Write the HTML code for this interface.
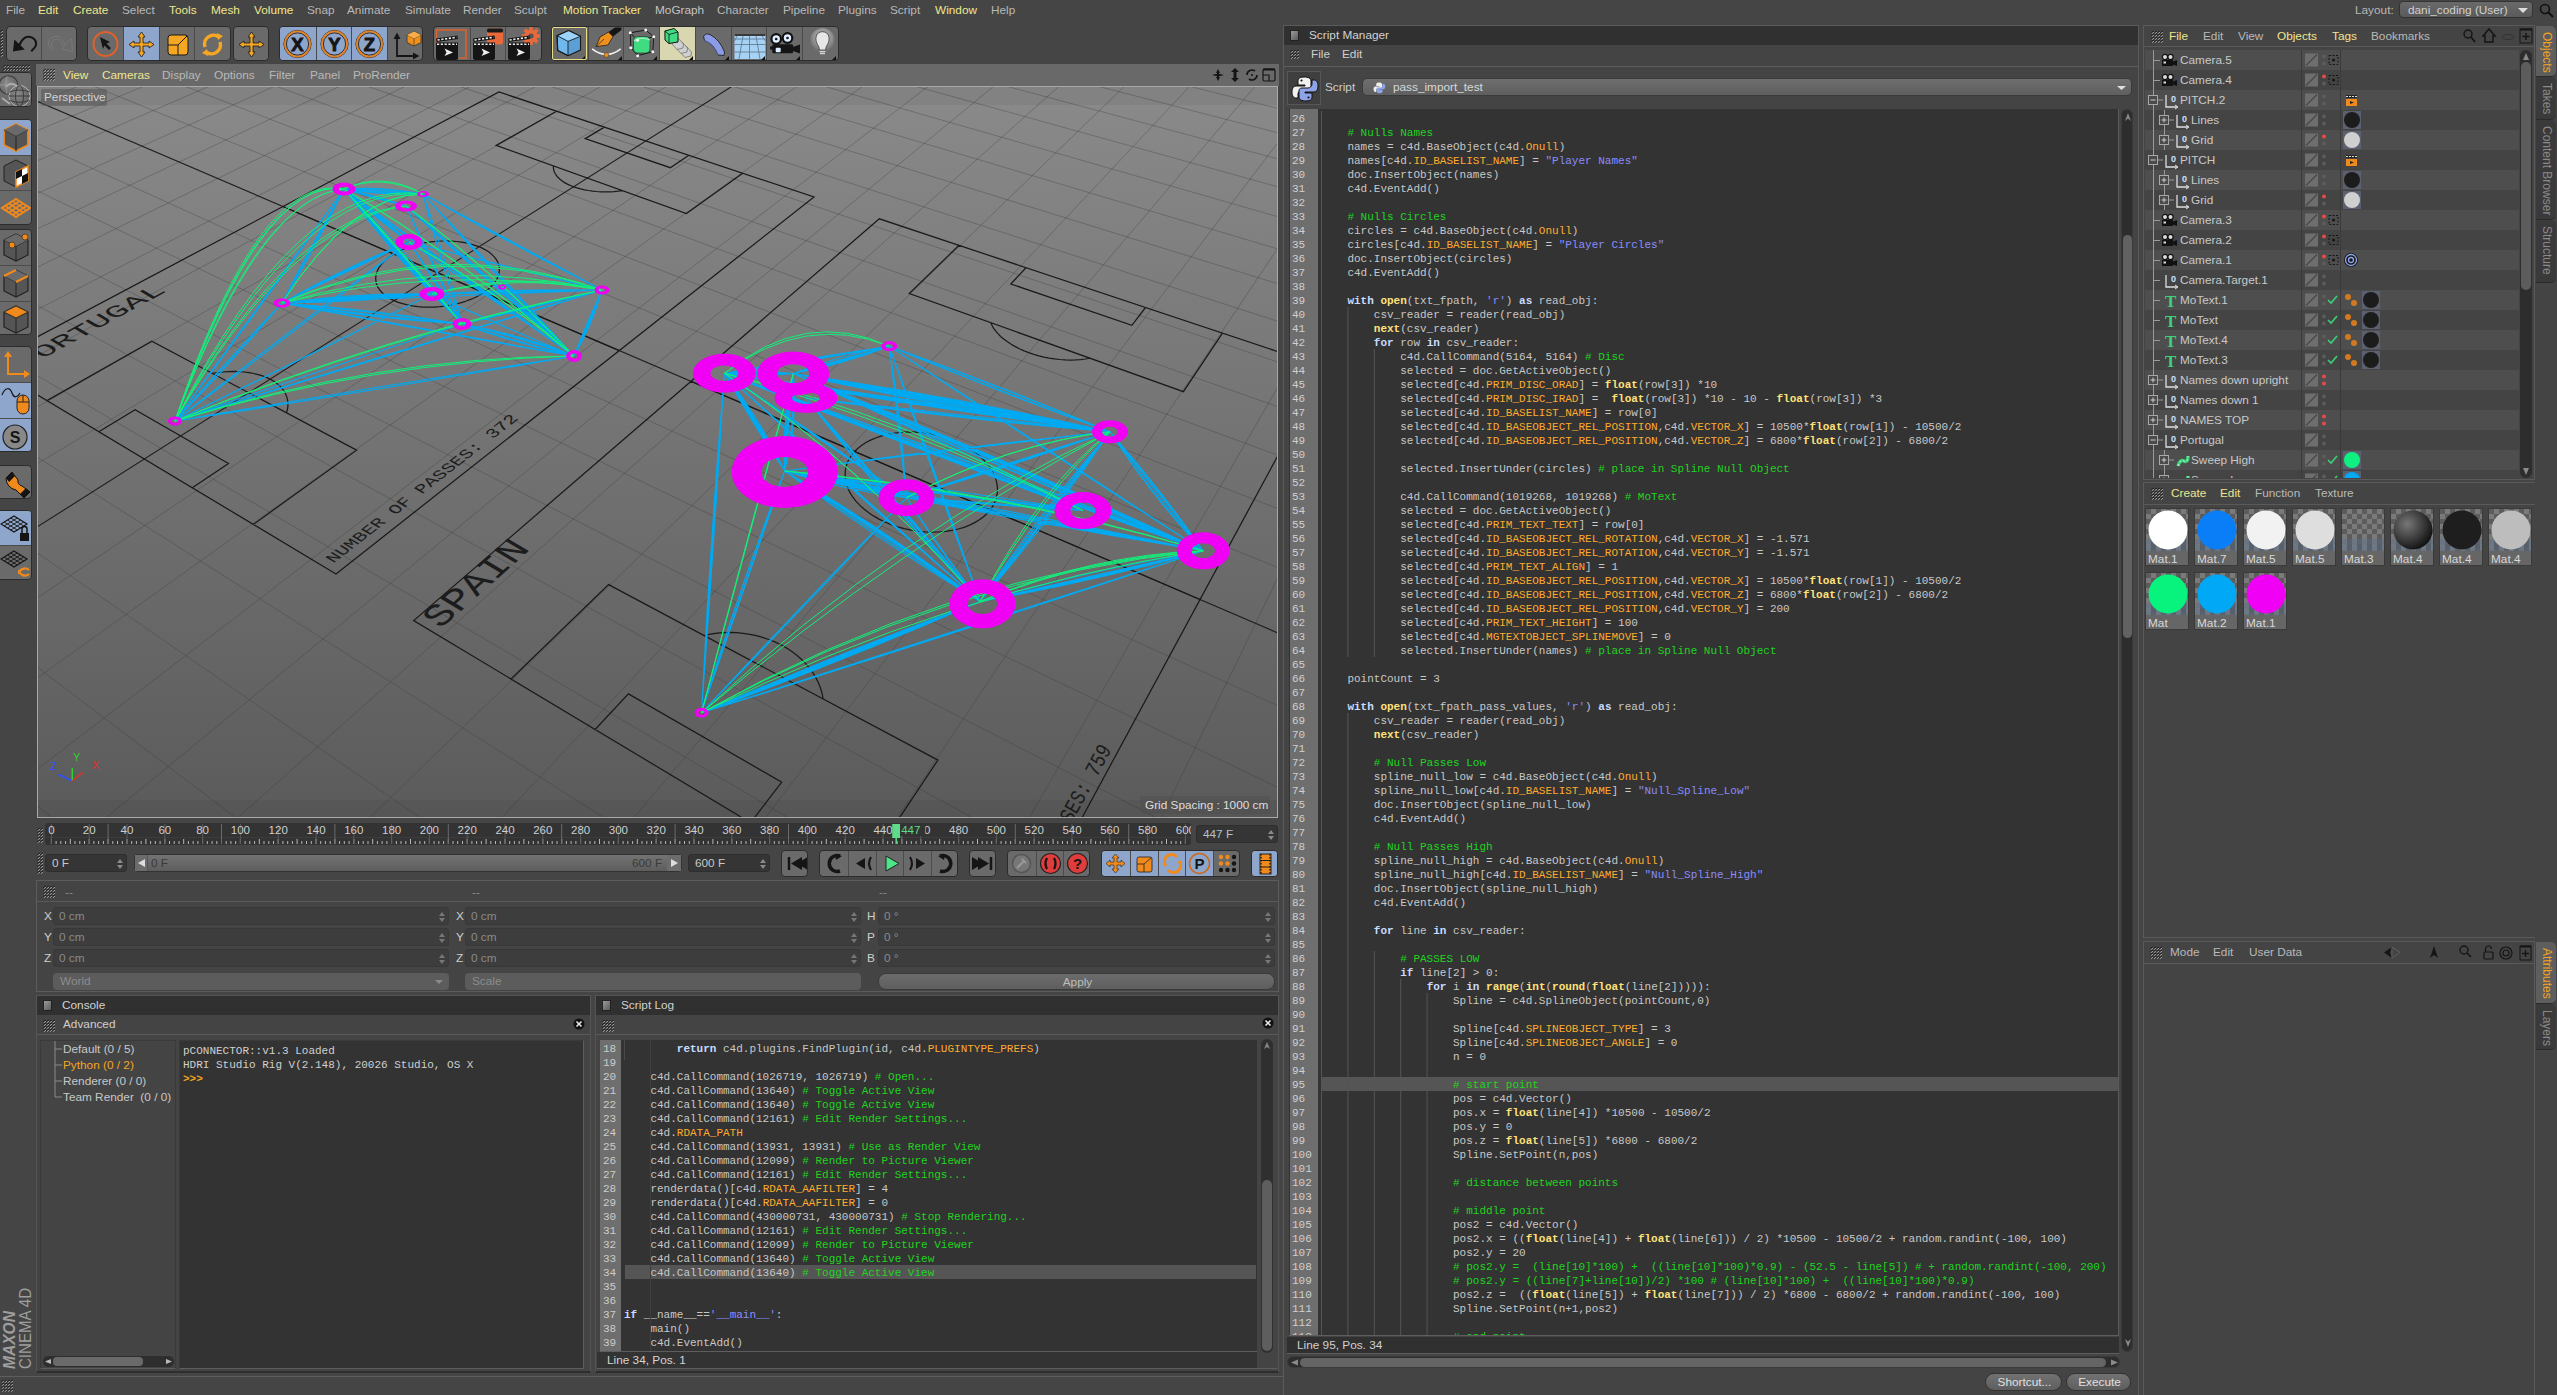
<!DOCTYPE html><html><head><meta charset="utf-8"><style>
*{margin:0;padding:0;box-sizing:border-box}
html,body{width:2557px;height:1395px;overflow:hidden;background:#454545}
body{position:relative;font-family:"Liberation Sans",sans-serif;font-size:12px;color:#bdbdbd}
div{position:absolute}
.t{white-space:pre;line-height:14px}
.m{font-family:"Liberation Mono",monospace;font-size:11px;white-space:pre;line-height:14px}
.grip{background:repeating-linear-gradient(45deg,rgba(28,28,28,0.85) 0 1.2px,transparent 1.2px 3.4px),repeating-linear-gradient(135deg,#d4d4d4 0 1.1px,#232323 1.1px 3.4px)}
.btn{background:#676767;border:1px solid #2e2e2e;border-radius:4px}
.bl{background:#8fa6cc}
.fld{background:#3c3c3c;border:1px solid #333;border-radius:3px}
svg{position:absolute;left:0;top:0;overflow:visible}
</style></head><body><div class="t" style="left:6px;top:3px;color:#b8b8b8;font-size:11.8px">File</div><div class="t" style="left:38px;top:3px;color:#efe68e;font-size:11.8px">Edit</div><div class="t" style="left:73px;top:3px;color:#efe68e;font-size:11.8px">Create</div><div class="t" style="left:122px;top:3px;color:#b8b8b8;font-size:11.8px">Select</div><div class="t" style="left:169px;top:3px;color:#efe68e;font-size:11.8px">Tools</div><div class="t" style="left:211px;top:3px;color:#efe68e;font-size:11.8px">Mesh</div><div class="t" style="left:254px;top:3px;color:#efe68e;font-size:11.8px">Volume</div><div class="t" style="left:307px;top:3px;color:#b8b8b8;font-size:11.8px">Snap</div><div class="t" style="left:347px;top:3px;color:#b8b8b8;font-size:11.8px">Animate</div><div class="t" style="left:405px;top:3px;color:#b8b8b8;font-size:11.8px">Simulate</div><div class="t" style="left:463px;top:3px;color:#b8b8b8;font-size:11.8px">Render</div><div class="t" style="left:514px;top:3px;color:#b8b8b8;font-size:11.8px">Sculpt</div><div class="t" style="left:563px;top:3px;color:#efe68e;font-size:11.8px">Motion Tracker</div><div class="t" style="left:655px;top:3px;color:#c4c4c4;font-size:11.8px">MoGraph</div><div class="t" style="left:717px;top:3px;color:#b8b8b8;font-size:11.8px">Character</div><div class="t" style="left:783px;top:3px;color:#b8b8b8;font-size:11.8px">Pipeline</div><div class="t" style="left:838px;top:3px;color:#b8b8b8;font-size:11.8px">Plugins</div><div class="t" style="left:890px;top:3px;color:#b8b8b8;font-size:11.8px">Script</div><div class="t" style="left:935px;top:3px;color:#efe68e;font-size:11.8px">Window</div><div class="t" style="left:991px;top:3px;color:#b8b8b8;font-size:11.8px">Help</div><div class="t" style="left:2355px;top:3px;color:#b8b8b8;font-size:11.8px">Layout:</div><div style="left:2399px;top:1px;width:134px;height:17px;background:linear-gradient(#6a6a6a,#5a5a5a);border:1px solid #333;border-radius:4px"><div class="t" style="left:8px;top:1px;color:#d0d0d0;font-size:11.8px">dani_coding (User)</div><svg width="134" height="17"><path d="M118 6 L128 6 L123 11 Z" fill="#ddd"/></svg></div><svg style="left:2538px;top:2px" width="18" height="18"><circle cx="7" cy="7" r="4.5" fill="none" stroke="#111" stroke-width="1.6"/><path d="M10 10 L15 15" stroke="#111" stroke-width="2"/></svg><svg style="left:0px;top:30px" width="3" height="27"><path d="M0.2 2.6 L2.6 0.2 M0.2 5.6 L2.6 3.2 M0.2 8.6 L2.6 6.2 M0.2 11.6 L2.6 9.2 M0.2 14.6 L2.6 12.2 M0.2 17.6 L2.6 15.2 M0.2 20.6 L2.6 18.2 M0.2 23.6 L2.6 21.2 M0.2 26.6 L2.6 24.2" stroke="#151515" stroke-width="1.3"/><path d="M0.9 2.8 L2.8 0.9 M0.9 5.8 L2.8 3.9 M0.9 8.8 L2.8 6.9 M0.9 11.8 L2.8 9.9 M0.9 14.8 L2.8 12.9 M0.9 17.8 L2.8 15.9 M0.9 20.8 L2.8 18.9 M0.9 23.8 L2.8 21.9 M0.9 26.8 L2.8 24.9" stroke="#e0e0e0" stroke-width="0.9"/></svg><div style="left:6px;top:26px;width:71px;height:35px;background:#6a6a6a;border:1px solid #2c2c2c;border-radius:4px;overflow:hidden"><div style="left:0px;top:0px;width:34px;height:33px;"><svg width="34" height="35"><path d="M5.9 24.4 L7.4 12.6 L17.8 22.6 Z" fill="#151515"/><path d="M12.5 18 C15 12 19 9.5 22 9.8 C27 10.2 30 14 28.8 18.5 C28 21 26 22.5 24.2 24.3" fill="none" stroke="#151515" stroke-width="2.1"/></svg></div><div style="left:34px;top:0px;width:35px;height:33px;border-left:1px solid #4a4a4a;"><svg width="35" height="35"><g fill="none" stroke="#7c7c7c" stroke-width="0.8"><path d="M30.5 24.5 L29.5 11.5 L19.5 22 Z"/><path d="M23 17.5 C20.5 11.5 16.5 9 13.5 9.5 C8.5 10 5.5 14 6.8 18.5 C7.5 21 9.5 22.5 11.3 24.3"/><path d="M21 18.5 C19 14 16 12 13.8 12.3 C10.5 12.8 9 15.5 9.5 18 C10 20 11 21 12.5 22.3"/></g></svg></div></div><div style="left:87px;top:26px;width:143.5px;height:35px;background:#6a6a6a;border:1px solid #2c2c2c;border-radius:4px;overflow:hidden"><div style="left:0px;top:0px;width:35px;height:33px;"><svg width="35" height="35"><circle cx="17.5" cy="17" r="12" fill="none" stroke="#e0612a" stroke-width="2"/><path d="M12 10 L22 15 L18.5 16.5 L23 21 L21 23 L16.5 18.5 L15 22 Z" fill="#151515"/></svg></div><div style="left:35px;top:0px;width:35.5px;height:33px;background:#8fa6cc;border-left:1px solid #4a4a4a;"><svg width="35.5" height="35"><g fill="#f5a623" stroke="#1a1a1a" stroke-width="0.8"><path d="M17.5 5 L21 10 L19 10 L19 16 L25 16 L25 14 L30 17.5 L25 21 L25 19 L19 19 L19 25 L21 25 L17.5 30 L14 25 L16 25 L16 19 L10 19 L10 21 L5 17.5 L10 14 L10 16 L16 16 L16 10 L14 10 Z"/></g></svg></div><div style="left:70.5px;top:0px;width:35.5px;height:33px;border-left:1px solid #4a4a4a;"><svg width="35.5" height="35"><rect x="8" y="8" width="20" height="20" rx="3" fill="#f5a623" stroke="#1a1a1a" stroke-width="1"/><path d="M8 18 L18 18 L18 28 M18 18 L27 9" fill="none" stroke="#1a1a1a" stroke-width="1"/></svg></div><div style="left:106.0px;top:0px;width:35.5px;height:33px;border-left:1px solid #4a4a4a;"><svg width="35.5" height="35"><path d="M10 20 A9 9 0 0 1 24 10" fill="none" stroke="#f5a623" stroke-width="3.5"/><path d="M25 15 A9 9 0 0 1 11 25" fill="none" stroke="#f5a623" stroke-width="3.5"/><path d="M22 6 L28 9 L23 13 Z M13 29 L7 26 L12 22 Z" fill="#f5a623"/></svg></div></div><div style="left:233px;top:26px;width:36px;height:35px;background:#6a6a6a;border:1px solid #2c2c2c;border-radius:4px;overflow:hidden"><div style="left:0px;top:0px;width:34px;height:33px;"><svg width="34" height="35"><g fill="#f5a623" stroke="#1a1a1a" stroke-width="0.8"><path d="M17.5 5 L21 10 L19 10 L19 16 L25 16 L25 14 L30 17.5 L25 21 L25 19 L19 19 L19 25 L21 25 L17.5 30 L14 25 L16 25 L16 19 L10 19 L10 21 L5 17.5 L10 14 L10 16 L16 16 L16 10 L14 10 Z"/></g></svg></div></div><div style="left:279px;top:26px;width:144.0px;height:35px;background:#6a6a6a;border:1px solid #2c2c2c;border-radius:4px;overflow:hidden"><div style="left:0px;top:0px;width:35.5px;height:33px;background:#8fa6cc;"><svg width="35.5" height="35"><circle cx="17.5" cy="17" r="13.6" fill="none" stroke="#222" stroke-width="0.9"/><circle cx="17.5" cy="17" r="12.4" fill="none" stroke="#e8821e" stroke-width="2"/><circle cx="17.5" cy="17" r="11.1" fill="none" stroke="#222" stroke-width="0.9"/><text x="17.5" y="23.5" font-family="Liberation Sans" font-weight="bold" font-size="18.5" text-anchor="middle" fill="#151515" stroke="#151515" stroke-width="0.9">X</text></svg></div><div style="left:35.5px;top:0px;width:35.5px;height:33px;background:#8fa6cc;border-left:1px solid #4a4a4a;"><svg width="35.5" height="35"><circle cx="17.5" cy="17" r="13.6" fill="none" stroke="#222" stroke-width="0.9"/><circle cx="17.5" cy="17" r="12.4" fill="none" stroke="#e8821e" stroke-width="2"/><circle cx="17.5" cy="17" r="11.1" fill="none" stroke="#222" stroke-width="0.9"/><text x="17.5" y="23.5" font-family="Liberation Sans" font-weight="bold" font-size="18.5" text-anchor="middle" fill="#151515" stroke="#151515" stroke-width="0.9">Y</text></svg></div><div style="left:71.0px;top:0px;width:35.5px;height:33px;background:#8fa6cc;border-left:1px solid #4a4a4a;"><svg width="35.5" height="35"><circle cx="17.5" cy="17" r="13.6" fill="none" stroke="#222" stroke-width="0.9"/><circle cx="17.5" cy="17" r="12.4" fill="none" stroke="#e8821e" stroke-width="2"/><circle cx="17.5" cy="17" r="11.1" fill="none" stroke="#222" stroke-width="0.9"/><text x="17.5" y="23.5" font-family="Liberation Sans" font-weight="bold" font-size="18.5" text-anchor="middle" fill="#151515" stroke="#151515" stroke-width="0.9">Z</text></svg></div><div style="left:106.5px;top:0px;width:35.5px;height:33px;border-left:1px solid #4a4a4a;"><svg width="35.5" height="35"><path d="M9 8 L9 29 L29 29" fill="none" stroke="#151515" stroke-width="1.8"/><path d="M5.5 12 L9 5.5 L12.5 12 Z M25 25.5 L31.5 29 L25 32.5 Z" fill="#151515"/><path d="M19 8 L26 4.5 L33 8 L33 15.5 L26 19 L19 15.5 Z" fill="#f0901c" stroke="#2a2a2a" stroke-width="0.7"/><path d="M19 8 L26 11.5 L33 8 M26 11.5 L26 19" fill="none" stroke="#2a2a2a" stroke-width="0.6"/><path d="M19 8 L26 4.5 L33 8 L26 11.5 Z" fill="#f7ad4a"/></svg></div></div><div style="left:433px;top:26px;width:108.5px;height:35px;background:#6a6a6a;border:1px solid #2c2c2c;border-radius:4px;overflow:hidden"><div style="left:0px;top:0px;width:35.5px;height:33px;"><svg width="35.5" height="35"><path d="M2.5 16 L2.5 3 L32 3 L32 31 L25 31" fill="none" stroke="#e0612a" stroke-width="1.6"/><path d="M2 19 L24 19 L24 31 Q24 33 22 33 L4 33 Q2 33 2 31 Z" fill="#151515"/><path d="M2 15.5 L24 15.5 L24 19 L2 19 Z" fill="#151515"/><path d="M3 17.3 L23 17.3" stroke="#eee" stroke-width="1.6" stroke-dasharray="2.2 1.6"/><path d="M2 11.5 L23.5 8.5 L24 12 L2.5 15 Z" fill="#151515"/><path d="M3.5 13 L22.5 10.3" stroke="#eee" stroke-width="1.6" stroke-dasharray="2.2 1.6"/><path d="M10.5 21.5 L19 25.5 L10.5 29 L12.5 25.5 Z" fill="#eee"/></svg></div><div style="left:35.5px;top:0px;width:35.5px;height:33px;border-left:1px solid #4a4a4a;"><svg width="35.5" height="35"><rect x="16" y="1.5" width="16" height="16" rx="2.5" fill="#e8693a"/><rect x="16" y="1.5" width="16" height="4" rx="1.5" fill="#1a1a1a"/><path d="M2 19 L24 19 L24 31 Q24 33 22 33 L4 33 Q2 33 2 31 Z" fill="#151515"/><path d="M2 15.5 L24 15.5 L24 19 L2 19 Z" fill="#151515"/><path d="M3 17.3 L23 17.3" stroke="#eee" stroke-width="1.6" stroke-dasharray="2.2 1.6"/><path d="M2 11.5 L23.5 8.5 L24 12 L2.5 15 Z" fill="#151515"/><path d="M3.5 13 L22.5 10.3" stroke="#eee" stroke-width="1.6" stroke-dasharray="2.2 1.6"/><path d="M10.5 21.5 L19 25.5 L10.5 29 L12.5 25.5 Z" fill="#eee"/></svg></div><div style="left:71.0px;top:0px;width:35.5px;height:33px;border-left:1px solid #4a4a4a;"><svg width="35.5" height="35"><g transform="translate(25,9)"><circle r="6.5" fill="#e8693a"/><g fill="#e8693a"><rect x="-1.8" y="-9" width="3.6" height="4"/><rect x="-1.8" y="5" width="3.6" height="4"/><rect x="-9" y="-1.8" width="4" height="3.6"/><rect x="5" y="-1.8" width="4" height="3.6"/><rect x="-1.8" y="-9" width="3.6" height="4" transform="rotate(45)"/><rect x="-1.8" y="5" width="3.6" height="4" transform="rotate(45)"/><rect x="-9" y="-1.8" width="4" height="3.6" transform="rotate(45)"/><rect x="5" y="-1.8" width="4" height="3.6" transform="rotate(45)"/></g><circle r="2.6" fill="#555"/></g><path d="M2 19 L24 19 L24 31 Q24 33 22 33 L4 33 Q2 33 2 31 Z" fill="#151515"/><path d="M2 15.5 L24 15.5 L24 19 L2 19 Z" fill="#151515"/><path d="M3 17.3 L23 17.3" stroke="#eee" stroke-width="1.6" stroke-dasharray="2.2 1.6"/><path d="M2 11.5 L23.5 8.5 L24 12 L2.5 15 Z" fill="#151515"/><path d="M3.5 13 L22.5 10.3" stroke="#eee" stroke-width="1.6" stroke-dasharray="2.2 1.6"/><path d="M10.5 21.5 L19 25.5 L10.5 29 L12.5 25.5 Z" fill="#eee"/></svg></div></div><div style="left:551px;top:26px;width:287.6px;height:35px;background:#6a6a6a;border:1px solid #2c2c2c;border-radius:4px;overflow:hidden"><div style="left:0px;top:0px;width:35.7px;height:33px;"><svg width="35.7" height="35"><path d="M16.6 3.6 L28.5 9.3 L28.5 23 L16 28.7 L5.7 23.5 L5.1 8.7 Z" fill="#6fb8ee" stroke="#1a1a1a" stroke-width="1.1"/><path d="M5.1 8.7 L16.6 3.6 L28.5 9.3 L16 14.4 Z" fill="#9ad3fb"/><path d="M16 14.4 L28.5 9.3 L28.5 23 L16 28.7 Z" fill="#5a9fd6"/><path d="M5.1 8.7 L16 14.4 L28.5 9.3 M16 14.4 L16 28.7" fill="none" stroke="#1a1a1a" stroke-width="0.9"/><path d="M16.6 3.6 L28.5 9.3 L28.5 23 L16 28.7 L5.7 23.5 L5.1 8.7 Z" fill="none" stroke="#1a1a1a" stroke-width="1.1"/><path d="M29 33 L33 29 L33 33 Z" fill="#111"/></svg></div><div style="left:35.7px;top:0px;width:35.7px;height:33px;border-left:1px solid #4a4a4a;"><svg width="35.7" height="35"><path d="M3.1 21.8 Q17.4 33 31.7 21.8" fill="none" stroke="#eeeeee" stroke-width="1.7"/><circle cx="17.4" cy="28" r="2.4" fill="#f0901c" stroke="#333" stroke-width="0.5"/><path d="M7.1 19.6 L11 10 L19.5 5 L24 9.5 L19 18 Z" fill="#f0901c" stroke="#222" stroke-width="0.8"/><path d="M7.1 19.6 L15 12" stroke="#222" stroke-width="0.7"/><path d="M19.5 5 L26 0.5 L32.5 0.5 L32.5 3 L24 9.5 Z" fill="#151515"/><path d="M29 33 L33 29 L33 33 Z" fill="#111"/></svg></div><div style="left:71.4px;top:0px;width:35.7px;height:33px;border-left:1px solid #4a4a4a;"><svg width="35.7" height="35"><g fill="none" stroke="#1a1a1a" stroke-width="1"><path d="M6.3 5.8 L21.7 3 L29.7 9.8 L28.8 24.7 L13.7 28.7 L6.8 20.7 Z"/><path d="M6.3 5.8 L13.5 13.3 L29.7 9.8 M13.5 13.3 L13.7 28.7"/></g><rect x="9.5" y="9.5" width="16.5" height="16.5" rx="4" fill="#3fdc82" stroke="#222" stroke-width="0.6"/><path d="M10 14 Q17 9 26 13" fill="none" stroke="#9ff0c0" stroke-width="1.2"/><g fill="#f4f4f4"><circle cx="6.3" cy="5.8" r="1.5"/><circle cx="21.7" cy="3" r="1.5"/><circle cx="29.7" cy="9.8" r="1.5"/><circle cx="28.8" cy="24.7" r="1.5"/><circle cx="13.7" cy="28.7" r="1.5"/><circle cx="6.8" cy="20.7" r="1.5"/><circle cx="13.5" cy="13.3" r="1.5"/></g><path d="M29 33 L33 29 L33 33 Z" fill="#111"/></svg></div><div style="left:107.10000000000001px;top:0px;width:35.7px;height:33px;background:#d9d7b0;border-left:1px solid #4a4a4a;"><svg width="35.7" height="35"><g fill="#d0d0d0" stroke="#555" stroke-width="0.6"><path d="M21 21 L26 19 L31.5 25 L31 29 L25 30.5 L20 25 Z"/><path d="M17 17 L22 15 L27.5 21 L27 25 L21 26.5 L16 21 Z"/><path d="M13 13 L18 11 L23.5 17 L23 21 L17 22.5 L12 17 Z"/></g><path d="M4.9 4 L14 1.5 L18 5 L18 15 L9 16.5 L5 13 Z" fill="#3fdc82" stroke="#111" stroke-width="1"/><path d="M4.9 4 L9 7.5 L18 5 M9 7.5 L9 16.5" fill="none" stroke="#111" stroke-width="0.8"/><path d="M29 33 L33 29 L33 33 Z" fill="#111"/></svg></div><div style="left:142.8px;top:0px;width:35.7px;height:33px;border-left:1px solid #4a4a4a;"><svg width="35.7" height="35"><path d="M7.5 9 Q10 5.5 14 7.5 Q24 13 28.5 25 L28 28.5 L22 28 Q18 17 8.5 13.5 Z" fill="#8c9be6" stroke="#222" stroke-width="0.9"/><path d="M8.5 13.5 Q18 17 22 28" fill="none" stroke="#5a66b0" stroke-width="0.9"/><path d="M29 33 L33 29 L33 33 Z" fill="#111"/></svg></div><div style="left:178.5px;top:0px;width:35.7px;height:33px;border-left:1px solid #4a4a4a;"><svg width="35.7" height="35"><rect x="2.5" y="7" width="31" height="25" fill="#a8d2f4"/><rect x="2.5" y="7" width="31" height="2" fill="#3a3a3a"/><path d="M2.5 12 L33.5 12 M2.5 17.5 L33.5 17.5 M2.5 25 L33.5 25 M17.5 9 L17.5 32 M11 9 L7 32 M24 9 L28 32 M5 9 L2.5 14 M30 9 L33.5 14" stroke="#5f7d96" stroke-width="0.9"/><path d="M29 33 L33 29 L33 33 Z" fill="#111"/></svg></div><div style="left:214.2px;top:0px;width:35.7px;height:33px;border-left:1px solid #4a4a4a;"><svg width="35.7" height="35"><circle cx="9.2" cy="12" r="4.8" fill="#dfefff" stroke="#111" stroke-width="2.2"/><circle cx="9.2" cy="12" r="1.3" fill="#111"/><circle cx="20.5" cy="11" r="4.8" fill="#dfefff" stroke="#111" stroke-width="2.2"/><circle cx="20.5" cy="11" r="1.3" fill="#111"/><rect x="5.2" y="17.3" width="21" height="9" rx="1.5" fill="#151515"/><path d="M26 20 L33 17.5 L33 26.5 L26 24 Z" fill="#151515"/><rect x="3" y="19.5" width="3" height="3" fill="#151515"/><rect x="8.7" y="20.7" width="5" height="4.5" rx="1" fill="#dfefff"/><path d="M29 33 L33 29 L33 33 Z" fill="#111"/></svg></div><div style="left:249.89999999999998px;top:0px;width:35.7px;height:33px;border-left:1px solid #4a4a4a;"><svg width="35.7" height="35"><defs><radialGradient id="lg" cx="0.5" cy="0.4" r="0.6"><stop offset="0" stop-color="#ffffff" stop-opacity="0.7"/><stop offset="1" stop-color="#ffffff" stop-opacity="0"/></radialGradient></defs><circle cx="19.5" cy="13" r="12" fill="url(#lg)"/><path d="M19.5 4.7 C12.5 4.7 11.5 12.5 14.5 17.5 C16 20 16.3 21 16.3 23 L22.7 23 C22.7 21 23 20 24.5 17.5 C27.5 12.5 26.5 4.7 19.5 4.7 Z" fill="#e6e6e6" stroke="#333" stroke-width="0.8"/><path d="M16.5 24.5 L22.5 24.5 M17 26.5 L22 26.5" stroke="#d0d0d0" stroke-width="1.4"/><path d="M29 33 L33 29 L33 33 Z" fill="#111"/></svg></div></div><div style="left:552px;top:27px;width:35px;height:33px;border:1px solid #e8de86;border-radius:2px"></div><svg style="left:3px;top:65px" width="26" height="5"><path d="M0.2 2.6 L2.6 0.2 M0.2 5.6 L2.6 3.2 M3.2 2.6 L5.6 0.2 M3.2 5.6 L5.6 3.2 M6.2 2.6 L8.6 0.2 M6.2 5.6 L8.6 3.2 M9.2 2.6 L11.6 0.2 M9.2 5.6 L11.6 3.2 M12.2 2.6 L14.6 0.2 M12.2 5.6 L14.6 3.2 M15.2 2.6 L17.6 0.2 M15.2 5.6 L17.6 3.2 M18.2 2.6 L20.6 0.2 M18.2 5.6 L20.6 3.2 M21.2 2.6 L23.6 0.2 M21.2 5.6 L23.6 3.2 M24.2 2.6 L26.6 0.2 M24.2 5.6 L26.6 3.2" stroke="#151515" stroke-width="1.3"/><path d="M0.9 2.8 L2.8 0.9 M0.9 5.8 L2.8 3.9 M3.9 2.8 L5.8 0.9 M3.9 5.8 L5.8 3.9 M6.9 2.8 L8.8 0.9 M6.9 5.8 L8.8 3.9 M9.9 2.8 L11.8 0.9 M9.9 5.8 L11.8 3.9 M12.9 2.8 L14.8 0.9 M12.9 5.8 L14.8 3.9 M15.9 2.8 L17.8 0.9 M15.9 5.8 L17.8 3.9 M18.9 2.8 L20.8 0.9 M18.9 5.8 L20.8 3.9 M21.9 2.8 L23.8 0.9 M21.9 5.8 L23.8 3.9 M24.9 2.8 L26.8 0.9 M24.9 5.8 L26.8 3.9" stroke="#e0e0e0" stroke-width="0.9"/></svg><div style="left:-1px;top:72px;width:33px;height:35px;background:#6a6a6a;border:1px solid #2c2c2c;border-radius:0 4px 4px 0;overflow:hidden"><div style="left:0px;top:0px;width:32px;height:35px;background:#6c6c6c;"><svg width="32" height="35"><defs><radialGradient id="gl" cx="0.4" cy="0.4" r="0.7"><stop offset="0" stop-color="#8a8a8a"/><stop offset="1" stop-color="#5e5e5e"/></radialGradient></defs><circle cx="8.5" cy="12" r="9.3" fill="url(#gl)" stroke="#3a3a3a" stroke-width="1.1"/><path d="M7 3 Q4 12 7 21 M-1 12 L17 12" stroke="#9a9a9a" stroke-width="0.8" fill="none"/><circle cx="19.5" cy="23" r="10.5" fill="url(#gl)" stroke="#b8b8b8" stroke-width="1"/><g stroke="#3c3c3c" stroke-width="1" fill="none"><ellipse cx="19.5" cy="23" rx="4" ry="10.5"/><path d="M9.5 19 Q19.5 15 29.5 19 M9 23 L30 23 M9.5 27.5 Q19.5 31 29.5 27.5"/></g><path d="M2 25 L10 31 M6 14 Q10 8 17 13" stroke="#aaa" stroke-width="1.8" fill="none"/></svg></div></div><div style="left:-1px;top:119px;width:33px;height:106px;background:#6a6a6a;border:1px solid #2c2c2c;border-radius:0 4px 4px 0;overflow:hidden"><div style="left:0px;top:0px;width:32px;height:35px;background:#8fa6cc;"><svg width="32" height="35"><path d="M16 4 L28 10 L28 25 L16 31 L4 25 L4 10 Z" fill="#555" stroke="#f08a1c" stroke-width="1.8"/><path d="M4 10 L16 16 L28 10 M16 16 L16 31" fill="none" stroke="#222" stroke-width="1"/><path d="M4 10 L16 4 L28 10 L16 16 Z" fill="#6a6a6a"/></svg></div><div style="left:0px;top:35px;width:32px;height:35px;border-top:1px solid #4c4c4c;"><svg width="32" height="35"><path d="M16 4 L28 10 L28 25 L16 31 L4 25 L4 10 Z" fill="#555" stroke="#222" stroke-width="1"/><path d="M16 16 L28 10 L28 25 L16 31 Z" fill="#fff" stroke="#f08a1c" stroke-width="1.5"/><g fill="#111"><path d="M16 16 L22 13 L22 20 L16 23 Z"/><path d="M22 20 L28 17 L28 25 L22 28 Z"/></g></svg></div><div style="left:0px;top:70px;width:32px;height:36px;border-top:1px solid #4c4c4c;"><svg width="32" height="36"><path d="M16 8 L30 17 L16 26 L2 17 Z" fill="none" stroke="#f08a1c" stroke-width="2"/><path d="M9 12.5 L23 21.5 M23 12.5 L9 21.5 M12.5 10 L26 19 M5.5 15 L19.5 24 M19.5 10 L5.5 19 M26.5 15 L12.5 24" stroke="#f08a1c" stroke-width="1.5"/></svg></div></div><div style="left:-1px;top:229px;width:33px;height:106px;background:#6a6a6a;border:1px solid #2c2c2c;border-radius:0 4px 4px 0;overflow:hidden"><div style="left:0px;top:0px;width:32px;height:35px;"><svg width="32" height="35"><path d="M16 4 L28 10 L28 25 L16 31 L4 25 L4 10 Z" fill="#555" stroke="#222" stroke-width="1.2"/><path d="M4 10 L16 16 L28 10 M16 16 L16 31" fill="none" stroke="#222" stroke-width="1"/><path d="M4 10 L16 4 L28 10 L16 16 Z" fill="#6a6a6a"/><circle cx="25" cy="7" r="3" fill="#f08a1c" stroke="#222" stroke-width="0.6"/><circle cx="12" cy="15" r="3" fill="#f08a1c" stroke="#222" stroke-width="0.6"/></svg></div><div style="left:0px;top:35px;width:32px;height:36px;border-top:1px solid #4c4c4c;"><svg width="32" height="36"><path d="M16 4 L28 10 L28 25 L16 31 L4 25 L4 10 Z" fill="#555" stroke="#222" stroke-width="1.2"/><path d="M4 10 L16 16 L28 10 M16 16 L16 31" fill="none" stroke="#222" stroke-width="1"/><path d="M4 10 L16 4 L28 10 L16 16 Z" fill="#6a6a6a"/><path d="M4 10 L16 4 M16 16 L28 10" stroke="#f08a1c" stroke-width="2"/></svg></div><div style="left:0px;top:71px;width:32px;height:35px;border-top:1px solid #4c4c4c;"><svg width="32" height="35"><path d="M16 4 L28 10 L28 25 L16 31 L4 25 L4 10 Z" fill="#555" stroke="#222" stroke-width="1.2"/><path d="M4 10 L16 16 L28 10 M16 16 L16 31" fill="none" stroke="#222" stroke-width="1"/><path d="M4 10 L16 4 L28 10 L16 16 Z" fill="#6a6a6a"/><path d="M4 10 L16 4 L28 10 L16 16 Z" fill="#f08a1c" stroke="#222" stroke-width="0.8"/></svg></div></div><div style="left:-1px;top:346px;width:33px;height:106px;background:#6a6a6a;border:1px solid #2c2c2c;border-radius:0 4px 4px 0;overflow:hidden"><div style="left:0px;top:0px;width:32px;height:35px;"><svg width="32" height="35"><path d="M8 6 L8 27 L27 27" fill="none" stroke="#f08a1c" stroke-width="2"/><path d="M4 10 L8 4 L12 10 Z M24 23 L30 27 L24 31 Z" fill="#f08a1c"/></svg></div><div style="left:0px;top:35px;width:32px;height:36px;background:#8fa6cc;border-top:1px solid #4c4c4c;"><svg width="32" height="36"><path d="M2 12 C5 4 10 4 12 10 C14 16 18 14 20 10" fill="none" stroke="#151515" stroke-width="1.2"/><rect x="17" y="12" width="12" height="19" rx="6" fill="#f08a1c" stroke="#222" stroke-width="1"/><path d="M17 19 L29 19 M23 12 L23 19" stroke="#222" stroke-width="1"/></svg></div><div style="left:0px;top:71px;width:32px;height:35px;background:#8fa6cc;border-top:1px solid #4c4c4c;"><svg width="32" height="35"><circle cx="15" cy="18" r="12" fill="#888" stroke="#222" stroke-width="1.2"/><text x="15" y="24" font-family="Liberation Sans" font-weight="bold" font-size="16" text-anchor="middle" fill="#151515">S</text></svg></div></div><div style="left:-1px;top:465px;width:33px;height:34px;background:#6a6a6a;border:1px solid #2c2c2c;border-radius:0 4px 4px 0;overflow:hidden"><div style="left:0px;top:0px;width:32px;height:34px;"><svg width="32" height="34"><path d="M6 12 L12 6 L18 14 A5 5 0 0 0 22 20 L30 26 L24 32 L16 24 A12 12 0 0 1 6 12 Z" fill="#f08a1c" stroke="#111" stroke-width="1"/><path d="M6 12 L12 6 L15 10 L9 16 Z M30 26 L24 32 L20 28 L26 22 Z" fill="#151515"/></svg></div></div><div style="left:-1px;top:510px;width:33px;height:70px;background:#6a6a6a;border:1px solid #2c2c2c;border-radius:0 4px 4px 0;overflow:hidden"><div style="left:0px;top:0px;width:32px;height:34px;background:#8fa6cc;"><svg width="32" height="34"><path d="M14 5 L27 13 L14 21 L1 13 Z" fill="none" stroke="#151515" stroke-width="1.2"/><path d="M7.5 9 L20.5 17 M20.5 9 L7.5 17 M10.7 7 L23.7 15 M4.2 11 L17.2 19 M17.2 7 L4.2 15 M23.7 11 L10.7 19" stroke="#151515" stroke-width="0.9"/><rect x="20" y="22" width="9" height="8" fill="#151515"/><path d="M22 22 L22 18 A2.5 2.5 0 0 1 27 18 L27 22" fill="none" stroke="#151515" stroke-width="1.5"/></svg></div><div style="left:0px;top:34px;width:32px;height:36px;border-top:1px solid #4c4c4c;"><svg width="32" height="36"><path d="M14 5 L27 13 L14 21 L1 13 Z" fill="none" stroke="#151515" stroke-width="1.2"/><path d="M7.5 9 L20.5 17 M20.5 9 L7.5 17 M10.7 7 L23.7 15 M4.2 11 L17.2 19 M17.2 7 L4.2 15 M23.7 11 L10.7 19" stroke="#151515" stroke-width="0.9"/><path d="M19 24 A6 6 0 0 0 29 28 M29 24 A6 6 0 0 0 19 28" fill="none" stroke="#f08a1c" stroke-width="2.2"/></svg></div></div><svg style="left:0px;top:1280px" width="36" height="92"><g transform="translate(15,89) rotate(-90)"><text x="0" y="0" font-family="Liberation Sans" font-weight="bold" font-style="italic" font-size="16" textLength="58" lengthAdjust="spacingAndGlyphs" fill="#9e9e9e">MAXON</text></g><g transform="translate(30.5,89) rotate(-90)"><text x="0" y="0" font-family="Liberation Sans" font-size="16.5" textLength="81" lengthAdjust="spacingAndGlyphs" fill="#9e9e9e">CINEMA 4D</text></g></svg><svg style="left:1px;top:1380px" width="12" height="12"><path d="M0.2 2.6 L2.6 0.2 M0.2 5.6 L2.6 3.2 M0.2 8.6 L2.6 6.2 M0.2 11.6 L2.6 9.2 M3.2 2.6 L5.6 0.2 M3.2 5.6 L5.6 3.2 M3.2 8.6 L5.6 6.2 M3.2 11.6 L5.6 9.2 M6.2 2.6 L8.6 0.2 M6.2 5.6 L8.6 3.2 M6.2 8.6 L8.6 6.2 M6.2 11.6 L8.6 9.2 M9.2 2.6 L11.6 0.2 M9.2 5.6 L11.6 3.2 M9.2 8.6 L11.6 6.2 M9.2 11.6 L11.6 9.2" stroke="#151515" stroke-width="1.3"/><path d="M0.9 2.8 L2.8 0.9 M0.9 5.8 L2.8 3.9 M0.9 8.8 L2.8 6.9 M0.9 11.8 L2.8 9.9 M3.9 2.8 L5.8 0.9 M3.9 5.8 L5.8 3.9 M3.9 8.8 L5.8 6.9 M3.9 11.8 L5.8 9.9 M6.9 2.8 L8.8 0.9 M6.9 5.8 L8.8 3.9 M6.9 8.8 L8.8 6.9 M6.9 11.8 L8.8 9.9 M9.9 2.8 L11.8 0.9 M9.9 5.8 L11.8 3.9 M9.9 8.8 L11.8 6.9 M9.9 11.8 L11.8 9.9" stroke="#e0e0e0" stroke-width="0.9"/></svg><div style="left:36px;top:64px;width:1243px;height:22px;background:#696969"></div><svg style="left:43px;top:69px" width="11" height="11"><path d="M0.2 2.6 L2.6 0.2 M0.2 5.6 L2.6 3.2 M0.2 8.6 L2.6 6.2 M0.2 11.6 L2.6 9.2 M3.2 2.6 L5.6 0.2 M3.2 5.6 L5.6 3.2 M3.2 8.6 L5.6 6.2 M3.2 11.6 L5.6 9.2 M6.2 2.6 L8.6 0.2 M6.2 5.6 L8.6 3.2 M6.2 8.6 L8.6 6.2 M6.2 11.6 L8.6 9.2 M9.2 2.6 L11.6 0.2 M9.2 5.6 L11.6 3.2 M9.2 8.6 L11.6 6.2 M9.2 11.6 L11.6 9.2" stroke="#151515" stroke-width="1.3"/><path d="M0.9 2.8 L2.8 0.9 M0.9 5.8 L2.8 3.9 M0.9 8.8 L2.8 6.9 M0.9 11.8 L2.8 9.9 M3.9 2.8 L5.8 0.9 M3.9 5.8 L5.8 3.9 M3.9 8.8 L5.8 6.9 M3.9 11.8 L5.8 9.9 M6.9 2.8 L8.8 0.9 M6.9 5.8 L8.8 3.9 M6.9 8.8 L8.8 6.9 M6.9 11.8 L8.8 9.9 M9.9 2.8 L11.8 0.9 M9.9 5.8 L11.8 3.9 M9.9 8.8 L11.8 6.9 M9.9 11.8 L11.8 9.9" stroke="#e0e0e0" stroke-width="0.9"/></svg><div class="t" style="left:63px;top:68px;color:#efe68e;font-size:11.8px">View</div><div class="t" style="left:102px;top:68px;color:#efe68e;font-size:11.8px">Cameras</div><div class="t" style="left:162px;top:68px;color:#b9b9b9;font-size:11.8px">Display</div><div class="t" style="left:214px;top:68px;color:#b9b9b9;font-size:11.8px">Options</div><div class="t" style="left:269px;top:68px;color:#b9b9b9;font-size:11.8px">Filter</div><div class="t" style="left:310px;top:68px;color:#b9b9b9;font-size:11.8px">Panel</div><div class="t" style="left:353px;top:68px;color:#b9b9b9;font-size:11.8px">ProRender</div><svg style="left:1210px;top:66px" width="68" height="18"><path d="M8 3 L10 7 L9 7 L9 8 L10 8 L14 9 L10 10 L9 10 L9 11 L10 11 L8 15 L6 11 L7 11 L7 10 L6 10 L2 9 L6 8 L7 8 L7 7 L6 7 Z" fill="#151515"/><path d="M25 2 L29 6 L26.5 6 L26.5 12 L29 12 L25 16 L21 12 L23.5 12 L23.5 6 L21 6 Z" fill="#151515"/><path d="M37 9 A5 5 0 0 1 45 5 M47 9 A5 5 0 0 1 39 13" fill="none" stroke="#151515" stroke-width="1.6"/><circle cx="42" cy="9" r="1" fill="#151515"/><rect x="53" y="3" width="12" height="12" rx="1.5" fill="none" stroke="#151515" stroke-width="1.2"/><path d="M53 9 L59 9 L59 15" fill="none" stroke="#151515" stroke-width="1.2"/><path d="M53 3.5 L65 3.5" stroke="#151515" stroke-width="2"/></svg><div style="left:37px;top:86px;width:1241px;height:732px;border:1px solid #a9a9a9;background:#777"></div><div style="left:38px;top:87px;width:1239px;height:730px;overflow:hidden"><svg width="1239" height="730" style="overflow:hidden"><defs><linearGradient id="vg" x1="0" y1="0" x2="0" y2="1"><stop offset="0" stop-color="#8a8a8a"/><stop offset="1" stop-color="#5b5b5b"/></linearGradient></defs><rect width="1239" height="730" fill="url(#vg)"/><path d="M-32790.5 10604.3 L-5650.4 714.9 M25147.6 10600.5 L3191.5 -58.2 M-31353.2 10604.2 L-5284.7 644.7 M24118.2 10600.5 L3109.6 -69.3 M-29916.0 10604.1 L-4953.1 581.1 M23088.8 10600.6 L3030.3 -80.0 M-28478.7 10604.0 L-4651.0 523.2 M22059.4 10600.7 L2953.6 -90.3 M-27041.4 10603.9 L-4374.7 470.1 M21030.0 10600.7 L2879.4 -100.3 M-25604.1 10603.8 L-4121.0 421.5 M20000.7 10600.8 L2807.4 -110.0 M-24166.9 10603.7 L-3887.3 376.6 M18971.3 10600.9 L2737.7 -119.4 M-22729.6 10603.6 L-3671.2 335.2 M17941.9 10600.9 L2670.2 -128.5 M-21292.3 10603.5 L-3470.8 296.7 M16912.5 10601.0 L2604.6 -137.4 M-19855.1 10603.4 L-3284.6 261.0 M15883.1 10601.1 L2541.0 -146.0 M-18417.8 10603.3 L-3110.9 227.7 M14853.7 10601.1 L2479.2 -154.3 M-16980.5 10603.2 L-2948.7 196.5 M13824.3 10601.2 L2419.2 -162.4 M-15543.3 10603.1 L-2796.8 167.4 M12794.9 10601.3 L2360.8 -170.3 M-14106.0 10603.0 L-2654.3 140.1 M11765.5 10601.3 L2304.1 -177.9 M-12668.7 10602.9 L-2520.3 114.3 M10736.2 10601.4 L2249.0 -185.3 M-11231.4 10602.9 L-2394.1 90.1 M9706.8 10601.5 L2195.3 -192.6 M-9794.2 10602.8 L-2275.0 67.3 M8677.4 10601.5 L2143.1 -199.6 M-8356.9 10602.7 L-2162.4 45.7 M7648.0 10601.6 L2092.3 -206.5 M-6919.6 10602.6 L-2055.8 25.2 M6618.6 10601.7 L2042.8 -213.2 M-5482.4 10602.5 L-1954.8 5.9 M5589.2 10601.7 L1994.5 -219.7 M-4045.1 10602.4 L-1858.9 -12.5 M4559.8 10601.8 L1947.5 -226.0 M-2607.8 10602.3 L-1767.7 -30.0 M3530.4 10601.9 L1901.7 -232.2 M-1170.6 10602.2 L-1681.0 -46.7 M2501.0 10601.9 L1857.0 -238.2 M266.7 10602.1 L-1598.3 -62.5 M1471.7 10602.0 L1813.3 -244.1 M1704.0 10602.0 L-1519.5 -77.7 M442.3 10602.1 L1770.8 -249.8 M3141.3 10601.9 L-1444.1 -92.1 M-587.1 10602.2 L1729.2 -255.5 M4578.5 10601.8 L-1372.1 -105.9 M-1616.5 10602.2 L1688.7 -260.9 M6015.8 10601.7 L-1303.2 -119.2 M-2645.9 10602.3 L1649.0 -266.3 M7453.1 10601.6 L-1237.2 -131.8 M-3675.3 10602.4 L1610.3 -271.5 M8890.3 10601.5 L-1174.0 -144.0 M-4704.7 10602.4 L1572.5 -276.6 M10327.6 10601.4 L-1113.2 -155.6 M-5734.1 10602.5 L1535.5 -281.6 M11764.9 10601.3 L-1054.9 -166.8 M-6763.5 10602.6 L1499.4 -286.5 M13202.1 10601.2 L-998.9 -177.5 M-7792.9 10602.6 L1464.0 -291.2 M14639.4 10601.2 L-945.0 -187.9 M-8822.2 10602.7 L1429.4 -295.9 M16076.7 10601.1 L-893.1 -197.8 M-9851.6 10602.8 L1395.6 -300.5 M17514.0 10601.0 L-843.1 -207.4 M-10881.0 10602.8 L1362.4 -304.9 M18951.2 10600.9 L-795.0 -216.7 M-11910.4 10602.9 L1330.0 -309.3 M20388.5 10600.8 L-748.5 -225.6 M-12939.8 10603.0 L1298.3 -313.6 M21825.8 10600.7 L-703.6 -234.2 M-13969.2 10603.0 L1267.2 -317.8 M23263.0 10600.6 L-660.3 -242.5 M-14998.6 10603.1 L1236.7 -321.9 M20053.2 8127.4 L-578.0 -258.3 M-17057.4 10603.2 L1177.6 -329.8 M15664.7 5997.0 L-538.8 -265.8 M-18086.7 10603.3 L1149.0 -333.7 M12979.6 4693.4 L-500.9 -273.1 M-19116.1 10603.4 L1120.9 -337.5 M11167.2 3813.6 L-464.2 -280.1 M-20145.5 10603.4 L1093.3 -341.2 M9861.6 3179.8 L-428.6 -287.0 M-21174.9 10603.5 L1066.3 -344.9 M8876.3 2701.5 L-394.1 -293.6 M-22204.3 10603.6 L1039.8 -348.4 M8106.3 2327.7 L-360.7 -300.0 M-23233.7 10603.6 L1013.8 -351.9 M7487.9 2027.5 L-328.2 -306.2 M-24263.1 10603.7 L988.3 -355.4 M6980.5 1781.1 L-296.7 -312.3 M-25292.5 10603.8 L963.2 -358.8 M6556.5 1575.3 L-266.1 -318.1 M-26321.9 10603.8 L938.6 -362.1 M6197.0 1400.8 L-236.4 -323.8 M-27351.2 10603.9 L914.5 -365.3 M5888.4 1251.0 L-207.5 -329.4 M-28380.6 10604.0 L890.8 -368.5 M5620.4 1120.9 L-179.4 -334.8 M-29410.0 10604.0 L867.5 -371.7 M5385.7 1006.9 L-152.1 -340.0 M-30439.4 10604.1 L844.6 -374.8 M5178.3 906.3 L-125.5 -345.1 M-31468.8 10604.2 L822.2 -377.8 M4993.7 816.7 L-99.6 -350.1 M-32498.2 10604.2 L800.1 -380.8 M4828.5 736.4 L-74.4 -354.9 M-27436.8 8653.5 L778.4 -383.7 M4679.6 664.2 L-49.8 -359.6 M-22448.3 6835.7 L757.1 -386.6 M4544.8 598.7 L-25.9 -364.2 M-19080.3 5608.5 L736.1 -389.4 M4422.2 539.2 L-2.5 -368.7 M-16653.5 4724.2 L715.5 -392.2 M4310.2 484.8 L20.2 -373.1 M-14821.8 4056.8 L695.2 -394.9 M4207.4 434.9 L42.4 -377.3 M-13390.2 3535.1 L675.3 -397.6 M4112.8 389.0 L64.1 -381.5 M-12240.5 3116.2 L655.7 -400.2 M4025.5 346.6 L85.2 -385.6 M-11296.9 2772.4 L636.4 -402.8 M3944.5 307.3 L105.9 -389.5 M-10508.6 2485.1 L617.5 -405.4 M3869.4 270.8 L126.0 -393.4 M-9840.1 2241.5 L598.8 -407.9 M3799.4 236.9 L145.7 -397.2 M-9266.0 2032.3 L580.4 -410.4 M3734.0 205.1 L165.0 -400.8 M-8767.7 1850.8 L562.3 -412.8 M3672.8 175.4 L183.8 -404.5 M-8331.0 1691.7 L544.5 -415.2 M3615.5 147.6 L202.2 -408.0 M-7945.3 1551.1 L527.0 -417.6 M3561.6 121.4 L220.1 -411.4 M-7602.1 1426.0 L509.8 -419.9 M3510.8 96.8 L237.7 -414.8 M-7294.7 1314.0 L492.8 -422.2 M3462.9 73.5 L254.9 -418.1 M-7017.8 1213.1 L476.0 -424.5 M3417.7 51.6 L271.8 -421.3 M-6767.0 1121.8 L459.6 -426.7 M3375.0 30.8 L288.3 -424.5 M-6538.9 1038.6 L443.3 -428.9 M3334.4 11.1 L304.4 -427.6 M-6330.5 962.7 L427.3 -431.0 M3295.9 -7.5 L320.2 -430.6 M-6139.4 893.1 L411.6 -433.2 M3259.4 -25.3 L335.7 -433.6 M-5963.5 829.0 L396.1 -435.3 M3224.6 -42.1 L350.8 -436.5 M-5801.0 769.7 L380.8 -437.3 M3191.5 -58.2 L365.7 -439.4 M-5650.4 714.9 L365.7 -439.4" stroke="#3c3c3c" stroke-opacity="0.38" stroke-width="0.9" fill="none"/><path d="M24700.3 10600.5 L-618.4 -250.5 M-16028.0 10603.2 L1206.9 -325.9" stroke="#1e1e1e" stroke-width="1.1" fill="none"/><path d="M298.0 487.0 L776.0 110.0 L461.0 5.0 L-52.0 277.0 L298.0 487.0 M581.2 263.6 L245.0 119.5 M441.0 159.7 L437.0 158.3 L432.7 157.0 L428.2 155.9 L423.5 155.1 L418.6 154.5 L413.6 154.1 L408.5 153.9 L403.3 154.0 L398.1 154.4 L392.9 154.9 L387.8 155.7 L382.7 156.7 L377.7 157.9 L372.9 159.4 L368.3 161.0 L363.9 162.8 L359.7 164.8 L355.8 167.0 L352.2 169.3 L349.0 171.8 L346.1 174.4 L343.6 177.1 L341.5 179.8 L339.9 182.6 L338.7 185.5 L337.9 188.4 L337.7 191.3 L337.9 194.2 L338.5 197.0 L339.7 199.7 L341.3 202.4 L343.4 205.0 L346.0 207.4 L348.9 209.6 L352.3 211.7 L356.1 213.6 L360.2 215.3 L364.7 216.7 L369.4 217.9 L374.4 218.9 L379.7 219.6 L385.0 220.1 L390.5 220.2 L396.1 220.1 L401.7 219.7 L407.3 219.1 L412.8 218.2 L418.2 217.0 L423.4 215.7 L428.4 214.0 L433.2 212.2 L437.7 210.2 L441.9 207.9 L445.8 205.6 L449.2 203.0 L452.3 200.4 L455.0 197.7 L457.2 194.9 L458.9 192.0 L460.2 189.1 L461.0 186.2 L461.4 183.3 L461.3 180.5 L460.7 177.7 L459.7 175.0 L458.2 172.4 L456.3 169.9 L454.0 167.6 L451.3 165.3 L448.2 163.3 L444.8 161.4 L441.0 159.7 M215.3 437.4 L318.6 363.2 L113.8 254.1 L9.0 313.6 M154.3 400.8 L190.5 376.5 L97.1 322.8 L60.8 344.7 M248.5 325.9 L249.4 322.5 L249.9 319.2 L249.9 315.9 L249.5 312.7 L248.7 309.6 L247.5 306.7 L245.9 303.8 L243.8 301.1 L241.5 298.6 L238.7 296.3 L235.6 294.1 L232.2 292.2 L228.5 290.4 L224.5 288.9 L220.2 287.6 L215.7 286.5 L211.0 285.6 L206.1 285.0 L201.1 284.6 L195.9 284.5 L190.6 284.6 L185.3 285.0 L179.9 285.6 L174.4 286.4 M704.7 86.2 L648.4 126.6 L458.2 58.4 L518.5 24.2 M650.9 68.3 L632.3 80.7 L547.2 51.7 L566.4 40.1 M515.4 78.9 L515.4 80.9 L515.7 82.9 L516.3 84.8 L517.3 86.8 L518.5 88.7 L520.1 90.5 L522.0 92.3 L524.2 94.0 L526.6 95.6 L529.4 97.1 L532.4 98.5 L535.6 99.8 L539.1 100.9 L542.7 101.9 L546.5 102.8 L550.5 103.5 L554.6 104.1 L558.7 104.5 L563.0 104.8 L567.3 104.9 L571.6 104.8 L575.9 104.6 L580.1 104.2 L584.3 103.6 M960.8 884.7 L1287.5 280.5 L841.3 131.8 L375.7 533.6 L960.8 884.7 M1162.0 512.5 L652.9 294.3 M916.0 353.6 L910.1 351.4 L904.1 349.5 L897.9 348.0 L891.6 346.7 L885.2 345.8 L878.9 345.2 L872.5 345.0 L866.3 345.2 L860.2 345.6 L854.2 346.5 L848.4 347.6 L842.9 349.1 L837.6 351.0 L832.6 353.1 L828.0 355.5 L823.8 358.3 L820.0 361.2 L816.6 364.5 L813.7 368.0 L811.3 371.7 L809.4 375.5 L808.1 379.6 L807.3 383.7 L807.1 388.0 L807.4 392.3 L808.3 396.7 L809.8 401.0 L811.9 405.4 L814.5 409.7 L817.7 413.9 L821.4 417.9 L825.7 421.8 L830.4 425.5 L835.5 428.9 L841.0 432.1 L846.9 435.0 L853.1 437.6 L859.6 439.8 L866.3 441.6 L873.1 443.1 L880.0 444.2 L887.0 444.9 L893.9 445.1 L900.7 445.0 L907.4 444.4 L913.9 443.4 L920.1 442.0 L926.0 440.3 L931.6 438.1 L936.7 435.6 L941.4 432.8 L945.6 429.7 L949.3 426.3 L952.4 422.7 L955.0 418.9 L957.0 414.8 L958.4 410.7 L959.2 406.4 L959.5 402.1 L959.1 397.7 L958.2 393.4 L956.7 389.0 L954.6 384.7 L952.0 380.6 L948.9 376.5 L945.4 372.6 L941.4 368.8 L937.0 365.3 L932.2 362.0 L927.1 359.0 L921.7 356.2 L916.0 353.6 M816.6 798.1 L899.9 673.1 L570.6 497.6 L473.0 592.0 M712.6 735.7 L743.7 695.1 L590.4 606.9 L557.1 642.5 M785.1 611.9 L784.1 606.4 L782.5 601.0 L780.4 595.7 L777.8 590.6 L774.8 585.6 L771.3 580.9 L767.4 576.3 L763.1 572.0 L758.5 568.0 L753.5 564.3 L748.2 560.8 L742.7 557.7 L736.9 554.9 L730.8 552.5 L724.6 550.4 L718.3 548.6 L711.8 547.3 L705.3 546.3 L698.7 545.7 L692.1 545.5 L685.5 545.7 L679.0 546.2 L672.5 547.2 L666.2 548.5 M1184.5 246.2 L1145.4 304.7 L871.3 206.5 L921.0 158.3 M1107.5 220.5 L1093.9 238.3 L972.8 197.0 L988.0 180.7 M952.8 235.7 L954.1 238.5 L955.7 241.3 L957.8 244.2 L960.2 246.9 L962.9 249.7 L966.0 252.3 L969.5 254.8 L973.2 257.3 L977.3 259.6 L981.5 261.8 L986.1 263.8 L990.8 265.7 L995.7 267.3 L1000.8 268.8 L1006.0 270.1 L1011.2 271.1 L1016.5 271.9 L1021.8 272.5 L1027.1 272.9 L1032.4 273.0 L1037.5 272.9 L1042.5 272.6 L1047.3 272.0 L1052.0 271.2" stroke="#1a1a1a" stroke-width="1.25" fill="none"/><g transform="matrix(0.06584,-0.03581,0.04359,0.02567,-12.93,281.38)"><text x="0" y="0" font-family="Liberation Mono" font-size="450" font-weight="normal" fill="#1c1c1c" text-anchor="start">PORTUGAL</text></g><g transform="matrix(0.06545,-0.05109,0.06151,0.03663,295.61,476.45)"><text x="0" y="0" font-family="Liberation Mono" font-size="225" font-weight="normal" fill="#1c1c1c" text-anchor="start">NUMBER OF PASSES: 372</text></g><g transform="matrix(0.06420,-0.05683,0.06832,0.04075,402.58,542.06)"><text x="0" y="0" font-family="Liberation Mono" font-size="470" font-weight="normal" fill="#1c1c1c" text-anchor="start">SPAIN</text></g><g transform="matrix(0.04845,-0.08879,0.10817,0.06369,967.11,858.41)"><text x="0" y="0" font-family="Liberation Mono" font-size="175" font-weight="normal" fill="#1c1c1c" text-anchor="start">NUMBER OF PASSES: 759</text></g><path d="M137.0 334.0 Q188.5 273.2 244.0 216.0 M137.0 334.0 Q192.4 276.7 244.0 216.0 M137.0 334.0 Q191.9 276.3 244.0 216.0 M137.0 334.0 Q189.2 273.8 244.0 216.0 M137.0 334.0 Q221.5 218.0 306.0 102.0 M137.0 334.0 Q221.2 217.8 306.0 102.0 M137.0 334.0 Q222.4 218.6 306.0 102.0 M137.0 334.0 Q223.2 219.2 306.0 102.0 M137.0 334.0 Q252.7 242.8 371.0 155.0 M137.0 334.0 Q252.5 242.5 371.0 155.0 M137.0 334.0 Q255.1 245.9 371.0 155.0 M137.0 334.0 Q265.4 270.3 394.0 207.0 M137.0 334.0 Q265.9 271.3 394.0 207.0 M137.0 334.0 Q349.9 266.4 564.0 203.0 M137.0 334.0 Q350.4 268.3 564.0 203.0 M137.0 334.0 Q350.8 269.4 564.0 203.0 M137.0 334.0 Q336.3 300.1 536.0 269.0 M137.0 334.0 Q336.9 303.9 536.0 269.0 M137.0 334.0 Q336.8 303.6 536.0 269.0 M137.0 334.0 Q280.0 283.9 424.0 237.0 M137.0 334.0 Q280.0 283.9 424.0 237.0 M244.0 216.0 Q275.3 159.1 306.0 102.0 M244.0 216.0 Q277.8 160.5 306.0 102.0 M244.0 216.0 Q274.2 158.6 306.0 102.0 M244.0 216.0 Q273.2 158.0 306.0 102.0 M244.0 216.0 Q307.1 184.7 371.0 155.0 M244.0 216.0 Q305.3 180.9 371.0 155.0 M244.0 216.0 Q306.2 182.8 371.0 155.0 M244.0 216.0 Q307.2 184.9 371.0 155.0 M244.0 216.0 Q307.5 185.5 371.0 155.0 M244.0 216.0 Q306.3 182.9 371.0 155.0 M244.0 216.0 Q306.2 182.9 371.0 155.0 M244.0 216.0 Q318.8 208.0 394.0 207.0 M244.0 216.0 Q319.0 211.0 394.0 207.0 M244.0 216.0 Q318.8 208.9 394.0 207.0 M244.0 216.0 Q318.6 205.5 394.0 207.0 M244.0 216.0 Q319.3 215.7 394.0 207.0 M244.0 216.0 Q319.0 212.2 394.0 207.0 M244.0 216.0 Q319.1 213.3 394.0 207.0 M244.0 216.0 Q318.8 207.5 394.0 207.0 M244.0 216.0 Q333.4 231.8 424.0 237.0 M244.0 216.0 Q333.5 230.4 424.0 237.0 M244.0 216.0 Q334.5 222.4 424.0 237.0 M244.0 216.0 Q334.2 224.7 424.0 237.0 M244.0 216.0 Q333.7 228.9 424.0 237.0 M244.0 216.0 Q333.7 228.8 424.0 237.0 M244.0 216.0 Q333.5 231.2 424.0 237.0 M244.0 216.0 Q390.1 242.1 536.0 269.0 M244.0 216.0 Q389.7 244.3 536.0 269.0 M244.0 216.0 Q389.8 243.4 536.0 269.0 M244.0 216.0 Q404.0 208.8 564.0 203.0 M244.0 216.0 Q404.0 209.8 564.0 203.0 M306.0 102.0 Q345.2 108.6 385.0 107.0 M306.0 102.0 Q345.3 108.2 385.0 107.0 M306.0 102.0 Q345.5 104.6 385.0 107.0 M306.0 102.0 Q345.4 105.5 385.0 107.0 M306.0 102.0 Q345.8 99.5 385.0 107.0 M306.0 102.0 Q345.7 101.7 385.0 107.0 M306.0 102.0 Q345.3 107.7 385.0 107.0 M306.0 102.0 Q337.2 109.9 368.0 119.0 M306.0 102.0 Q337.6 108.2 368.0 119.0 M306.0 102.0 Q336.9 110.8 368.0 119.0 M306.0 102.0 Q336.6 111.9 368.0 119.0 M306.0 102.0 Q363.1 171.2 424.0 237.0 M306.0 102.0 Q366.4 168.3 424.0 237.0 M306.0 102.0 Q365.7 168.9 424.0 237.0 M306.0 102.0 Q364.9 169.6 424.0 237.0 M306.0 102.0 Q362.0 172.1 424.0 237.0 M306.0 102.0 Q364.8 169.7 424.0 237.0 M306.0 102.0 Q366.2 168.5 424.0 237.0 M306.0 102.0 Q365.1 169.4 424.0 237.0 M306.0 102.0 Q370.1 165.0 424.0 237.0 M306.0 102.0 Q353.1 151.9 394.0 207.0 M306.0 102.0 Q348.6 155.7 394.0 207.0 M306.0 102.0 Q346.7 157.3 394.0 207.0 M306.0 102.0 Q349.4 155.0 394.0 207.0 M306.0 102.0 Q350.7 153.9 394.0 207.0 M306.0 102.0 Q352.3 152.6 394.0 207.0 M306.0 102.0 Q421.0 185.5 536.0 269.0 M306.0 102.0 Q419.5 187.6 536.0 269.0 M306.0 102.0 Q420.1 186.7 536.0 269.0 M306.0 102.0 Q338.3 128.7 371.0 155.0 M306.0 102.0 Q336.9 130.5 371.0 155.0 M306.0 102.0 Q339.7 127.0 371.0 155.0 M306.0 102.0 Q338.4 128.6 371.0 155.0 M385.0 107.0 Q473.3 157.2 564.0 203.0 M385.0 107.0 Q474.3 155.4 564.0 203.0 M385.0 107.0 Q474.6 154.8 564.0 203.0 M385.0 107.0 Q461.4 187.2 536.0 269.0 M385.0 107.0 Q460.3 188.2 536.0 269.0 M385.0 107.0 Q458.7 189.7 536.0 269.0 M385.0 107.0 Q407.9 171.0 424.0 237.0 M385.0 107.0 Q402.5 172.6 424.0 237.0 M385.0 107.0 Q402.3 172.7 424.0 237.0 M385.0 107.0 Q401.8 172.8 424.0 237.0 M368.0 119.0 Q394.4 178.7 424.0 237.0 M368.0 119.0 Q394.0 179.0 424.0 237.0 M368.0 119.0 Q395.9 178.1 424.0 237.0 M368.0 119.0 Q395.6 178.2 424.0 237.0 M368.0 119.0 Q452.3 193.7 536.0 269.0 M368.0 119.0 Q453.6 192.2 536.0 269.0 M368.0 119.0 Q450.7 195.5 536.0 269.0 M371.0 155.0 Q397.1 196.3 424.0 237.0 M371.0 155.0 Q399.3 194.8 424.0 237.0 M371.0 155.0 Q397.5 196.0 424.0 237.0 M371.0 155.0 Q397.6 195.9 424.0 237.0 M371.0 155.0 Q453.9 211.4 536.0 269.0 M371.0 155.0 Q454.0 211.3 536.0 269.0 M371.0 155.0 Q453.4 212.2 536.0 269.0 M371.0 155.0 Q467.3 179.6 564.0 203.0 M371.0 155.0 Q467.4 179.6 564.0 203.0 M371.0 155.0 Q467.6 178.8 564.0 203.0 M394.0 207.0 Q478.9 201.6 564.0 203.0 M394.0 207.0 Q479.0 203.1 564.0 203.0 M394.0 207.0 Q478.9 202.7 564.0 203.0 M394.0 207.0 Q479.0 205.6 564.0 203.0 M394.0 207.0 Q464.2 239.8 536.0 269.0 M394.0 207.0 Q464.4 239.5 536.0 269.0 M394.0 207.0 Q464.4 239.5 536.0 269.0 M424.0 237.0 Q478.9 256.8 536.0 269.0 M424.0 237.0 Q480.8 250.0 536.0 269.0 M424.0 237.0 Q478.8 257.1 536.0 269.0 M424.0 237.0 Q479.4 255.1 536.0 269.0 M424.0 237.0 Q481.4 248.0 536.0 269.0 M424.0 237.0 Q481.7 247.1 536.0 269.0 M424.0 237.0 Q481.7 247.1 536.0 269.0 M424.0 237.0 Q479.1 256.1 536.0 269.0 M564.0 203.0 Q552.5 237.1 536.0 269.0 M564.0 203.0 Q553.9 237.6 536.0 269.0 M564.0 203.0 Q548.8 235.5 536.0 269.0 M564.0 203.0 Q551.5 236.7 536.0 269.0 M564.0 203.0 Q554.3 237.8 536.0 269.0 M564.0 203.0 Q553.4 237.4 536.0 269.0 M564.0 203.0 Q549.7 235.9 536.0 269.0 M424.0 237.0 Q493.6 218.3 564.0 203.0 M424.0 237.0 Q493.7 218.8 564.0 203.0 M424.0 237.0 Q494.3 221.1 564.0 203.0 M464.0 200.0 Q500.1 234.4 536.0 269.0 M464.0 200.0 Q500.4 234.0 536.0 269.0 M394.0 207.0 Q409.1 221.9 424.0 237.0 M394.0 207.0 Q411.4 219.6 424.0 237.0 M394.0 207.0 Q409.6 221.4 424.0 237.0 M394.0 207.0 Q409.4 221.6 424.0 237.0" stroke="#00aaf2" stroke-width="1.05" fill="none"/><path d="M137.0 334.0 Q220.3 84.3 306.0 102.0 M137.0 334.0 Q223.1 89.0 306.0 102.0 M137.0 334.0 Q220.3 90.1 306.0 102.0 M137.0 334.0 Q222.8 109.2 306.0 102.0 M137.0 334.0 Q219.6 110.6 306.0 102.0 M137.0 334.0 Q253.4 127.5 368.0 119.0 M137.0 334.0 Q253.3 134.1 368.0 119.0 M137.0 334.0 Q261.2 89.0 385.0 107.0 M137.0 334.0 Q262.9 96.7 385.0 107.0 M244.0 216.0 Q314.6 106.1 385.0 107.0 M244.0 216.0 Q315.1 107.3 385.0 107.0 M244.0 216.0 Q404.3 149.6 564.0 203.0 M244.0 216.0 Q404.5 146.2 564.0 203.0 M244.0 216.0 Q403.2 177.1 564.0 203.0 M244.0 216.0 Q405.5 168.6 564.0 203.0 M394.0 207.0 Q480.4 183.3 564.0 203.0 M394.0 207.0 Q480.8 186.3 564.0 203.0 M306.0 102.0 Q345.2 83.9 385.0 107.0 M306.0 102.0 Q343.5 85.9 385.0 107.0 M137.0 334.0 Q334.7 274.3 536.0 269.0 M137.0 334.0 Q338.3 270.3 536.0 269.0 M137.0 334.0 Q349.2 248.3 564.0 203.0 M137.0 334.0 Q352.4 245.3 564.0 203.0 M306.0 102.0 Q421.0 169.9 536.0 269.0 M306.0 102.0 Q420.4 167.9 536.0 269.0 M368.0 119.0 Q452.7 182.1 536.0 269.0 M368.0 119.0 Q450.8 179.2 536.0 269.0 M371.0 155.0 Q454.2 200.3 536.0 269.0 M371.0 155.0 Q453.5 200.6 536.0 269.0 M306.0 102.0 Q366.5 167.0 424.0 237.0 M306.0 102.0 Q363.1 162.0 424.0 237.0 M306.0 102.0 Q364.3 167.6 424.0 237.0" stroke="#12f07a" stroke-width="1" fill="none"/><path d="M663.5 625.8 Q673.7 456.0 686.4 286.3 M663.5 625.8 Q672.4 455.9 686.4 286.3 M663.5 625.8 Q676.0 456.1 686.4 286.3 M663.5 625.8 Q671.9 455.8 686.4 286.3 M663.5 625.8 Q705.5 505.0 746.7 384.0 M663.5 625.8 Q703.7 504.4 746.7 384.0 M663.5 625.8 Q700.6 503.3 746.7 384.0 M663.5 625.8 Q705.2 504.9 746.7 384.0 M663.5 625.8 Q700.4 503.3 746.7 384.0 M663.5 625.8 Q704.4 504.7 746.7 384.0 M663.5 625.8 Q700.7 503.4 746.7 384.0 M663.5 625.8 Q801.1 566.0 942.0 514.5 M663.5 625.8 Q802.4 569.4 942.0 514.5 M663.5 625.8 Q804.1 573.4 942.0 514.5 M663.5 625.8 Q801.2 566.4 942.0 514.5 M663.5 625.8 Q801.6 567.4 942.0 514.5 M663.5 625.8 Q803.3 571.4 942.0 514.5 M663.5 625.8 Q804.5 574.6 942.0 514.5 M663.5 625.8 Q914.5 545.2 1165.3 463.8 M663.5 625.8 Q914.2 544.3 1165.3 463.8 M663.5 625.8 Q915.2 547.2 1165.3 463.8 M663.5 625.8 Q764.8 517.1 868.5 410.7 M663.5 625.8 Q766.9 519.1 868.5 410.7 M686.4 286.3 Q720.9 284.2 755.3 286.6 M686.4 286.3 Q720.9 282.6 755.3 286.6 M686.4 286.3 Q720.9 282.3 755.3 286.6 M686.4 286.3 Q720.9 284.4 755.3 286.6 M686.4 286.3 Q720.8 289.9 755.3 286.6 M686.4 286.3 Q720.9 283.0 755.3 286.6 M686.4 286.3 Q720.8 287.3 755.3 286.6 M686.4 286.3 Q714.8 336.2 746.7 384.0 M686.4 286.3 Q718.1 334.2 746.7 384.0 M686.4 286.3 Q716.0 335.5 746.7 384.0 M686.4 286.3 Q721.9 331.8 746.7 384.0 M686.4 286.3 Q721.9 331.8 746.7 384.0 M686.4 286.3 Q720.2 332.9 746.7 384.0 M686.4 286.3 Q714.3 336.5 746.7 384.0 M686.4 286.3 Q717.4 334.6 746.7 384.0 M686.4 286.3 Q718.8 333.7 746.7 384.0 M686.4 286.3 Q768.9 273.4 851.3 259.3 M686.4 286.3 Q768.8 272.5 851.3 259.3 M686.4 286.3 Q768.6 271.4 851.3 259.3 M686.4 286.3 Q769.2 274.9 851.3 259.3 M686.4 286.3 Q878.9 317.7 1072.0 344.8 M686.4 286.3 Q879.6 312.8 1072.0 344.8 M686.4 286.3 Q879.1 316.3 1072.0 344.8 M686.4 286.3 Q879.2 315.8 1072.0 344.8 M686.4 286.3 Q878.6 319.6 1072.0 344.8 M686.4 286.3 Q878.8 318.0 1072.0 344.8 M686.4 286.3 Q879.5 313.3 1072.0 344.8 M686.4 286.3 Q924.0 379.9 1165.3 463.8 M686.4 286.3 Q927.3 371.2 1165.3 463.8 M686.4 286.3 Q926.2 374.2 1165.3 463.8 M686.4 286.3 Q924.9 377.7 1165.3 463.8 M686.4 286.3 Q927.2 371.5 1165.3 463.8 M686.4 286.3 Q925.9 374.9 1165.3 463.8 M686.4 286.3 Q927.6 370.4 1165.3 463.8 M686.4 286.3 Q813.4 401.3 942.0 514.5 M686.4 286.3 Q812.9 401.8 942.0 514.5 M686.4 286.3 Q813.8 400.8 942.0 514.5 M686.4 286.3 Q812.4 402.4 942.0 514.5 M686.4 286.3 Q778.2 347.4 868.5 410.7 M686.4 286.3 Q776.7 349.7 868.5 410.7 M686.4 286.3 Q777.1 349.1 868.5 410.7 M686.4 286.3 Q777.1 349.0 868.5 410.7 M755.3 286.6 Q803.2 272.5 851.3 259.3 M755.3 286.6 Q804.3 276.5 851.3 259.3 M755.3 286.6 Q804.6 277.6 851.3 259.3 M755.3 286.6 Q803.2 272.7 851.3 259.3 M755.3 286.6 Q803.8 274.7 851.3 259.3 M755.3 286.6 Q802.0 268.4 851.3 259.3 M755.3 286.6 Q803.9 275.0 851.3 259.3 M755.3 286.6 Q913.3 317.8 1072.0 344.8 M755.3 286.6 Q912.4 322.7 1072.0 344.8 M755.3 286.6 Q912.8 320.3 1072.0 344.8 M755.3 286.6 Q914.2 312.6 1072.0 344.8 M755.3 286.6 Q913.9 314.1 1072.0 344.8 M755.3 286.6 Q913.2 318.1 1072.0 344.8 M755.3 286.6 Q914.9 308.9 1072.0 344.8 M755.3 286.6 Q913.7 315.2 1072.0 344.8 M755.3 286.6 Q914.5 311.0 1072.0 344.8 M755.3 286.6 Q962.5 370.1 1165.3 463.8 M755.3 286.6 Q962.8 369.4 1165.3 463.8 M755.3 286.6 Q958.8 378.7 1165.3 463.8 M755.3 286.6 Q962.4 370.3 1165.3 463.8 M755.3 286.6 Q961.7 371.9 1165.3 463.8 M755.3 286.6 Q960.9 373.8 1165.3 463.8 M755.3 286.6 Q958.2 380.1 1165.3 463.8 M755.3 286.6 Q962.7 369.7 1165.3 463.8 M755.3 286.6 Q960.6 374.5 1165.3 463.8 M768.0 311.0 Q854.5 413.2 942.0 514.5 M768.0 311.0 Q850.8 416.3 942.0 514.5 M768.0 311.0 Q851.5 415.7 942.0 514.5 M768.0 311.0 Q851.0 416.2 942.0 514.5 M768.0 311.0 Q857.4 410.7 942.0 514.5 M768.0 311.0 Q855.9 412.0 942.0 514.5 M768.0 311.0 Q856.5 411.4 942.0 514.5 M768.0 311.0 Q850.8 416.3 942.0 514.5 M768.0 311.0 Q850.0 417.0 942.0 514.5 M755.3 286.6 Q901.2 352.8 1045.0 423.6 M755.3 286.6 Q901.1 353.0 1045.0 423.6 M755.3 286.6 Q901.0 353.4 1045.0 423.6 M755.3 286.6 Q901.0 353.4 1045.0 423.6 M746.7 384.0 Q807.6 397.1 868.5 410.7 M746.7 384.0 Q807.3 398.6 868.5 410.7 M746.7 384.0 Q808.3 394.0 868.5 410.7 M746.7 384.0 Q809.1 390.4 868.5 410.7 M746.7 384.0 Q807.8 396.2 868.5 410.7 M746.7 384.0 Q808.0 395.5 868.5 410.7 M746.7 384.0 Q807.4 398.3 868.5 410.7 M746.7 384.0 Q806.2 403.7 868.5 410.7 M746.7 384.0 Q807.0 400.0 868.5 410.7 M746.7 384.0 Q895.8 404.0 1045.0 423.6 M746.7 384.0 Q895.7 405.1 1045.0 423.6 M746.7 384.0 Q895.6 405.7 1045.0 423.6 M746.7 384.0 Q896.5 399.0 1045.0 423.6 M746.7 384.0 Q895.3 408.1 1045.0 423.6 M746.7 384.0 Q895.5 406.8 1045.0 423.6 M746.7 384.0 Q895.3 407.8 1045.0 423.6 M746.7 384.0 Q955.4 427.1 1165.3 463.8 M746.7 384.0 Q956.2 422.8 1165.3 463.8 M746.7 384.0 Q956.2 422.8 1165.3 463.8 M746.7 384.0 Q956.8 419.7 1165.3 463.8 M746.7 384.0 Q955.7 425.3 1165.3 463.8 M746.7 384.0 Q956.9 419.3 1165.3 463.8 M746.7 384.0 Q956.9 419.3 1165.3 463.8 M746.7 384.0 Q909.1 362.3 1072.0 344.8 M746.7 384.0 Q909.1 362.0 1072.0 344.8 M746.7 384.0 Q909.2 363.3 1072.0 344.8 M746.7 384.0 Q909.0 361.2 1072.0 344.8 M746.7 384.0 Q848.3 443.3 942.0 514.5 M746.7 384.0 Q847.1 445.1 942.0 514.5 M746.7 384.0 Q847.5 444.5 942.0 514.5 M746.7 384.0 Q845.4 447.6 942.0 514.5 M746.7 384.0 Q848.1 443.6 942.0 514.5 M746.7 384.0 Q841.4 453.7 942.0 514.5 M746.7 384.0 Q843.4 450.6 942.0 514.5 M746.7 384.0 Q847.2 445.0 942.0 514.5 M746.7 384.0 Q846.3 446.3 942.0 514.5 M746.7 384.0 Q748.3 335.1 755.3 286.6 M746.7 384.0 Q748.6 335.1 755.3 286.6 M746.7 384.0 Q744.2 334.7 755.3 286.6 M746.7 384.0 Q757.3 335.9 755.3 286.6 M746.7 384.0 Q759.8 336.1 755.3 286.6 M746.7 384.0 Q750.4 335.2 755.3 286.6 M746.7 384.0 Q750.7 335.3 755.3 286.6 M746.7 384.0 Q743.6 334.6 755.3 286.6 M746.7 384.0 Q743.9 334.7 755.3 286.6 M746.7 384.0 Q748.2 335.1 755.3 286.6 M746.7 384.0 Q746.8 334.9 755.3 286.6 M851.3 259.3 Q960.8 304.3 1072.0 344.8 M851.3 259.3 Q962.5 299.8 1072.0 344.8 M851.3 259.3 Q962.9 298.8 1072.0 344.8 M851.3 259.3 Q960.5 305.1 1072.0 344.8 M851.3 259.3 Q859.7 335.0 868.5 410.7 M851.3 259.3 Q862.4 334.7 868.5 410.7 M851.3 259.3 Q859.6 335.0 868.5 410.7 M851.3 259.3 Q863.3 334.6 868.5 410.7 M851.3 259.3 Q1008.2 361.6 1165.3 463.8 M851.3 259.3 Q1007.4 363.0 1165.3 463.8 M851.3 259.3 Q894.8 387.6 942.0 514.5 M851.3 259.3 Q895.7 387.3 942.0 514.5 M851.3 259.3 Q897.9 386.5 942.0 514.5 M868.5 410.7 Q970.0 376.8 1072.0 344.8 M868.5 410.7 Q969.5 375.5 1072.0 344.8 M868.5 410.7 Q970.9 379.6 1072.0 344.8 M868.5 410.7 Q970.3 378.0 1072.0 344.8 M868.5 410.7 Q1016.5 439.2 1165.3 463.8 M868.5 410.7 Q1017.1 436.0 1165.3 463.8 M868.5 410.7 Q1017.3 435.3 1165.3 463.8 M868.5 410.7 Q1016.5 439.5 1165.3 463.8 M868.5 410.7 Q902.4 464.6 942.0 514.5 M868.5 410.7 Q903.2 464.1 942.0 514.5 M868.5 410.7 Q903.5 463.9 942.0 514.5 M868.5 410.7 Q903.4 463.9 942.0 514.5 M868.5 410.7 Q956.7 418.4 1045.0 423.6 M868.5 410.7 Q956.9 415.7 1045.0 423.6 M868.5 410.7 Q956.7 417.2 1045.0 423.6 M1072.0 344.8 Q1008.7 430.9 942.0 514.5 M1072.0 344.8 Q1012.4 433.8 942.0 514.5 M1072.0 344.8 Q1012.4 433.8 942.0 514.5 M1072.0 344.8 Q1009.5 431.6 942.0 514.5 M1072.0 344.8 Q1009.8 431.8 942.0 514.5 M1072.0 344.8 Q1004.8 428.0 942.0 514.5 M1072.0 344.8 Q1001.8 425.7 942.0 514.5 M1072.0 344.8 Q1007.6 430.1 942.0 514.5 M1072.0 344.8 Q1002.0 425.8 942.0 514.5 M1072.0 344.8 Q1113.1 408.6 1165.3 463.8 M1072.0 344.8 Q1113.5 408.3 1165.3 463.8 M1072.0 344.8 Q1120.2 403.1 1165.3 463.8 M1072.0 344.8 Q1121.8 401.8 1165.3 463.8 M1072.0 344.8 Q1121.7 401.9 1165.3 463.8 M1072.0 344.8 Q1122.1 401.6 1165.3 463.8 M1072.0 344.8 Q1122.0 401.7 1165.3 463.8 M1072.0 344.8 Q1117.2 405.4 1165.3 463.8 M1072.0 344.8 Q1114.1 407.9 1165.3 463.8 M942.0 514.5 Q1054.7 493.9 1165.3 463.8 M942.0 514.5 Q1053.6 488.9 1165.3 463.8 M942.0 514.5 Q1054.1 491.3 1165.3 463.8 M942.0 514.5 Q1054.6 493.4 1165.3 463.8 M942.0 514.5 Q1052.3 483.3 1165.3 463.8 M942.0 514.5 Q1054.2 491.4 1165.3 463.8 M942.0 514.5 Q1055.0 494.9 1165.3 463.8 M942.0 514.5 Q1054.6 493.1 1165.3 463.8 M942.0 514.5 Q1054.4 492.7 1165.3 463.8 M686.4 286.3 Q865.8 354.8 1045.0 423.6 M686.4 286.3 Q866.5 352.8 1045.0 423.6 M686.4 286.3 Q865.0 356.9 1045.0 423.6 M686.4 286.3 Q866.1 353.8 1045.0 423.6 M768.0 311.0 Q919.7 330.6 1072.0 344.8 M768.0 311.0 Q919.5 332.1 1072.0 344.8 M768.0 311.0 Q920.1 327.0 1072.0 344.8 M768.0 311.0 Q920.1 327.0 1072.0 344.8 M768.0 311.0 Q919.6 331.9 1072.0 344.8 M768.0 311.0 Q919.8 329.9 1072.0 344.8" stroke="#00aaf2" stroke-width="1.05" fill="none"/><path d="M686.4 286.3 Q767.5 220.2 851.3 259.3 M686.4 286.3 Q767.5 225.4 851.3 259.3 M663.5 625.8 Q915.6 484.6 1165.3 463.8 M663.5 625.8 Q915.7 502.2 1165.3 463.8 M663.5 625.8 Q915.0 488.9 1165.3 463.8 M663.5 625.8 Q867.9 438.3 1072.0 344.8 M663.5 625.8 Q865.8 455.0 1072.0 344.8 M746.7 384.0 Q956.6 403.0 1165.3 463.8 M746.7 384.0 Q957.7 401.5 1165.3 463.8 M942.0 514.5 Q1008.5 400.4 1072.0 344.8 M942.0 514.5 Q1005.8 395.5 1072.0 344.8 M686.4 286.3 Q813.4 369.4 942.0 514.5 M686.4 286.3 Q814.5 369.7 942.0 514.5 M942.0 514.5 Q1053.3 467.5 1165.3 463.8 M942.0 514.5 Q1055.3 469.5 1165.3 463.8 M663.5 625.8 Q709.2 450.3 755.3 286.6 M663.5 625.8 Q711.0 448.1 755.3 286.6 M868.5 410.7 Q971.9 356.4 1072.0 344.8 M868.5 410.7 Q970.4 356.6 1072.0 344.8 M686.4 286.3 Q863.8 334.8 1045.0 423.6 M686.4 286.3 Q864.4 328.1 1045.0 423.6" stroke="#12f07a" stroke-width="1" fill="none"/><path d="M654.9 286.3 A31.5 19.5 0 1 0 717.9 286.3 A31.5 19.5 0 1 0 654.9 286.3 Z M672.5 286.3 A13.86 7.800000000000001 0 1 1 700.3 286.3 A13.86 7.800000000000001 0 1 1 672.5 286.3 Z" fill="#f000f5" fill-rule="evenodd"/><path d="M719.3 286.6 A36 22 0 1 0 791.3 286.6 A36 22 0 1 0 719.3 286.6 Z M739.5 286.6 A15.84 8.8 0 1 1 771.1 286.6 A15.84 8.8 0 1 1 739.5 286.6 Z" fill="#f000f5" fill-rule="evenodd"/><path d="M736.5 311.0 A31.5 15 0 1 0 799.5 311.0 A31.5 15 0 1 0 736.5 311.0 Z M754.1 311.0 A13.86 6.0 0 1 1 781.9 311.0 A13.86 6.0 0 1 1 754.1 311.0 Z" fill="#f000f5" fill-rule="evenodd"/><path d="M693.7 385.0 A53 36 0 1 0 799.7 385.0 A53 36 0 1 0 693.7 385.0 Z M723.4 385.0 A23.32 14.4 0 1 1 770.0 385.0 A23.32 14.4 0 1 1 723.4 385.0 Z" fill="#f000f5" fill-rule="evenodd"/><path d="M843.3 259.3 A8 5 0 1 0 859.3 259.3 A8 5 0 1 0 843.3 259.3 Z M847.8 259.3 A3.52 2.0 0 1 1 854.8 259.3 A3.52 2.0 0 1 1 847.8 259.3 Z" fill="#f000f5" fill-rule="evenodd"/><path d="M840.5 410.7 A28 18.5 0 1 0 896.5 410.7 A28 18.5 0 1 0 840.5 410.7 Z M856.2 410.7 A12.32 7.4 0 1 1 880.8 410.7 A12.32 7.4 0 1 1 856.2 410.7 Z" fill="#f000f5" fill-rule="evenodd"/><path d="M1016.5 423.6 A28.5 18.5 0 1 0 1073.5 423.6 A28.5 18.5 0 1 0 1016.5 423.6 Z M1032.5 423.6 A12.540000000000001 7.4 0 1 1 1057.5 423.6 A12.540000000000001 7.4 0 1 1 1032.5 423.6 Z" fill="#f000f5" fill-rule="evenodd"/><path d="M1054.0 344.8 A18 11.5 0 1 0 1090.0 344.8 A18 11.5 0 1 0 1054.0 344.8 Z M1064.1 344.8 A7.92 4.6000000000000005 0 1 1 1079.9 344.8 A7.92 4.6000000000000005 0 1 1 1064.1 344.8 Z" fill="#f000f5" fill-rule="evenodd"/><path d="M1138.8 463.8 A26.5 18.5 0 1 0 1191.8 463.8 A26.5 18.5 0 1 0 1138.8 463.8 Z M1153.6 463.8 A11.66 7.4 0 1 1 1177.0 463.8 A11.66 7.4 0 1 1 1153.6 463.8 Z" fill="#f000f5" fill-rule="evenodd"/><path d="M911.5 516.8 A33 24.5 0 1 0 977.5 516.8 A33 24.5 0 1 0 911.5 516.8 Z M930.0 516.8 A14.52 9.8 0 1 1 959.0 516.8 A14.52 9.8 0 1 1 930.0 516.8 Z" fill="#f000f5" fill-rule="evenodd"/><path d="M656.5 625.8 A7 5 0 1 0 670.5 625.8 A7 5 0 1 0 656.5 625.8 Z M660.4 625.8 A3.08 2.0 0 1 1 666.6 625.8 A3.08 2.0 0 1 1 660.4 625.8 Z" fill="#f000f5" fill-rule="evenodd"/><path d="M130.0 334.0 A7 4.6 0 1 0 144.0 334.0 A7 4.6 0 1 0 130.0 334.0 Z M133.9 334.0 A3.08 1.8399999999999999 0 1 1 140.1 334.0 A3.08 1.8399999999999999 0 1 1 133.9 334.0 Z" fill="#f000f5" fill-rule="evenodd"/><path d="M235.5 216.0 A8.5 4.5 0 1 0 252.5 216.0 A8.5 4.5 0 1 0 235.5 216.0 Z M240.3 216.0 A3.74 1.8 0 1 1 247.7 216.0 A3.74 1.8 0 1 1 240.3 216.0 Z" fill="#f000f5" fill-rule="evenodd"/><path d="M294.5 102.0 A11.5 6.5 0 1 0 317.5 102.0 A11.5 6.5 0 1 0 294.5 102.0 Z M300.9 102.0 A5.06 2.6 0 1 1 311.1 102.0 A5.06 2.6 0 1 1 300.9 102.0 Z" fill="#f000f5" fill-rule="evenodd"/><path d="M379.0 107.0 A6 3 0 1 0 391.0 107.0 A6 3 0 1 0 379.0 107.0 Z M382.4 107.0 A2.64 1.2000000000000002 0 1 1 387.6 107.0 A2.64 1.2000000000000002 0 1 1 382.4 107.0 Z" fill="#f000f5" fill-rule="evenodd"/><path d="M357.0 119.0 A11 5.5 0 1 0 379.0 119.0 A11 5.5 0 1 0 357.0 119.0 Z M363.2 119.0 A4.84 2.2 0 1 1 372.8 119.0 A4.84 2.2 0 1 1 363.2 119.0 Z" fill="#f000f5" fill-rule="evenodd"/><path d="M357.5 155.0 A13.5 8 0 1 0 384.5 155.0 A13.5 8 0 1 0 357.5 155.0 Z M365.1 155.0 A5.94 3.2 0 1 1 376.9 155.0 A5.94 3.2 0 1 1 365.1 155.0 Z" fill="#f000f5" fill-rule="evenodd"/><path d="M381.5 207.0 A12.5 7 0 1 0 406.5 207.0 A12.5 7 0 1 0 381.5 207.0 Z M388.5 207.0 A5.5 2.8000000000000003 0 1 1 399.5 207.0 A5.5 2.8000000000000003 0 1 1 388.5 207.0 Z" fill="#f000f5" fill-rule="evenodd"/><path d="M414.5 237.0 A9.5 6 0 1 0 433.5 237.0 A9.5 6 0 1 0 414.5 237.0 Z M419.8 237.0 A4.18 2.4000000000000004 0 1 1 428.2 237.0 A4.18 2.4000000000000004 0 1 1 419.8 237.0 Z" fill="#f000f5" fill-rule="evenodd"/><path d="M556.5 203.0 A7.5 4.5 0 1 0 571.5 203.0 A7.5 4.5 0 1 0 556.5 203.0 Z M560.7 203.0 A3.3 1.8 0 1 1 567.3 203.0 A3.3 1.8 0 1 1 560.7 203.0 Z" fill="#f000f5" fill-rule="evenodd"/><path d="M528.0 269.0 A8 6 0 1 0 544.0 269.0 A8 6 0 1 0 528.0 269.0 Z M532.5 269.0 A3.52 2.4000000000000004 0 1 1 539.5 269.0 A3.52 2.4000000000000004 0 1 1 532.5 269.0 Z" fill="#f000f5" fill-rule="evenodd"/><path d="M460.0 200.0 A4 2.5 0 1 0 468.0 200.0 A4 2.5 0 1 0 460.0 200.0 Z M462.2 200.0 A1.76 1.0 0 1 1 465.8 200.0 A1.76 1.0 0 1 1 462.2 200.0 Z" fill="#f000f5" fill-rule="evenodd"/></svg><div style="left:3px;top:2px;width:66px;height:17px;background:rgba(90,90,90,0.55);border-radius:2px"><div class="t" style="left:3px;top:1px;color:#dedede;font-size:11.8px">Perspective</div></div><div style="left:0px;top:0px;width:1239px;height:18px;background:rgba(0,0,0,0.05)"></div><div style="left:0px;top:713px;width:1239px;height:17px;background:rgba(0,0,0,0.05)"></div><div style="left:1102px;top:709px;width:130px;height:18px;background:rgba(80,80,80,0.55);border-radius:2px"><div class="t" style="left:5px;top:2px;color:#dedede;font-size:11.8px">Grid Spacing : 1000 cm</div></div><svg width="60" height="40" style="left:7px;top:663px"><text x="5" y="20" font-family="Liberation Sans" font-size="11" fill="#3050ff">Z</text><text x="28" y="11" font-family="Liberation Sans" font-size="11" fill="#30d030">Y</text><text x="47" y="19" font-family="Liberation Sans" font-size="11" fill="#e03030">X</text><path d="M27.3 31 L13.4 24.3" stroke="#3050ff" stroke-width="1.5"/><path d="M27.3 31 L27.3 18" stroke="#30d030" stroke-width="1.5"/><path d="M27.3 31 L37.7 22.4" stroke="#e03030" stroke-width="1.5"/></svg></div><svg style="left:37px;top:828px" width="5" height="14"><path d="M0.2 2.6 L2.6 0.2 M0.2 5.6 L2.6 3.2 M0.2 8.6 L2.6 6.2 M0.2 11.6 L2.6 9.2 M0.2 14.6 L2.6 12.2 M3.2 2.6 L5.6 0.2 M3.2 5.6 L5.6 3.2 M3.2 8.6 L5.6 6.2 M3.2 11.6 L5.6 9.2 M3.2 14.6 L5.6 12.2" stroke="#151515" stroke-width="1.3"/><path d="M0.9 2.8 L2.8 0.9 M0.9 5.8 L2.8 3.9 M0.9 8.8 L2.8 6.9 M0.9 11.8 L2.8 9.9 M0.9 14.8 L2.8 12.9 M3.9 2.8 L5.8 0.9 M3.9 5.8 L5.8 3.9 M3.9 8.8 L5.8 6.9 M3.9 11.8 L5.8 9.9 M3.9 14.8 L5.8 12.9" stroke="#e0e0e0" stroke-width="0.9"/></svg><div style="left:45px;top:823px;width:1146px;height:22px;background:#333333;border-radius:3px;overflow:hidden"><svg width="1146" height="22"><path d="M0 14.5 L1146 14.5" stroke="#3c3c3c" stroke-width="1"/><path d="M6.4 16 L6.4 21 M11.1 18 L11.1 21 M15.8 18 L15.8 21 M20.6 18 L20.6 21 M25.3 16 L25.3 21 M30.0 18 L30.0 21 M34.8 18 L34.8 21 M39.5 18 L39.5 21 M44.2 16 L44.2 21 M48.9 18 L48.9 21 M53.6 18 L53.6 21 M58.4 18 L58.4 21 M63.1 16 L63.1 21 M67.8 18 L67.8 21 M72.5 18 L72.5 21 M77.3 18 L77.3 21 M82.0 16 L82.0 21 M86.7 18 L86.7 21 M91.4 18 L91.4 21 M96.2 18 L96.2 21 M100.9 16 L100.9 21 M105.6 18 L105.6 21 M110.3 18 L110.3 21 M115.1 18 L115.1 21 M119.8 16 L119.8 21 M124.5 18 L124.5 21 M129.2 18 L129.2 21 M134.0 18 L134.0 21 M138.7 16 L138.7 21 M143.4 18 L143.4 21 M148.2 18 L148.2 21 M152.9 18 L152.9 21 M157.6 16 L157.6 21 M162.3 18 L162.3 21 M167.1 18 L167.1 21 M171.8 18 L171.8 21 M176.5 16 L176.5 21 M181.2 18 L181.2 21 M185.9 18 L185.9 21 M190.7 18 L190.7 21 M195.4 16 L195.4 21 M200.1 18 L200.1 21 M204.8 18 L204.8 21 M209.6 18 L209.6 21 M214.3 16 L214.3 21 M219.0 18 L219.0 21 M223.8 18 L223.8 21 M228.5 18 L228.5 21 M233.2 16 L233.2 21 M237.9 18 L237.9 21 M242.7 18 L242.7 21 M247.4 18 L247.4 21 M252.1 16 L252.1 21 M256.8 18 L256.8 21 M261.5 18 L261.5 21 M266.3 18 L266.3 21 M271.0 16 L271.0 21 M275.7 18 L275.7 21 M280.4 18 L280.4 21 M285.2 18 L285.2 21 M289.9 16 L289.9 21 M294.6 18 L294.6 21 M299.3 18 L299.3 21 M304.1 18 L304.1 21 M308.8 16 L308.8 21 M313.5 18 L313.5 21 M318.2 18 L318.2 21 M323.0 18 L323.0 21 M327.7 16 L327.7 21 M332.4 18 L332.4 21 M337.1 18 L337.1 21 M341.9 18 L341.9 21 M346.6 16 L346.6 21 M351.3 18 L351.3 21 M356.0 18 L356.0 21 M360.8 18 L360.8 21 M365.5 16 L365.5 21 M370.2 18 L370.2 21 M374.9 18 L374.9 21 M379.7 18 L379.7 21 M384.4 16 L384.4 21 M389.1 18 L389.1 21 M393.8 18 L393.8 21 M398.6 18 L398.6 21 M403.3 16 L403.3 21 M408.0 18 L408.0 21 M412.7 18 L412.7 21 M417.5 18 L417.5 21 M422.2 16 L422.2 21 M426.9 18 L426.9 21 M431.6 18 L431.6 21 M436.4 18 L436.4 21 M441.1 16 L441.1 21 M445.8 18 L445.8 21 M450.5 18 L450.5 21 M455.3 18 L455.3 21 M460.0 16 L460.0 21 M464.7 18 L464.7 21 M469.4 18 L469.4 21 M474.2 18 L474.2 21 M478.9 16 L478.9 21 M483.6 18 L483.6 21 M488.3 18 L488.3 21 M493.1 18 L493.1 21 M497.8 16 L497.8 21 M502.5 18 L502.5 21 M507.2 18 L507.2 21 M512.0 18 L512.0 21 M516.7 16 L516.7 21 M521.4 18 L521.4 21 M526.1 18 L526.1 21 M530.9 18 L530.9 21 M535.6 16 L535.6 21 M540.3 18 L540.3 21 M545.0 18 L545.0 21 M549.8 18 L549.8 21 M554.5 16 L554.5 21 M559.2 18 L559.2 21 M563.9 18 L563.9 21 M568.7 18 L568.7 21 M573.4 16 L573.4 21 M578.1 18 L578.1 21 M582.8 18 L582.8 21 M587.6 18 L587.6 21 M592.3 16 L592.3 21 M597.0 18 L597.0 21 M601.8 18 L601.8 21 M606.5 18 L606.5 21 M611.2 16 L611.2 21 M615.9 18 L615.9 21 M620.6 18 L620.6 21 M625.4 18 L625.4 21 M630.1 16 L630.1 21 M634.8 18 L634.8 21 M639.5 18 L639.5 21 M644.3 18 L644.3 21 M649.0 16 L649.0 21 M653.7 18 L653.7 21 M658.4 18 L658.4 21 M663.2 18 L663.2 21 M667.9 16 L667.9 21 M672.6 18 L672.6 21 M677.3 18 L677.3 21 M682.1 18 L682.1 21 M686.8 16 L686.8 21 M691.5 18 L691.5 21 M696.2 18 L696.2 21 M701.0 18 L701.0 21 M705.7 16 L705.7 21 M710.4 18 L710.4 21 M715.1 18 L715.1 21 M719.9 18 L719.9 21 M724.6 16 L724.6 21 M729.3 18 L729.3 21 M734.0 18 L734.0 21 M738.8 18 L738.8 21 M743.5 16 L743.5 21 M748.2 18 L748.2 21 M752.9 18 L752.9 21 M757.7 18 L757.7 21 M762.4 16 L762.4 21 M767.1 18 L767.1 21 M771.8 18 L771.8 21 M776.6 18 L776.6 21 M781.3 16 L781.3 21 M786.0 18 L786.0 21 M790.7 18 L790.7 21 M795.5 18 L795.5 21 M800.2 16 L800.2 21 M804.9 18 L804.9 21 M809.6 18 L809.6 21 M814.4 18 L814.4 21 M819.1 16 L819.1 21 M823.8 18 L823.8 21 M828.5 18 L828.5 21 M833.3 18 L833.3 21 M838.0 16 L838.0 21 M842.7 18 L842.7 21 M847.4 18 L847.4 21 M852.2 18 L852.2 21 M856.9 16 L856.9 21 M861.6 18 L861.6 21 M866.3 18 L866.3 21 M871.1 18 L871.1 21 M875.8 16 L875.8 21 M880.5 18 L880.5 21 M885.2 18 L885.2 21 M890.0 18 L890.0 21 M894.7 16 L894.7 21 M899.4 18 L899.4 21 M904.1 18 L904.1 21 M908.9 18 L908.9 21 M913.6 16 L913.6 21 M918.3 18 L918.3 21 M923.0 18 L923.0 21 M927.8 18 L927.8 21 M932.5 16 L932.5 21 M937.2 18 L937.2 21 M941.9 18 L941.9 21 M946.7 18 L946.7 21 M951.4 16 L951.4 21 M956.1 18 L956.1 21 M960.8 18 L960.8 21 M965.6 18 L965.6 21 M970.3 16 L970.3 21 M975.0 18 L975.0 21 M979.7 18 L979.7 21 M984.5 18 L984.5 21 M989.2 16 L989.2 21 M993.9 18 L993.9 21 M998.6 18 L998.6 21 M1003.4 18 L1003.4 21 M1008.1 16 L1008.1 21 M1012.8 18 L1012.8 21 M1017.5 18 L1017.5 21 M1022.3 18 L1022.3 21 M1027.0 16 L1027.0 21 M1031.7 18 L1031.7 21 M1036.5 18 L1036.5 21 M1041.2 18 L1041.2 21 M1045.9 16 L1045.9 21 M1050.6 18 L1050.6 21 M1055.4 18 L1055.4 21 M1060.1 18 L1060.1 21 M1064.8 16 L1064.8 21 M1069.5 18 L1069.5 21 M1074.2 18 L1074.2 21 M1079.0 18 L1079.0 21 M1083.7 16 L1083.7 21 M1088.4 18 L1088.4 21 M1093.2 18 L1093.2 21 M1097.9 18 L1097.9 21 M1102.6 16 L1102.6 21 M1107.3 18 L1107.3 21 M1112.0 18 L1112.0 21 M1116.8 18 L1116.8 21 M1121.5 16 L1121.5 21 M1126.2 18 L1126.2 21 M1131.0 18 L1131.0 21 M1135.7 18 L1135.7 21 M1140.4 16 L1140.4 21" stroke="#b8b8b8" stroke-width="1"/><path d="M63.1 1 L63.1 21 M176.5 1 L176.5 21 M289.9 1 L289.9 21 M403.3 1 L403.3 21 M516.7 1 L516.7 21 M630.1 1 L630.1 21 M743.5 1 L743.5 21 M856.9 1 L856.9 21 M970.3 1 L970.3 21 M1083.7 1 L1083.7 21" stroke="#6a6a6a" stroke-width="1"/><path d="M6.4 1 L6.4 21" stroke="#5a5a5a" stroke-width="1"/><path d="M44.2 1 L44.2 21" stroke="#5a5a5a" stroke-width="1"/><path d="M82.0 1 L82.0 21" stroke="#5a5a5a" stroke-width="1"/><path d="M119.8 1 L119.8 21" stroke="#5a5a5a" stroke-width="1"/><path d="M157.6 1 L157.6 21" stroke="#5a5a5a" stroke-width="1"/><path d="M195.4 1 L195.4 21" stroke="#5a5a5a" stroke-width="1"/><path d="M233.2 1 L233.2 21" stroke="#5a5a5a" stroke-width="1"/><path d="M271.0 1 L271.0 21" stroke="#5a5a5a" stroke-width="1"/><path d="M308.8 1 L308.8 21" stroke="#5a5a5a" stroke-width="1"/><path d="M346.6 1 L346.6 21" stroke="#5a5a5a" stroke-width="1"/><path d="M384.4 1 L384.4 21" stroke="#5a5a5a" stroke-width="1"/><path d="M422.2 1 L422.2 21" stroke="#5a5a5a" stroke-width="1"/><path d="M460.0 1 L460.0 21" stroke="#5a5a5a" stroke-width="1"/><path d="M497.8 1 L497.8 21" stroke="#5a5a5a" stroke-width="1"/><path d="M535.6 1 L535.6 21" stroke="#5a5a5a" stroke-width="1"/><path d="M573.4 1 L573.4 21" stroke="#5a5a5a" stroke-width="1"/><path d="M611.2 1 L611.2 21" stroke="#5a5a5a" stroke-width="1"/><path d="M649.0 1 L649.0 21" stroke="#5a5a5a" stroke-width="1"/><path d="M686.8 1 L686.8 21" stroke="#5a5a5a" stroke-width="1"/><path d="M724.6 1 L724.6 21" stroke="#5a5a5a" stroke-width="1"/><path d="M762.4 1 L762.4 21" stroke="#5a5a5a" stroke-width="1"/><path d="M800.2 1 L800.2 21" stroke="#5a5a5a" stroke-width="1"/><path d="M838.0 1 L838.0 21" stroke="#5a5a5a" stroke-width="1"/><path d="M875.8 1 L875.8 21" stroke="#5a5a5a" stroke-width="1"/><path d="M913.6 1 L913.6 21" stroke="#5a5a5a" stroke-width="1"/><path d="M951.4 1 L951.4 21" stroke="#5a5a5a" stroke-width="1"/><path d="M989.2 1 L989.2 21" stroke="#5a5a5a" stroke-width="1"/><path d="M1027.0 1 L1027.0 21" stroke="#5a5a5a" stroke-width="1"/><path d="M1064.8 1 L1064.8 21" stroke="#5a5a5a" stroke-width="1"/><path d="M1102.6 1 L1102.6 21" stroke="#5a5a5a" stroke-width="1"/><path d="M1140.4 1 L1140.4 21" stroke="#5a5a5a" stroke-width="1"/><text x="6.4" y="11" font-family="Liberation Sans" font-size="11.5" text-anchor="middle" fill="#cfcfcf">0</text><text x="44.2" y="11" font-family="Liberation Sans" font-size="11.5" text-anchor="middle" fill="#cfcfcf">20</text><text x="82.0" y="11" font-family="Liberation Sans" font-size="11.5" text-anchor="middle" fill="#cfcfcf">40</text><text x="119.8" y="11" font-family="Liberation Sans" font-size="11.5" text-anchor="middle" fill="#cfcfcf">60</text><text x="157.6" y="11" font-family="Liberation Sans" font-size="11.5" text-anchor="middle" fill="#cfcfcf">80</text><text x="195.4" y="11" font-family="Liberation Sans" font-size="11.5" text-anchor="middle" fill="#cfcfcf">100</text><text x="233.2" y="11" font-family="Liberation Sans" font-size="11.5" text-anchor="middle" fill="#cfcfcf">120</text><text x="271.0" y="11" font-family="Liberation Sans" font-size="11.5" text-anchor="middle" fill="#cfcfcf">140</text><text x="308.8" y="11" font-family="Liberation Sans" font-size="11.5" text-anchor="middle" fill="#cfcfcf">160</text><text x="346.6" y="11" font-family="Liberation Sans" font-size="11.5" text-anchor="middle" fill="#cfcfcf">180</text><text x="384.4" y="11" font-family="Liberation Sans" font-size="11.5" text-anchor="middle" fill="#cfcfcf">200</text><text x="422.2" y="11" font-family="Liberation Sans" font-size="11.5" text-anchor="middle" fill="#cfcfcf">220</text><text x="460.0" y="11" font-family="Liberation Sans" font-size="11.5" text-anchor="middle" fill="#cfcfcf">240</text><text x="497.8" y="11" font-family="Liberation Sans" font-size="11.5" text-anchor="middle" fill="#cfcfcf">260</text><text x="535.6" y="11" font-family="Liberation Sans" font-size="11.5" text-anchor="middle" fill="#cfcfcf">280</text><text x="573.4" y="11" font-family="Liberation Sans" font-size="11.5" text-anchor="middle" fill="#cfcfcf">300</text><text x="611.2" y="11" font-family="Liberation Sans" font-size="11.5" text-anchor="middle" fill="#cfcfcf">320</text><text x="649.0" y="11" font-family="Liberation Sans" font-size="11.5" text-anchor="middle" fill="#cfcfcf">340</text><text x="686.8" y="11" font-family="Liberation Sans" font-size="11.5" text-anchor="middle" fill="#cfcfcf">360</text><text x="724.6" y="11" font-family="Liberation Sans" font-size="11.5" text-anchor="middle" fill="#cfcfcf">380</text><text x="762.4" y="11" font-family="Liberation Sans" font-size="11.5" text-anchor="middle" fill="#cfcfcf">400</text><text x="800.2" y="11" font-family="Liberation Sans" font-size="11.5" text-anchor="middle" fill="#cfcfcf">420</text><text x="838.0" y="11" font-family="Liberation Sans" font-size="11.5" text-anchor="middle" fill="#cfcfcf">440</text><text x="875.8" y="11" font-family="Liberation Sans" font-size="11.5" text-anchor="middle" fill="#cfcfcf">460</text><text x="913.6" y="11" font-family="Liberation Sans" font-size="11.5" text-anchor="middle" fill="#cfcfcf">480</text><text x="951.4" y="11" font-family="Liberation Sans" font-size="11.5" text-anchor="middle" fill="#cfcfcf">500</text><text x="989.2" y="11" font-family="Liberation Sans" font-size="11.5" text-anchor="middle" fill="#cfcfcf">520</text><text x="1027.0" y="11" font-family="Liberation Sans" font-size="11.5" text-anchor="middle" fill="#cfcfcf">540</text><text x="1064.8" y="11" font-family="Liberation Sans" font-size="11.5" text-anchor="middle" fill="#cfcfcf">560</text><text x="1102.6" y="11" font-family="Liberation Sans" font-size="11.5" text-anchor="middle" fill="#cfcfcf">580</text><text x="1140.4" y="11" font-family="Liberation Sans" font-size="11.5" text-anchor="middle" fill="#cfcfcf">600</text><rect x="847.2" y="1" width="8" height="14" fill="#5fd98a"/><path d="M851.2 14 L851.2 21" stroke="#5fd98a" stroke-width="1.5"/><rect x="855.2" y="0" width="25" height="13" fill="#333333"/><text x="856.2" y="11" font-family="Liberation Sans" font-size="11.5" fill="#5fd98a">447</text></svg></div><div style="left:1196px;top:825px;width:82px;height:18px;background:#353535;border:1px solid #2e2e2e;border-radius:3px"><div class="t" style="left:6px;top:1px;color:#b8c0c8;font-size:11.8px">447 F</div><svg style="left:70px;top:3px" width="8" height="12"><path d="M1 5 L4 1 L7 5 Z M1 7 L4 11 L7 7 Z" fill="#8a8a8a"/></svg></div><svg style="left:37px;top:853px" width="5" height="20"><path d="M0.2 2.6 L2.6 0.2 M0.2 5.6 L2.6 3.2 M0.2 8.6 L2.6 6.2 M0.2 11.6 L2.6 9.2 M0.2 14.6 L2.6 12.2 M0.2 17.6 L2.6 15.2 M0.2 20.6 L2.6 18.2 M3.2 2.6 L5.6 0.2 M3.2 5.6 L5.6 3.2 M3.2 8.6 L5.6 6.2 M3.2 11.6 L5.6 9.2 M3.2 14.6 L5.6 12.2 M3.2 17.6 L5.6 15.2 M3.2 20.6 L5.6 18.2" stroke="#151515" stroke-width="1.3"/><path d="M0.9 2.8 L2.8 0.9 M0.9 5.8 L2.8 3.9 M0.9 8.8 L2.8 6.9 M0.9 11.8 L2.8 9.9 M0.9 14.8 L2.8 12.9 M0.9 17.8 L2.8 15.9 M0.9 20.8 L2.8 18.9 M3.9 2.8 L5.8 0.9 M3.9 5.8 L5.8 3.9 M3.9 8.8 L5.8 6.9 M3.9 11.8 L5.8 9.9 M3.9 14.8 L5.8 12.9 M3.9 17.8 L5.8 15.9 M3.9 20.8 L5.8 18.9" stroke="#e0e0e0" stroke-width="0.9"/></svg><div style="left:45px;top:854px;width:82px;height:18px;background:#353535;border:1px solid #2e2e2e;border-radius:3px"><div class="t" style="left:6px;top:1px;color:#c8c8c8;font-size:11.8px">0 F</div><svg style="left:70px;top:3px" width="8" height="12"><path d="M1 5 L4 1 L7 5 Z M1 7 L4 11 L7 7 Z" fill="#8a8a8a"/></svg></div><div style="left:134px;top:854px;width:548px;height:18px;background:linear-gradient(#737373,#5d5d5d);border:1px solid #333;border-radius:4px"><div style="left:0px;top:0px;width:13px;height:16px;background:#6c6c6c;border-right:1px solid #555"><svg width="13" height="16"><path d="M3 8 L10 4 L10 12 Z" fill="#ddd"/></svg></div><div class="t" style="left:16px;top:1px;color:#3a3a3a;font-size:11.8px">0 F</div><div class="t" style="left:497px;top:1px;color:#3a3a3a;font-size:11.8px">600 F</div><div style="left:532px;top:0px;width:14px;height:16px;background:#6c6c6c"><svg width="14" height="16"><path d="M11 8 L4 4 L4 12 Z" fill="#ddd"/></svg></div></div><div style="left:688px;top:854px;width:82px;height:18px;background:#353535;border:1px solid #2e2e2e;border-radius:3px"><div class="t" style="left:6px;top:1px;color:#c8c8c8;font-size:11.8px">600 F</div><svg style="left:70px;top:3px" width="8" height="12"><path d="M1 5 L4 1 L7 5 Z M1 7 L4 11 L7 7 Z" fill="#8a8a8a"/></svg></div><div style="left:781px;top:850px;width:27px;height:27px;background:#6a6a6a;border:1px solid #2c2c2c;border-radius:4px;overflow:hidden"><div style="left:0.0px;top:0px;width:27.0px;height:25px;"><svg width="27" height="25"><path d="M7 6 L7 19" stroke="#151515" stroke-width="2.5"/><path d="M20 6 L9 12.5 L20 19 Z M26 6 L15 12.5 L26 19 Z" fill="#151515"/></svg></div></div><div style="left:819px;top:850px;width:139px;height:27px;background:#6a6a6a;border:1px solid #2c2c2c;border-radius:4px;overflow:hidden"><div style="left:0.0px;top:0px;width:27.8px;height:25px;"><svg width="28" height="25"><path d="M20 5 A8 8 0 1 0 20 20" fill="none" stroke="#151515" stroke-width="3.5"/><path d="M15 3 L22 5 L16 9 Z" fill="#151515"/></svg></div><div style="left:27.8px;top:0px;width:27.8px;height:25px;border-left:1px solid #4c4c4c;"><svg width="28" height="25"><path d="M16 7 L7 12.5 L16 18 Z" fill="#151515"/><path d="M22 6 Q18 12.5 22 19" fill="none" stroke="#151515" stroke-width="2"/></svg></div><div style="left:55.6px;top:0px;width:27.8px;height:25px;border-left:1px solid #4c4c4c;"><svg width="28" height="25"><path d="M9 5 L22 12.5 L9 20 Z" fill="#4ee58a" stroke="#222" stroke-width="1"/></svg></div><div style="left:83.4px;top:0px;width:27.8px;height:25px;border-left:1px solid #4c4c4c;"><svg width="28" height="25"><path d="M12 7 L21 12.5 L12 18 Z" fill="#151515"/><path d="M6 6 Q10 12.5 6 19" fill="none" stroke="#151515" stroke-width="2"/></svg></div><div style="left:111.2px;top:0px;width:27.8px;height:25px;border-left:1px solid #4c4c4c;"><svg width="28" height="25"><path d="M8 5 A8 8 0 1 1 8 20" fill="none" stroke="#151515" stroke-width="3.5"/><path d="M13 3 L6 5 L12 9 Z" fill="#151515"/></svg></div></div><div style="left:969px;top:850px;width:27px;height:27px;background:#6a6a6a;border:1px solid #2c2c2c;border-radius:4px;overflow:hidden"><div style="left:0.0px;top:0px;width:27.0px;height:25px;"><svg width="27" height="25"><path d="M21 6 L21 19" stroke="#151515" stroke-width="2.5"/><path d="M8 6 L19 12.5 L8 19 Z M2 6 L13 12.5 L2 19 Z" fill="#151515"/></svg></div></div><div style="left:1007px;top:850px;width:83px;height:27px;background:#6a6a6a;border:1px solid #2c2c2c;border-radius:4px;overflow:hidden"><div style="left:0.0px;top:0px;width:27.7px;height:25px;"><svg width="28" height="25"><circle cx="13.5" cy="12.5" r="9" fill="#777" stroke="#555" stroke-width="1.5"/><path d="M9 17 L16 10 M14 8 L18 12" stroke="#999" stroke-width="2"/></svg></div><div style="left:27.7px;top:0px;width:27.7px;height:25px;border-left:1px solid #4c4c4c;"><svg width="28" height="25"><circle cx="13.5" cy="12.5" r="10" fill="#e03c3c" stroke="#222" stroke-width="1.2"/><path d="M10 7 Q7 12.5 10 18 M17 7 Q20 12.5 17 18" fill="none" stroke="#151515" stroke-width="2.2"/></svg></div><div style="left:55.3px;top:0px;width:27.7px;height:25px;border-left:1px solid #4c4c4c;"><svg width="28" height="25"><circle cx="13.5" cy="12.5" r="10" fill="#e03c3c" stroke="#222" stroke-width="1.2"/><text x="13.5" y="18" font-family="Liberation Sans" font-weight="bold" font-size="15" text-anchor="middle" fill="#151515">?</text></svg></div></div><div style="left:1101px;top:850px;width:139px;height:27px;background:#6a6a6a;border:1px solid #2c2c2c;border-radius:4px;overflow:hidden"><div style="left:0.0px;top:0px;width:27.8px;height:25px;background:#8fa6cc;"><svg width="28" height="25"><path d="M13.5 3 L17 7 L15 7 L15 11 L19 11 L19 9 L23 12.5 L19 16 L19 14 L15 14 L15 18 L17 18 L13.5 22 L10 18 L12 18 L12 14 L8 14 L8 16 L4 12.5 L8 9 L8 11 L12 11 L12 7 L10 7 Z" fill="#f08a1c" stroke="#222" stroke-width="0.6"/></svg></div><div style="left:27.8px;top:0px;width:27.8px;height:25px;background:#8fa6cc;border-left:1px solid #4c4c4c;"><svg width="28" height="25"><rect x="6" y="6" width="15" height="15" rx="2" fill="#f08a1c" stroke="#222" stroke-width="0.8"/><path d="M6 13 L13 13 L13 21 M13 13 L20 7" fill="none" stroke="#222" stroke-width="0.8"/></svg></div><div style="left:55.6px;top:0px;width:27.8px;height:25px;background:#8fa6cc;border-left:1px solid #4c4c4c;"><svg width="28" height="25"><path d="M7 15 A7 7 0 0 1 18 6 M20 10 A7 7 0 0 1 9 19" fill="none" stroke="#f08a1c" stroke-width="3"/></svg></div><div style="left:83.4px;top:0px;width:27.8px;height:25px;background:#8fa6cc;border-left:1px solid #4c4c4c;"><svg width="28" height="25"><circle cx="13.5" cy="12.5" r="10" fill="none" stroke="#c86a1e" stroke-width="1.5"/><text x="13.5" y="18" font-family="Liberation Sans" font-weight="bold" font-size="15" text-anchor="middle" fill="#151515">P</text></svg></div><div style="left:111.2px;top:0px;width:27.8px;height:25px;border-left:1px solid #4c4c4c;"><svg width="28" height="25"><g fill="#f08a1c"><circle cx="7" cy="6" r="2.2"/><circle cx="13.5" cy="6" r="2.2"/><circle cx="7" cy="12.5" r="2.2"/><circle cx="13.5" cy="12.5" r="2.2"/></g><g fill="#151515"><circle cx="20" cy="6" r="2.2"/><circle cx="20" cy="12.5" r="2.2"/><circle cx="7" cy="19" r="2.2"/><circle cx="13.5" cy="19" r="2.2"/><circle cx="20" cy="19" r="2.2"/></g></svg></div></div><div style="left:1251px;top:850px;width:27px;height:27px;background:#6a6a6a;border:1px solid #2c2c2c;border-radius:4px;overflow:hidden"><div style="left:0.0px;top:0px;width:27.0px;height:25px;background:#8fa6cc;"><svg width="27" height="25"><rect x="8" y="3" width="11" height="20" fill="#f08a1c" stroke="#222" stroke-width="1"/><path d="M8 9.5 L19 9.5 M8 16 L19 16" stroke="#222" stroke-width="1"/><path d="M9 3 L9 23 M18 3 L18 23" stroke="#222" stroke-width="1.5" stroke-dasharray="1.5 1.5"/></svg></div></div><div style="left:36px;top:880px;width:1243px;height:112px;border:1px solid #5c5c5c;background:#444444"><svg style="left:6px;top:5px" width="11" height="11"><path d="M0.2 2.6 L2.6 0.2 M0.2 5.6 L2.6 3.2 M0.2 8.6 L2.6 6.2 M0.2 11.6 L2.6 9.2 M3.2 2.6 L5.6 0.2 M3.2 5.6 L5.6 3.2 M3.2 8.6 L5.6 6.2 M3.2 11.6 L5.6 9.2 M6.2 2.6 L8.6 0.2 M6.2 5.6 L8.6 3.2 M6.2 8.6 L8.6 6.2 M6.2 11.6 L8.6 9.2 M9.2 2.6 L11.6 0.2 M9.2 5.6 L11.6 3.2 M9.2 8.6 L11.6 6.2 M9.2 11.6 L11.6 9.2" stroke="#151515" stroke-width="1.3"/><path d="M0.9 2.8 L2.8 0.9 M0.9 5.8 L2.8 3.9 M0.9 8.8 L2.8 6.9 M0.9 11.8 L2.8 9.9 M3.9 2.8 L5.8 0.9 M3.9 5.8 L5.8 3.9 M3.9 8.8 L5.8 6.9 M3.9 11.8 L5.8 9.9 M6.9 2.8 L8.8 0.9 M6.9 5.8 L8.8 3.9 M6.9 8.8 L8.8 6.9 M6.9 11.8 L8.8 9.9 M9.9 2.8 L11.8 0.9 M9.9 5.8 L11.8 3.9 M9.9 8.8 L11.8 6.9 M9.9 11.8 L11.8 9.9" stroke="#e0e0e0" stroke-width="0.9"/></svg><div class="t" style="left:28px;top:4px;color:#888;font-size:11.8px">--</div><div class="t" style="left:435px;top:4px;color:#888;font-size:11.8px">--</div><div class="t" style="left:842px;top:4px;color:#888;font-size:11.8px">--</div><div style="left:0px;top:20px;width:1242px;height:1px;background:#5a5a5a"></div><div class="t" style="left:7px;top:28px;color:#cfcfcf;font-size:11.8px">X</div><div style="left:16px;top:26px;width:396px;height:18px;background:#3d3d3d;border:1px solid #383838;border-radius:3px"><div class="t" style="left:5px;top:1px;color:#8a8a8a;font-size:11.8px">0 cm</div><svg style="left:384px;top:3px" width="8" height="12"><path d="M1 5 L4 1 L7 5 Z M1 7 L4 11 L7 7 Z" fill="#777"/></svg></div><div class="t" style="left:7px;top:49px;color:#cfcfcf;font-size:11.8px">Y</div><div style="left:16px;top:47px;width:396px;height:18px;background:#3d3d3d;border:1px solid #383838;border-radius:3px"><div class="t" style="left:5px;top:1px;color:#8a8a8a;font-size:11.8px">0 cm</div><svg style="left:384px;top:3px" width="8" height="12"><path d="M1 5 L4 1 L7 5 Z M1 7 L4 11 L7 7 Z" fill="#777"/></svg></div><div class="t" style="left:7px;top:70px;color:#cfcfcf;font-size:11.8px">Z</div><div style="left:16px;top:68px;width:396px;height:18px;background:#3d3d3d;border:1px solid #383838;border-radius:3px"><div class="t" style="left:5px;top:1px;color:#8a8a8a;font-size:11.8px">0 cm</div><svg style="left:384px;top:3px" width="8" height="12"><path d="M1 5 L4 1 L7 5 Z M1 7 L4 11 L7 7 Z" fill="#777"/></svg></div><div class="t" style="left:419px;top:28px;color:#cfcfcf;font-size:11.8px">X</div><div style="left:428px;top:26px;width:396px;height:18px;background:#3d3d3d;border:1px solid #383838;border-radius:3px"><div class="t" style="left:5px;top:1px;color:#8a8a8a;font-size:11.8px">0 cm</div><svg style="left:384px;top:3px" width="8" height="12"><path d="M1 5 L4 1 L7 5 Z M1 7 L4 11 L7 7 Z" fill="#777"/></svg></div><div class="t" style="left:419px;top:49px;color:#cfcfcf;font-size:11.8px">Y</div><div style="left:428px;top:47px;width:396px;height:18px;background:#3d3d3d;border:1px solid #383838;border-radius:3px"><div class="t" style="left:5px;top:1px;color:#8a8a8a;font-size:11.8px">0 cm</div><svg style="left:384px;top:3px" width="8" height="12"><path d="M1 5 L4 1 L7 5 Z M1 7 L4 11 L7 7 Z" fill="#777"/></svg></div><div class="t" style="left:419px;top:70px;color:#cfcfcf;font-size:11.8px">Z</div><div style="left:428px;top:68px;width:396px;height:18px;background:#3d3d3d;border:1px solid #383838;border-radius:3px"><div class="t" style="left:5px;top:1px;color:#8a8a8a;font-size:11.8px">0 cm</div><svg style="left:384px;top:3px" width="8" height="12"><path d="M1 5 L4 1 L7 5 Z M1 7 L4 11 L7 7 Z" fill="#777"/></svg></div><div class="t" style="left:830px;top:28px;color:#cfcfcf;font-size:11.8px">H</div><div style="left:841px;top:26px;width:397px;height:18px;background:#3d3d3d;border:1px solid #383838;border-radius:3px"><div class="t" style="left:5px;top:1px;color:#8a8a8a;font-size:11.8px">0 °</div><svg style="left:385px;top:3px" width="8" height="12"><path d="M1 5 L4 1 L7 5 Z M1 7 L4 11 L7 7 Z" fill="#777"/></svg></div><div class="t" style="left:830px;top:49px;color:#cfcfcf;font-size:11.8px">P</div><div style="left:841px;top:47px;width:397px;height:18px;background:#3d3d3d;border:1px solid #383838;border-radius:3px"><div class="t" style="left:5px;top:1px;color:#8a8a8a;font-size:11.8px">0 °</div><svg style="left:385px;top:3px" width="8" height="12"><path d="M1 5 L4 1 L7 5 Z M1 7 L4 11 L7 7 Z" fill="#777"/></svg></div><div class="t" style="left:830px;top:70px;color:#cfcfcf;font-size:11.8px">B</div><div style="left:841px;top:68px;width:397px;height:18px;background:#3d3d3d;border:1px solid #383838;border-radius:3px"><div class="t" style="left:5px;top:1px;color:#8a8a8a;font-size:11.8px">0 °</div><svg style="left:385px;top:3px" width="8" height="12"><path d="M1 5 L4 1 L7 5 Z M1 7 L4 11 L7 7 Z" fill="#777"/></svg></div><div style="left:16px;top:92px;width:396px;height:17px;background:#5c5c5c;border-radius:4px"><div class="t" style="left:7px;top:1px;color:#8c8c8c;font-size:11.8px">World</div><svg width="396" height="17"><path d="M382 7 L390 7 L386 11 Z" fill="#8a8a8a"/></svg></div><div style="left:428px;top:92px;width:396px;height:17px;background:#5c5c5c;border-radius:4px"><div class="t" style="left:7px;top:1px;color:#8c8c8c;font-size:11.8px">Scale</div></div><div style="left:841px;top:92px;width:397px;height:17px;background:linear-gradient(#6c6c6c,#5e5e5e);border-radius:8px;border:1px solid #3a3a3a"><div class="t" style="left:0px;top:1px;color:#bdbdbd;font-size:11.8px;width:397px;text-align:center">Apply</div></div></div><div style="left:36px;top:995px;width:555px;height:378px;border:1px solid #555;border-bottom:2px solid #2e2e2e;background:#444444"></div><div style="left:37px;top:996px;width:553px;height:19px;background:#303030"><div style="left:6px;top:4px;width:9px;height:11px;background:linear-gradient(135deg,#9a9a9a,#5a5a5a);border:1px solid #222"></div><div class="t" style="left:25px;top:2px;color:#d2d2d2;font-size:11.8px">Console</div></div><div style="left:37px;top:1015px;width:553px;height:20px;background:#444444;border-bottom:1px solid #5a5a5a"><svg style="left:6px;top:5px" width="11" height="11"><path d="M0.2 2.6 L2.6 0.2 M0.2 5.6 L2.6 3.2 M0.2 8.6 L2.6 6.2 M0.2 11.6 L2.6 9.2 M3.2 2.6 L5.6 0.2 M3.2 5.6 L5.6 3.2 M3.2 8.6 L5.6 6.2 M3.2 11.6 L5.6 9.2 M6.2 2.6 L8.6 0.2 M6.2 5.6 L8.6 3.2 M6.2 8.6 L8.6 6.2 M6.2 11.6 L8.6 9.2 M9.2 2.6 L11.6 0.2 M9.2 5.6 L11.6 3.2 M9.2 8.6 L11.6 6.2 M9.2 11.6 L11.6 9.2" stroke="#151515" stroke-width="1.3"/><path d="M0.9 2.8 L2.8 0.9 M0.9 5.8 L2.8 3.9 M0.9 8.8 L2.8 6.9 M0.9 11.8 L2.8 9.9 M3.9 2.8 L5.8 0.9 M3.9 5.8 L5.8 3.9 M3.9 8.8 L5.8 6.9 M3.9 11.8 L5.8 9.9 M6.9 2.8 L8.8 0.9 M6.9 5.8 L8.8 3.9 M6.9 8.8 L8.8 6.9 M6.9 11.8 L8.8 9.9 M9.9 2.8 L11.8 0.9 M9.9 5.8 L11.8 3.9 M9.9 8.8 L11.8 6.9 M9.9 11.8 L11.8 9.9" stroke="#e0e0e0" stroke-width="0.9"/></svg><div class="t" style="left:26px;top:2px;color:#cfcfcf;font-size:11.8px">Advanced</div></div><svg style="left:573px;top:1018px" width="12" height="12"><circle cx="6" cy="6" r="5.5" fill="#111"/><path d="M3.5 3.5 L8.5 8.5 M8.5 3.5 L3.5 8.5" stroke="#eee" stroke-width="1.5"/></svg><div style="left:40px;top:1040px;width:136px;height:329px;background:#444444;border:1px solid #3a3a3a;border-bottom:1px solid #5e5e5e"><svg width="135" height="70" style="left:0;top:0"><path d="M14 0 L14 56 M14 8 L21 8 M14 24 L21 24 M14 40 L21 40 M14 56 L21 56" stroke="#8a8a8a" stroke-width="1" fill="none"/></svg><div class="t" style="left:22px;top:1px;color:#c8c8c8;font-size:11.8px">Default (0 / 5)</div><div class="t" style="left:22px;top:17px;color:#f3a521;font-size:11.8px">Python (0 / 2)</div><div class="t" style="left:22px;top:33px;color:#c8c8c8;font-size:11.8px">Renderer (0 / 0)</div><div class="t" style="left:22px;top:49px;color:#c8c8c8;font-size:11.8px">Team Render  (0 / 0)</div><div style="left:2px;top:315px;width:131px;height:11px;background:#2e2e2e;border-radius:5px"><div style="left:10px;top:1px;width:90px;height:9px;background:#6a6a6a;border-radius:4px"></div><svg width="131" height="11"><path d="M2 5.5 L8 3 L8 8 Z M129 5.5 L123 3 L123 8 Z" fill="#bbb"/></svg></div></div><div style="left:179px;top:1040px;width:405px;height:329px;background:#333333;border:1px solid #3a3a3a;border-right:1px solid #5e5e5e;border-bottom:1px solid #5e5e5e"><div class="m" style="left:3px;top:3px;color:#d0d0d0">pCONNECTOR::v1.3 Loaded</div><div class="m" style="left:3px;top:17px;color:#d0d0d0">HDRI Studio Rig V(2.148), 20026 Studio, OS X</div><div class="m" style="left:3px;top:31px;color:#f3a521;font-weight:bold">&gt;&gt;&gt;</div></div><div style="left:595px;top:995px;width:684px;height:378px;border:1px solid #555;border-bottom:2px solid #2e2e2e;background:#444444"></div><div style="left:596px;top:996px;width:682px;height:19px;background:#303030"><div style="left:6px;top:4px;width:9px;height:11px;background:linear-gradient(135deg,#9a9a9a,#5a5a5a);border:1px solid #222"></div><div class="t" style="left:25px;top:2px;color:#d2d2d2;font-size:11.8px">Script Log</div></div><div style="left:596px;top:1015px;width:682px;height:20px;background:#444444;border-bottom:1px solid #5a5a5a"><svg style="left:6px;top:5px" width="11" height="11"><path d="M0.2 2.6 L2.6 0.2 M0.2 5.6 L2.6 3.2 M0.2 8.6 L2.6 6.2 M0.2 11.6 L2.6 9.2 M3.2 2.6 L5.6 0.2 M3.2 5.6 L5.6 3.2 M3.2 8.6 L5.6 6.2 M3.2 11.6 L5.6 9.2 M6.2 2.6 L8.6 0.2 M6.2 5.6 L8.6 3.2 M6.2 8.6 L8.6 6.2 M6.2 11.6 L8.6 9.2 M9.2 2.6 L11.6 0.2 M9.2 5.6 L11.6 3.2 M9.2 8.6 L11.6 6.2 M9.2 11.6 L11.6 9.2" stroke="#151515" stroke-width="1.3"/><path d="M0.9 2.8 L2.8 0.9 M0.9 5.8 L2.8 3.9 M0.9 8.8 L2.8 6.9 M0.9 11.8 L2.8 9.9 M3.9 2.8 L5.8 0.9 M3.9 5.8 L5.8 3.9 M3.9 8.8 L5.8 6.9 M3.9 11.8 L5.8 9.9 M6.9 2.8 L8.8 0.9 M6.9 5.8 L8.8 3.9 M6.9 8.8 L8.8 6.9 M6.9 11.8 L8.8 9.9 M9.9 2.8 L11.8 0.9 M9.9 5.8 L11.8 3.9 M9.9 8.8 L11.8 6.9 M9.9 11.8 L11.8 9.9" stroke="#e0e0e0" stroke-width="0.9"/></svg></div><svg style="left:1262px;top:1017px" width="12" height="12"><circle cx="6" cy="6" r="5.5" fill="#111"/><path d="M3.5 3.5 L8.5 8.5 M8.5 3.5 L3.5 8.5" stroke="#eee" stroke-width="1.5"/></svg><div style="left:600px;top:1040px;width:657px;height:312px;background:#333333;overflow:hidden"><div style="left:0px;top:0px;width:21px;height:312px;background:#6e6e6e"></div><div class="m" style="left:3px;top:2px;color:#cccccc">18</div><div class="m" style="left:24px;top:2px;color:#c8c8c8">        <span style="color:#c9dcff;font-weight:bold">return</span> c4d.plugins.FindPlugin(id, c4d.<span style="color:#ffab2e">PLUGINTYPE_PREFS</span>)</div><div class="m" style="left:3px;top:16px;color:#cccccc">19</div><div class="m" style="left:24px;top:16px;color:#c8c8c8"></div><div class="m" style="left:3px;top:30px;color:#cccccc">20</div><div class="m" style="left:24px;top:30px;color:#c8c8c8">    c4d.CallCommand(1026719, 1026719) <span style="color:#1fd41f"># Open...</span></div><div class="m" style="left:3px;top:44px;color:#cccccc">21</div><div class="m" style="left:24px;top:44px;color:#c8c8c8">    c4d.CallCommand(13640) <span style="color:#1fd41f"># Toggle Active View</span></div><div class="m" style="left:3px;top:58px;color:#cccccc">22</div><div class="m" style="left:24px;top:58px;color:#c8c8c8">    c4d.CallCommand(13640) <span style="color:#1fd41f"># Toggle Active View</span></div><div class="m" style="left:3px;top:72px;color:#cccccc">23</div><div class="m" style="left:24px;top:72px;color:#c8c8c8">    c4d.CallCommand(12161) <span style="color:#1fd41f"># Edit Render Settings...</span></div><div class="m" style="left:3px;top:86px;color:#cccccc">24</div><div class="m" style="left:24px;top:86px;color:#c8c8c8">    c4d.<span style="color:#ffab2e">RDATA_PATH</span></div><div class="m" style="left:3px;top:100px;color:#cccccc">25</div><div class="m" style="left:24px;top:100px;color:#c8c8c8">    c4d.CallCommand(13931, 13931) <span style="color:#1fd41f"># Use as Render View</span></div><div class="m" style="left:3px;top:114px;color:#cccccc">26</div><div class="m" style="left:24px;top:114px;color:#c8c8c8">    c4d.CallCommand(12099) <span style="color:#1fd41f"># Render to Picture Viewer</span></div><div class="m" style="left:3px;top:128px;color:#cccccc">27</div><div class="m" style="left:24px;top:128px;color:#c8c8c8">    c4d.CallCommand(12161) <span style="color:#1fd41f"># Edit Render Settings...</span></div><div class="m" style="left:3px;top:142px;color:#cccccc">28</div><div class="m" style="left:24px;top:142px;color:#c8c8c8">    renderdata()[c4d.<span style="color:#ffab2e">RDATA_AAFILTER</span>] = 4</div><div class="m" style="left:3px;top:156px;color:#cccccc">29</div><div class="m" style="left:24px;top:156px;color:#c8c8c8">    renderdata()[c4d.<span style="color:#ffab2e">RDATA_AAFILTER</span>] = 0</div><div class="m" style="left:3px;top:170px;color:#cccccc">30</div><div class="m" style="left:24px;top:170px;color:#c8c8c8">    c4d.CallCommand(430000731, 430000731) <span style="color:#1fd41f"># Stop Rendering...</span></div><div class="m" style="left:3px;top:184px;color:#cccccc">31</div><div class="m" style="left:24px;top:184px;color:#c8c8c8">    c4d.CallCommand(12161) <span style="color:#1fd41f"># Edit Render Settings...</span></div><div class="m" style="left:3px;top:198px;color:#cccccc">32</div><div class="m" style="left:24px;top:198px;color:#c8c8c8">    c4d.CallCommand(12099) <span style="color:#1fd41f"># Render to Picture Viewer</span></div><div class="m" style="left:3px;top:212px;color:#cccccc">33</div><div class="m" style="left:24px;top:212px;color:#c8c8c8">    c4d.CallCommand(13640) <span style="color:#1fd41f"># Toggle Active View</span></div><div style="left:25px;top:225px;width:631px;height:14px;background:#555555"></div><div class="m" style="left:3px;top:226px;color:#cccccc">34</div><div class="m" style="left:24px;top:226px;color:#c8c8c8">    c4d.CallCommand(13640) <span style="color:#1fd41f"># Toggle Active View</span></div><div class="m" style="left:3px;top:240px;color:#cccccc">35</div><div class="m" style="left:24px;top:240px;color:#c8c8c8"></div><div class="m" style="left:3px;top:254px;color:#cccccc">36</div><div class="m" style="left:24px;top:254px;color:#c8c8c8"></div><div class="m" style="left:3px;top:268px;color:#cccccc">37</div><div class="m" style="left:24px;top:268px;color:#c8c8c8"><span style="color:#c9dcff;font-weight:bold">if</span> __name__==<span style="color:#8a8cff">'__main__'</span>:</div><div class="m" style="left:3px;top:282px;color:#cccccc">38</div><div class="m" style="left:24px;top:282px;color:#c8c8c8">    main()</div><div class="m" style="left:3px;top:296px;color:#cccccc">39</div><div class="m" style="left:24px;top:296px;color:#c8c8c8">    c4d.EventAdd()</div><div style="left:24px;top:0px;width:1px;height:20px;background:#4a4a4a"></div><div style="left:50px;top:0px;width:1px;height:312px;background:#3f3f3f"></div></div><div style="left:600px;top:1351px;width:657px;height:1px;background:#5e5e5e"></div><div style="left:597px;top:1352px;width:660px;height:16px;background:#333333"><div class="t" style="left:10px;top:1px;color:#d4d4d4;font-size:11.8px">Line 34, Pos. 1</div></div><div style="left:597px;top:1368px;width:680px;height:1px;background:#5e5e5e"></div><div style="left:0px;top:1376px;width:1283px;height:1px;background:#5e5e5e"></div><div style="left:1261px;top:1039px;width:12px;height:314px;background:#2f2f2f;border-radius:6px"><div style="left:1px;top:141px;width:10px;height:171px;background:#5e5e5e;border-radius:5px"></div><svg width="12" height="16"><path d="M3 10 L6 3 L9 10 L6 8 Z" fill="#888"/></svg></div><div style="left:1283px;top:25px;width:856px;height:1370px;border:1px solid #5a5a5a;border-bottom:none;background:#444444"></div><div style="left:1284px;top:26px;width:854px;height:19px;background:#303030"><div style="left:6px;top:4px;width:9px;height:11px;background:linear-gradient(135deg,#9a9a9a,#5a5a5a);border:1px solid #222"></div><div class="t" style="left:25px;top:2px;color:#d2d2d2;font-size:11.8px">Script Manager</div></div><div style="left:1284px;top:45px;width:854px;height:21px;background:#444444"><svg style="left:6px;top:5px" width="9" height="10"><path d="M0.2 2.6 L2.6 0.2 M0.2 5.6 L2.6 3.2 M0.2 8.6 L2.6 6.2 M3.2 2.6 L5.6 0.2 M3.2 5.6 L5.6 3.2 M3.2 8.6 L5.6 6.2 M6.2 2.6 L8.6 0.2 M6.2 5.6 L8.6 3.2 M6.2 8.6 L8.6 6.2" stroke="#151515" stroke-width="1.3"/><path d="M0.9 2.8 L2.8 0.9 M0.9 5.8 L2.8 3.9 M0.9 8.8 L2.8 6.9 M3.9 2.8 L5.8 0.9 M3.9 5.8 L5.8 3.9 M3.9 8.8 L5.8 6.9 M6.9 2.8 L8.8 0.9 M6.9 5.8 L8.8 3.9 M6.9 8.8 L8.8 6.9" stroke="#e0e0e0" stroke-width="0.9"/></svg><div class="t" style="left:27px;top:2px;color:#cfcfcf;font-size:11.8px">File</div><div class="t" style="left:58px;top:2px;color:#cfcfcf;font-size:11.8px">Edit</div></div><div style="left:1284px;top:66px;width:854px;height:1px;background:#5e5e5e"></div><div style="left:1287px;top:71px;width:34px;height:34px;background:#3f3f3f;border:1px solid #565656"><svg width="34" height="34"><g transform="translate(5,4)"><path d="M11 1 C5 1 5 4 5 6 L5 9 L12 9 L12 10 L3 10 C0 10 -1 13 -1 16 C-1 20 1 22 3 22 L5 22 L5 18 C5 16 7 14 9 14 L15 14 C17 14 18 13 18 11 L18 5 C18 2 15 1 11 1 Z" fill="#f0f0f0" stroke="#111" stroke-width="1"/><path d="M13 25 C19 25 19 22 19 20 L19 17 L12 17 L12 16 L21 16 C24 16 25 13 25 10 C25 6 23 4 21 4 L19 4 L19 8 C19 10 17 12 15 12 L9 12 C7 12 6 13 6 15 L6 21 C6 24 9 25 13 25 Z" fill="#8fa3e8" stroke="#111" stroke-width="1"/><circle cx="8.5" cy="4.5" r="1.1" fill="#111"/><circle cx="15.5" cy="21.5" r="1.1" fill="#111"/></g></svg></div><div class="t" style="left:1325px;top:80px;color:#cfcfcf;font-size:11.8px">Script</div><div style="left:1362px;top:78px;width:770px;height:18px;background:linear-gradient(#6e6e6e,#5f5f5f);border:1px solid #3a3a3a;border-radius:5px"><div style="left:10px;top:2px;width:14px;height:14px;"><svg width="14" height="14"><g transform="translate(1,1) scale(0.45)"><path d="M11 1 C5 1 5 4 5 6 L5 9 L12 9 L12 10 L3 10 C0 10 -1 13 -1 16 C-1 20 1 22 3 22 L5 22 L5 18 C5 16 7 14 9 14 L15 14 C17 14 18 13 18 11 L18 5 C18 2 15 1 11 1 Z" fill="#eee"/><path d="M13 25 C19 25 19 22 19 20 L19 17 L12 17 L12 16 L21 16 C24 16 25 13 25 10 C25 6 23 4 21 4 L19 4 L19 8 C19 10 17 12 15 12 L9 12 C7 12 6 13 6 15 L6 21 C6 24 9 25 13 25 Z" fill="#8fa3e8"/></g></svg></div><div class="t" style="left:30px;top:1px;color:#d8d8d8;font-size:11.8px">pass_import_test</div><svg width="770" height="18"><path d="M754 7 L763 7 L758.5 11 Z" fill="#e0e0e0"/></svg></div><div style="left:1289px;top:109px;width:830px;height:1226px;background:#333333;overflow:hidden;border-right:1px solid #5a5a5a"><div style="left:1px;top:0px;width:28px;height:1226px;background:#6e6e6e"></div><div style="left:32px;top:968px;width:797px;height:14px;background:#555555"></div><svg width="830" height="1226"><path d="M32.5 2 L32.5 16 M32.5 16 L32.5 30 M32.5 30 L32.5 44 M32.5 44 L32.5 58 M32.5 58 L32.5 72 M32.5 72 L32.5 86 M32.5 86 L32.5 100 M32.5 100 L32.5 114 M32.5 114 L32.5 128 M32.5 128 L32.5 142 M32.5 142 L32.5 156 M32.5 156 L32.5 170 M32.5 170 L32.5 184 M32.5 184 L32.5 198 M32.5 198 L32.5 212 M58.9 198 L58.9 212 M32.5 212 L32.5 226 M58.9 212 L58.9 226 M32.5 226 L32.5 240 M58.9 226 L58.9 240 M32.5 240 L32.5 254 M58.9 240 L58.9 254 M85.3 240 L85.3 254 M32.5 254 L32.5 268 M58.9 254 L58.9 268 M85.3 254 L85.3 268 M32.5 268 L32.5 282 M58.9 268 L58.9 282 M85.3 268 L85.3 282 M32.5 282 L32.5 296 M58.9 282 L58.9 296 M85.3 282 L85.3 296 M32.5 296 L32.5 310 M58.9 296 L58.9 310 M85.3 296 L85.3 310 M32.5 310 L32.5 324 M58.9 310 L58.9 324 M85.3 310 L85.3 324 M32.5 324 L32.5 338 M58.9 324 L58.9 338 M85.3 324 L85.3 338 M32.5 338 L32.5 352 M58.9 338 L58.9 352 M85.3 338 L85.3 352 M32.5 352 L32.5 366 M58.9 352 L58.9 366 M85.3 352 L85.3 366 M32.5 366 L32.5 380 M58.9 366 L58.9 380 M85.3 366 L85.3 380 M32.5 380 L32.5 394 M58.9 380 L58.9 394 M85.3 380 L85.3 394 M32.5 394 L32.5 408 M58.9 394 L58.9 408 M85.3 394 L85.3 408 M32.5 408 L32.5 422 M58.9 408 L58.9 422 M85.3 408 L85.3 422 M32.5 422 L32.5 436 M58.9 422 L58.9 436 M85.3 422 L85.3 436 M32.5 436 L32.5 450 M58.9 436 L58.9 450 M85.3 436 L85.3 450 M32.5 450 L32.5 464 M58.9 450 L58.9 464 M85.3 450 L85.3 464 M32.5 464 L32.5 478 M58.9 464 L58.9 478 M85.3 464 L85.3 478 M32.5 478 L32.5 492 M58.9 478 L58.9 492 M85.3 478 L85.3 492 M32.5 492 L32.5 506 M58.9 492 L58.9 506 M85.3 492 L85.3 506 M32.5 506 L32.5 520 M58.9 506 L58.9 520 M85.3 506 L85.3 520 M32.5 520 L32.5 534 M58.9 520 L58.9 534 M85.3 520 L85.3 534 M32.5 534 L32.5 548 M58.9 534 L58.9 548 M85.3 534 L85.3 548 M32.5 548 L32.5 562 M32.5 562 L32.5 576 M32.5 576 L32.5 590 M32.5 590 L32.5 604 M32.5 604 L32.5 618 M58.9 604 L58.9 618 M32.5 618 L32.5 632 M58.9 618 L58.9 632 M32.5 632 L32.5 646 M58.9 632 L58.9 646 M32.5 646 L32.5 660 M58.9 646 L58.9 660 M32.5 660 L32.5 674 M58.9 660 L58.9 674 M32.5 674 L32.5 688 M58.9 674 L58.9 688 M32.5 688 L32.5 702 M58.9 688 L58.9 702 M32.5 702 L32.5 716 M58.9 702 L58.9 716 M32.5 716 L32.5 730 M58.9 716 L58.9 730 M32.5 730 L32.5 744 M58.9 730 L58.9 744 M32.5 744 L32.5 758 M58.9 744 L58.9 758 M32.5 758 L32.5 772 M58.9 758 L58.9 772 M32.5 772 L32.5 786 M58.9 772 L58.9 786 M32.5 786 L32.5 800 M58.9 786 L58.9 800 M32.5 800 L32.5 814 M58.9 800 L58.9 814 M32.5 814 L32.5 828 M58.9 814 L58.9 828 M32.5 828 L32.5 842 M58.9 828 L58.9 842 M32.5 842 L32.5 856 M58.9 842 L58.9 856 M85.3 842 L85.3 856 M32.5 856 L32.5 870 M58.9 856 L58.9 870 M85.3 856 L85.3 870 M32.5 870 L32.5 884 M58.9 870 L58.9 884 M85.3 870 L85.3 884 M111.7 870 L111.7 884 M32.5 884 L32.5 898 M58.9 884 L58.9 898 M85.3 884 L85.3 898 M111.7 884 L111.7 898 M138.1 884 L138.1 898 M32.5 898 L32.5 912 M58.9 898 L58.9 912 M85.3 898 L85.3 912 M111.7 898 L111.7 912 M138.1 898 L138.1 912 M32.5 912 L32.5 926 M58.9 912 L58.9 926 M85.3 912 L85.3 926 M111.7 912 L111.7 926 M138.1 912 L138.1 926 M32.5 926 L32.5 940 M58.9 926 L58.9 940 M85.3 926 L85.3 940 M111.7 926 L111.7 940 M138.1 926 L138.1 940 M32.5 940 L32.5 954 M58.9 940 L58.9 954 M85.3 940 L85.3 954 M111.7 940 L111.7 954 M138.1 940 L138.1 954 M32.5 954 L32.5 968 M58.9 954 L58.9 968 M85.3 954 L85.3 968 M111.7 954 L111.7 968 M138.1 954 L138.1 968 M32.5 968 L32.5 982 M58.9 968 L58.9 982 M85.3 968 L85.3 982 M111.7 968 L111.7 982 M138.1 968 L138.1 982 M32.5 982 L32.5 996 M58.9 982 L58.9 996 M85.3 982 L85.3 996 M111.7 982 L111.7 996 M138.1 982 L138.1 996 M32.5 996 L32.5 1010 M58.9 996 L58.9 1010 M85.3 996 L85.3 1010 M111.7 996 L111.7 1010 M138.1 996 L138.1 1010 M32.5 1010 L32.5 1024 M58.9 1010 L58.9 1024 M85.3 1010 L85.3 1024 M111.7 1010 L111.7 1024 M138.1 1010 L138.1 1024 M32.5 1024 L32.5 1038 M58.9 1024 L58.9 1038 M85.3 1024 L85.3 1038 M111.7 1024 L111.7 1038 M138.1 1024 L138.1 1038 M32.5 1038 L32.5 1052 M58.9 1038 L58.9 1052 M85.3 1038 L85.3 1052 M111.7 1038 L111.7 1052 M138.1 1038 L138.1 1052 M32.5 1052 L32.5 1066 M58.9 1052 L58.9 1066 M85.3 1052 L85.3 1066 M111.7 1052 L111.7 1066 M138.1 1052 L138.1 1066 M32.5 1066 L32.5 1080 M58.9 1066 L58.9 1080 M85.3 1066 L85.3 1080 M111.7 1066 L111.7 1080 M138.1 1066 L138.1 1080 M32.5 1080 L32.5 1094 M58.9 1080 L58.9 1094 M85.3 1080 L85.3 1094 M111.7 1080 L111.7 1094 M138.1 1080 L138.1 1094 M32.5 1094 L32.5 1108 M58.9 1094 L58.9 1108 M85.3 1094 L85.3 1108 M111.7 1094 L111.7 1108 M138.1 1094 L138.1 1108 M32.5 1108 L32.5 1122 M58.9 1108 L58.9 1122 M85.3 1108 L85.3 1122 M111.7 1108 L111.7 1122 M138.1 1108 L138.1 1122 M32.5 1122 L32.5 1136 M58.9 1122 L58.9 1136 M85.3 1122 L85.3 1136 M111.7 1122 L111.7 1136 M138.1 1122 L138.1 1136 M32.5 1136 L32.5 1150 M58.9 1136 L58.9 1150 M85.3 1136 L85.3 1150 M111.7 1136 L111.7 1150 M138.1 1136 L138.1 1150 M32.5 1150 L32.5 1164 M58.9 1150 L58.9 1164 M85.3 1150 L85.3 1164 M111.7 1150 L111.7 1164 M138.1 1150 L138.1 1164 M32.5 1164 L32.5 1178 M58.9 1164 L58.9 1178 M85.3 1164 L85.3 1178 M111.7 1164 L111.7 1178 M138.1 1164 L138.1 1178 M32.5 1178 L32.5 1192 M58.9 1178 L58.9 1192 M85.3 1178 L85.3 1192 M111.7 1178 L111.7 1192 M138.1 1178 L138.1 1192 M32.5 1192 L32.5 1206 M58.9 1192 L58.9 1206 M85.3 1192 L85.3 1206 M111.7 1192 L111.7 1206 M138.1 1192 L138.1 1206 M32.5 1206 L32.5 1220 M58.9 1206 L58.9 1220 M85.3 1206 L85.3 1220 M111.7 1206 L111.7 1220 M138.1 1206 L138.1 1220 M32.5 1220 L32.5 1234 M58.9 1220 L58.9 1234 M85.3 1220 L85.3 1234 M111.7 1220 L111.7 1234 M138.1 1220 L138.1 1234" stroke="#555" stroke-width="1"/></svg><div class="m" style="left:3px;top:3px;color:#d0d0d0">26</div><div class="m" style="left:3px;top:17px;color:#d0d0d0">27</div><div class="m" style="left:32px;top:17px;color:#c8c8c8">    <span style="color:#1fd41f"># Nulls Names</span></div><div class="m" style="left:3px;top:31px;color:#d0d0d0">28</div><div class="m" style="left:32px;top:31px;color:#c8c8c8">    names = c4d.BaseObject(c4d.<span style="color:#ffab2e">Onull</span>)</div><div class="m" style="left:3px;top:45px;color:#d0d0d0">29</div><div class="m" style="left:32px;top:45px;color:#c8c8c8">    names[c4d.<span style="color:#ffab2e">ID_BASELIST_NAME</span>] = <span style="color:#8a8cff">"Player Names"</span></div><div class="m" style="left:3px;top:59px;color:#d0d0d0">30</div><div class="m" style="left:32px;top:59px;color:#c8c8c8">    doc.InsertObject(names)</div><div class="m" style="left:3px;top:73px;color:#d0d0d0">31</div><div class="m" style="left:32px;top:73px;color:#c8c8c8">    c4d.EventAdd()</div><div class="m" style="left:3px;top:87px;color:#d0d0d0">32</div><div class="m" style="left:3px;top:101px;color:#d0d0d0">33</div><div class="m" style="left:32px;top:101px;color:#c8c8c8">    <span style="color:#1fd41f"># Nulls Circles</span></div><div class="m" style="left:3px;top:115px;color:#d0d0d0">34</div><div class="m" style="left:32px;top:115px;color:#c8c8c8">    circles = c4d.BaseObject(c4d.<span style="color:#ffab2e">Onull</span>)</div><div class="m" style="left:3px;top:129px;color:#d0d0d0">35</div><div class="m" style="left:32px;top:129px;color:#c8c8c8">    circles[c4d.<span style="color:#ffab2e">ID_BASELIST_NAME</span>] = <span style="color:#8a8cff">"Player Circles"</span></div><div class="m" style="left:3px;top:143px;color:#d0d0d0">36</div><div class="m" style="left:32px;top:143px;color:#c8c8c8">    doc.InsertObject(circles)</div><div class="m" style="left:3px;top:157px;color:#d0d0d0">37</div><div class="m" style="left:32px;top:157px;color:#c8c8c8">    c4d.EventAdd()</div><div class="m" style="left:3px;top:171px;color:#d0d0d0">38</div><div class="m" style="left:3px;top:185px;color:#d0d0d0">39</div><div class="m" style="left:32px;top:185px;color:#c8c8c8">    <span style="color:#c9dcff;font-weight:bold">with</span> <span style="color:#ffe27a;font-weight:bold">open</span>(txt_fpath, <span style="color:#8a8cff">'r'</span>) <span style="color:#c9dcff;font-weight:bold">as</span> read_obj:</div><div class="m" style="left:3px;top:199px;color:#d0d0d0">40</div><div class="m" style="left:32px;top:199px;color:#c8c8c8">        csv_reader = reader(read_obj)</div><div class="m" style="left:3px;top:213px;color:#d0d0d0">41</div><div class="m" style="left:32px;top:213px;color:#c8c8c8">        <span style="color:#ffe27a;font-weight:bold">next</span>(csv_reader)</div><div class="m" style="left:3px;top:227px;color:#d0d0d0">42</div><div class="m" style="left:32px;top:227px;color:#c8c8c8">        <span style="color:#c9dcff;font-weight:bold">for</span> row <span style="color:#c9dcff;font-weight:bold">in</span> csv_reader:</div><div class="m" style="left:3px;top:241px;color:#d0d0d0">43</div><div class="m" style="left:32px;top:241px;color:#c8c8c8">            c4d.CallCommand(5164, 5164) <span style="color:#1fd41f"># Disc</span></div><div class="m" style="left:3px;top:255px;color:#d0d0d0">44</div><div class="m" style="left:32px;top:255px;color:#c8c8c8">            selected = doc.GetActiveObject()</div><div class="m" style="left:3px;top:269px;color:#d0d0d0">45</div><div class="m" style="left:32px;top:269px;color:#c8c8c8">            selected[c4d.<span style="color:#ffab2e">PRIM_DISC_ORAD</span>] = <span style="color:#ffe27a;font-weight:bold">float</span>(row[3]) *10</div><div class="m" style="left:3px;top:283px;color:#d0d0d0">46</div><div class="m" style="left:32px;top:283px;color:#c8c8c8">            selected[c4d.<span style="color:#ffab2e">PRIM_DISC_IRAD</span>] =  <span style="color:#ffe27a;font-weight:bold">float</span>(row[3]) *10 - 10 - <span style="color:#ffe27a;font-weight:bold">float</span>(row[3]) *3</div><div class="m" style="left:3px;top:297px;color:#d0d0d0">47</div><div class="m" style="left:32px;top:297px;color:#c8c8c8">            selected[c4d.<span style="color:#ffab2e">ID_BASELIST_NAME</span>] = row[0]</div><div class="m" style="left:3px;top:311px;color:#d0d0d0">48</div><div class="m" style="left:32px;top:311px;color:#c8c8c8">            selected[c4d.<span style="color:#ffab2e">ID_BASEOBJECT_REL_POSITION</span>,c4d.<span style="color:#ffab2e">VECTOR_X</span>] = 10500*<span style="color:#ffe27a;font-weight:bold">float</span>(row[1]) - 10500/2</div><div class="m" style="left:3px;top:325px;color:#d0d0d0">49</div><div class="m" style="left:32px;top:325px;color:#c8c8c8">            selected[c4d.<span style="color:#ffab2e">ID_BASEOBJECT_REL_POSITION</span>,c4d.<span style="color:#ffab2e">VECTOR_Z</span>] = 6800*<span style="color:#ffe27a;font-weight:bold">float</span>(row[2]) - 6800/2</div><div class="m" style="left:3px;top:339px;color:#d0d0d0">50</div><div class="m" style="left:3px;top:353px;color:#d0d0d0">51</div><div class="m" style="left:32px;top:353px;color:#c8c8c8">            selected.InsertUnder(circles) <span style="color:#1fd41f"># place in Spline Null Object</span></div><div class="m" style="left:3px;top:367px;color:#d0d0d0">52</div><div class="m" style="left:3px;top:381px;color:#d0d0d0">53</div><div class="m" style="left:32px;top:381px;color:#c8c8c8">            c4d.CallCommand(1019268, 1019268) <span style="color:#1fd41f"># MoText</span></div><div class="m" style="left:3px;top:395px;color:#d0d0d0">54</div><div class="m" style="left:32px;top:395px;color:#c8c8c8">            selected = doc.GetActiveObject()</div><div class="m" style="left:3px;top:409px;color:#d0d0d0">55</div><div class="m" style="left:32px;top:409px;color:#c8c8c8">            selected[c4d.<span style="color:#ffab2e">PRIM_TEXT_TEXT</span>] = row[0]</div><div class="m" style="left:3px;top:423px;color:#d0d0d0">56</div><div class="m" style="left:32px;top:423px;color:#c8c8c8">            selected[c4d.<span style="color:#ffab2e">ID_BASEOBJECT_REL_ROTATION</span>,c4d.<span style="color:#ffab2e">VECTOR_X</span>] = -1.571</div><div class="m" style="left:3px;top:437px;color:#d0d0d0">57</div><div class="m" style="left:32px;top:437px;color:#c8c8c8">            selected[c4d.<span style="color:#ffab2e">ID_BASEOBJECT_REL_ROTATION</span>,c4d.<span style="color:#ffab2e">VECTOR_Y</span>] = -1.571</div><div class="m" style="left:3px;top:451px;color:#d0d0d0">58</div><div class="m" style="left:32px;top:451px;color:#c8c8c8">            selected[c4d.<span style="color:#ffab2e">PRIM_TEXT_ALIGN</span>] = 1</div><div class="m" style="left:3px;top:465px;color:#d0d0d0">59</div><div class="m" style="left:32px;top:465px;color:#c8c8c8">            selected[c4d.<span style="color:#ffab2e">ID_BASEOBJECT_REL_POSITION</span>,c4d.<span style="color:#ffab2e">VECTOR_X</span>] = 10500*<span style="color:#ffe27a;font-weight:bold">float</span>(row[1]) - 10500/2</div><div class="m" style="left:3px;top:479px;color:#d0d0d0">60</div><div class="m" style="left:32px;top:479px;color:#c8c8c8">            selected[c4d.<span style="color:#ffab2e">ID_BASEOBJECT_REL_POSITION</span>,c4d.<span style="color:#ffab2e">VECTOR_Z</span>] = 6800*<span style="color:#ffe27a;font-weight:bold">float</span>(row[2]) - 6800/2</div><div class="m" style="left:3px;top:493px;color:#d0d0d0">61</div><div class="m" style="left:32px;top:493px;color:#c8c8c8">            selected[c4d.<span style="color:#ffab2e">ID_BASEOBJECT_REL_POSITION</span>,c4d.<span style="color:#ffab2e">VECTOR_Y</span>] = 200</div><div class="m" style="left:3px;top:507px;color:#d0d0d0">62</div><div class="m" style="left:32px;top:507px;color:#c8c8c8">            selected[c4d.<span style="color:#ffab2e">PRIM_TEXT_HEIGHT</span>] = 100</div><div class="m" style="left:3px;top:521px;color:#d0d0d0">63</div><div class="m" style="left:32px;top:521px;color:#c8c8c8">            selected[c4d.<span style="color:#ffab2e">MGTEXTOBJECT_SPLINEMOVE</span>] = 0</div><div class="m" style="left:3px;top:535px;color:#d0d0d0">64</div><div class="m" style="left:32px;top:535px;color:#c8c8c8">            selected.InsertUnder(names) <span style="color:#1fd41f"># place in Spline Null Object</span></div><div class="m" style="left:3px;top:549px;color:#d0d0d0">65</div><div class="m" style="left:3px;top:563px;color:#d0d0d0">66</div><div class="m" style="left:32px;top:563px;color:#c8c8c8">    pointCount = 3</div><div class="m" style="left:3px;top:577px;color:#d0d0d0">67</div><div class="m" style="left:3px;top:591px;color:#d0d0d0">68</div><div class="m" style="left:32px;top:591px;color:#c8c8c8">    <span style="color:#c9dcff;font-weight:bold">with</span> <span style="color:#ffe27a;font-weight:bold">open</span>(txt_fpath_pass_values, <span style="color:#8a8cff">'r'</span>) <span style="color:#c9dcff;font-weight:bold">as</span> read_obj:</div><div class="m" style="left:3px;top:605px;color:#d0d0d0">69</div><div class="m" style="left:32px;top:605px;color:#c8c8c8">        csv_reader = reader(read_obj)</div><div class="m" style="left:3px;top:619px;color:#d0d0d0">70</div><div class="m" style="left:32px;top:619px;color:#c8c8c8">        <span style="color:#ffe27a;font-weight:bold">next</span>(csv_reader)</div><div class="m" style="left:3px;top:633px;color:#d0d0d0">71</div><div class="m" style="left:3px;top:647px;color:#d0d0d0">72</div><div class="m" style="left:32px;top:647px;color:#c8c8c8">        <span style="color:#1fd41f"># Null Passes Low</span></div><div class="m" style="left:3px;top:661px;color:#d0d0d0">73</div><div class="m" style="left:32px;top:661px;color:#c8c8c8">        spline_null_low = c4d.BaseObject(c4d.<span style="color:#ffab2e">Onull</span>)</div><div class="m" style="left:3px;top:675px;color:#d0d0d0">74</div><div class="m" style="left:32px;top:675px;color:#c8c8c8">        spline_null_low[c4d.<span style="color:#ffab2e">ID_BASELIST_NAME</span>] = <span style="color:#8a8cff">"Null_Spline_Low"</span></div><div class="m" style="left:3px;top:689px;color:#d0d0d0">75</div><div class="m" style="left:32px;top:689px;color:#c8c8c8">        doc.InsertObject(spline_null_low)</div><div class="m" style="left:3px;top:703px;color:#d0d0d0">76</div><div class="m" style="left:32px;top:703px;color:#c8c8c8">        c4d.EventAdd()</div><div class="m" style="left:3px;top:717px;color:#d0d0d0">77</div><div class="m" style="left:3px;top:731px;color:#d0d0d0">78</div><div class="m" style="left:32px;top:731px;color:#c8c8c8">        <span style="color:#1fd41f"># Null Passes High</span></div><div class="m" style="left:3px;top:745px;color:#d0d0d0">79</div><div class="m" style="left:32px;top:745px;color:#c8c8c8">        spline_null_high = c4d.BaseObject(c4d.<span style="color:#ffab2e">Onull</span>)</div><div class="m" style="left:3px;top:759px;color:#d0d0d0">80</div><div class="m" style="left:32px;top:759px;color:#c8c8c8">        spline_null_high[c4d.<span style="color:#ffab2e">ID_BASELIST_NAME</span>] = <span style="color:#8a8cff">"Null_Spline_High"</span></div><div class="m" style="left:3px;top:773px;color:#d0d0d0">81</div><div class="m" style="left:32px;top:773px;color:#c8c8c8">        doc.InsertObject(spline_null_high)</div><div class="m" style="left:3px;top:787px;color:#d0d0d0">82</div><div class="m" style="left:32px;top:787px;color:#c8c8c8">        c4d.EventAdd()</div><div class="m" style="left:3px;top:801px;color:#d0d0d0">83</div><div class="m" style="left:3px;top:815px;color:#d0d0d0">84</div><div class="m" style="left:32px;top:815px;color:#c8c8c8">        <span style="color:#c9dcff;font-weight:bold">for</span> line <span style="color:#c9dcff;font-weight:bold">in</span> csv_reader:</div><div class="m" style="left:3px;top:829px;color:#d0d0d0">85</div><div class="m" style="left:3px;top:843px;color:#d0d0d0">86</div><div class="m" style="left:32px;top:843px;color:#c8c8c8">            <span style="color:#1fd41f"># PASSES LOW</span></div><div class="m" style="left:3px;top:857px;color:#d0d0d0">87</div><div class="m" style="left:32px;top:857px;color:#c8c8c8">            <span style="color:#c9dcff;font-weight:bold">if</span> line[2] &gt; 0:</div><div class="m" style="left:3px;top:871px;color:#d0d0d0">88</div><div class="m" style="left:32px;top:871px;color:#c8c8c8">                <span style="color:#c9dcff;font-weight:bold">for</span> i <span style="color:#c9dcff;font-weight:bold">in</span> <span style="color:#ffe27a;font-weight:bold">range</span>(<span style="color:#ffe27a;font-weight:bold">int</span>(<span style="color:#ffe27a;font-weight:bold">round</span>(<span style="color:#ffe27a;font-weight:bold">float</span>(line[2])))):</div><div class="m" style="left:3px;top:885px;color:#d0d0d0">89</div><div class="m" style="left:32px;top:885px;color:#c8c8c8">                    Spline = c4d.SplineObject(pointCount,0)</div><div class="m" style="left:3px;top:899px;color:#d0d0d0">90</div><div class="m" style="left:3px;top:913px;color:#d0d0d0">91</div><div class="m" style="left:32px;top:913px;color:#c8c8c8">                    Spline[c4d.<span style="color:#ffab2e">SPLINEOBJECT_TYPE</span>] = 3</div><div class="m" style="left:3px;top:927px;color:#d0d0d0">92</div><div class="m" style="left:32px;top:927px;color:#c8c8c8">                    Spline[c4d.<span style="color:#ffab2e">SPLINEOBJECT_ANGLE</span>] = 0</div><div class="m" style="left:3px;top:941px;color:#d0d0d0">93</div><div class="m" style="left:32px;top:941px;color:#c8c8c8">                    n = 0</div><div class="m" style="left:3px;top:955px;color:#d0d0d0">94</div><div class="m" style="left:3px;top:969px;color:#d0d0d0">95</div><div class="m" style="left:32px;top:969px;color:#c8c8c8">                    <span style="color:#1fd41f"># start point</span></div><div class="m" style="left:3px;top:983px;color:#d0d0d0">96</div><div class="m" style="left:32px;top:983px;color:#c8c8c8">                    pos = c4d.Vector()</div><div class="m" style="left:3px;top:997px;color:#d0d0d0">97</div><div class="m" style="left:32px;top:997px;color:#c8c8c8">                    pos.x = <span style="color:#ffe27a;font-weight:bold">float</span>(line[4]) *10500 - 10500/2</div><div class="m" style="left:3px;top:1011px;color:#d0d0d0">98</div><div class="m" style="left:32px;top:1011px;color:#c8c8c8">                    pos.y = 0</div><div class="m" style="left:3px;top:1025px;color:#d0d0d0">99</div><div class="m" style="left:32px;top:1025px;color:#c8c8c8">                    pos.z = <span style="color:#ffe27a;font-weight:bold">float</span>(line[5]) *6800 - 6800/2</div><div class="m" style="left:3px;top:1039px;color:#d0d0d0">100</div><div class="m" style="left:32px;top:1039px;color:#c8c8c8">                    Spline.SetPoint(n,pos)</div><div class="m" style="left:3px;top:1053px;color:#d0d0d0">101</div><div class="m" style="left:3px;top:1067px;color:#d0d0d0">102</div><div class="m" style="left:32px;top:1067px;color:#c8c8c8">                    <span style="color:#1fd41f"># distance between points</span></div><div class="m" style="left:3px;top:1081px;color:#d0d0d0">103</div><div class="m" style="left:3px;top:1095px;color:#d0d0d0">104</div><div class="m" style="left:32px;top:1095px;color:#c8c8c8">                    <span style="color:#1fd41f"># middle point</span></div><div class="m" style="left:3px;top:1109px;color:#d0d0d0">105</div><div class="m" style="left:32px;top:1109px;color:#c8c8c8">                    pos2 = c4d.Vector()</div><div class="m" style="left:3px;top:1123px;color:#d0d0d0">106</div><div class="m" style="left:32px;top:1123px;color:#c8c8c8">                    pos2.x = ((<span style="color:#ffe27a;font-weight:bold">float</span>(line[4]) + <span style="color:#ffe27a;font-weight:bold">float</span>(line[6])) / 2) *10500 - 10500/2 + random.randint(-100, 100)</div><div class="m" style="left:3px;top:1137px;color:#d0d0d0">107</div><div class="m" style="left:32px;top:1137px;color:#c8c8c8">                    pos2.y = 20</div><div class="m" style="left:3px;top:1151px;color:#d0d0d0">108</div><div class="m" style="left:32px;top:1151px;color:#c8c8c8">                    <span style="color:#1fd41f"># pos2.y =  (line[10]*100) +  ((line[10]*100)*0.9) - (52.5 - line[5]) # + random.randint(-100, 200)</span></div><div class="m" style="left:3px;top:1165px;color:#d0d0d0">109</div><div class="m" style="left:32px;top:1165px;color:#c8c8c8">                    <span style="color:#1fd41f"># pos2.y = ((line[7]+line[10])/2) *100 # (line[10]*100) +  ((line[10]*100)*0.9)</span></div><div class="m" style="left:3px;top:1179px;color:#d0d0d0">110</div><div class="m" style="left:32px;top:1179px;color:#c8c8c8">                    pos2.z =  ((<span style="color:#ffe27a;font-weight:bold">float</span>(line[5]) + <span style="color:#ffe27a;font-weight:bold">float</span>(line[7])) / 2) *6800 - 6800/2 + random.randint(-100, 100)</div><div class="m" style="left:3px;top:1193px;color:#d0d0d0">111</div><div class="m" style="left:32px;top:1193px;color:#c8c8c8">                    Spline.SetPoint(n+1,pos2)</div><div class="m" style="left:3px;top:1207px;color:#d0d0d0">112</div><div class="m" style="left:3px;top:1221px;color:#d0d0d0">113</div><div class="m" style="left:32px;top:1221px;color:#c8c8c8">                    <span style="color:#1fd41f"># end point</span></div></div><div style="left:1289px;top:1335px;width:830px;height:1px;background:#5e5e5e"></div><div style="left:1287px;top:1337px;width:832px;height:16px;background:#303030"><div class="t" style="left:10px;top:1px;color:#d0d0d0;font-size:11.8px">Line 95, Pos. 34</div></div><div style="left:1287px;top:1353px;width:832px;height:1px;background:#5e5e5e"></div><div style="left:2121px;top:109px;width:12px;height:1243px;background:#2d2d2d;border-radius:6px;border:1px solid #3a3a3a"><div style="left:1px;top:125px;width:9px;height:403px;background:#626262;border-radius:5px"></div><svg width="12" height="16"><path d="M3 11 L6 3 L9 11 L6 8.5 Z" fill="#8a8a8a"/></svg><svg width="12" height="1243"><path d="M3 1229 L6 1237 L9 1229 L6 1231.5 Z" fill="#8a8a8a"/></svg></div><div style="left:1287px;top:1356px;width:833px;height:12px;background:#2d2d2d;border-radius:6px;border:1px solid #3a3a3a"><div style="left:12px;top:1px;width:806px;height:9px;background:#656565;border-radius:5px"></div><svg width="833" height="12"><path d="M3 5.5 L10 2.5 L10 8.5 Z M830 5.5 L823 2.5 L823 8.5 Z" fill="#8a8a8a"/></svg></div><div style="left:1985px;top:1373px;width:77px;height:18px;background:linear-gradient(#727272,#5e5e5e);border:1px solid #333;border-radius:9px"><div class="t" style="left:0px;top:1px;color:#e0e0e0;font-size:11.8px;width:77px;text-align:center">Shortcut...</div></div><div style="left:2066px;top:1373px;width:65px;height:18px;background:linear-gradient(#727272,#5e5e5e);border:1px solid #333;border-radius:9px"><div class="t" style="left:0px;top:1px;color:#e0e0e0;font-size:11.8px;width:65px;text-align:center">Execute</div></div><div style="left:2143px;top:25px;width:392px;height:455px;border:1px solid #5a5a5a;background:#444444"></div><div style="left:2144px;top:26px;width:390px;height:21px;background:#444444;border-bottom:1px solid #5a5a5a"><svg style="left:7px;top:5px" width="11" height="11"><path d="M0.2 2.6 L2.6 0.2 M0.2 5.6 L2.6 3.2 M0.2 8.6 L2.6 6.2 M0.2 11.6 L2.6 9.2 M3.2 2.6 L5.6 0.2 M3.2 5.6 L5.6 3.2 M3.2 8.6 L5.6 6.2 M3.2 11.6 L5.6 9.2 M6.2 2.6 L8.6 0.2 M6.2 5.6 L8.6 3.2 M6.2 8.6 L8.6 6.2 M6.2 11.6 L8.6 9.2 M9.2 2.6 L11.6 0.2 M9.2 5.6 L11.6 3.2 M9.2 8.6 L11.6 6.2 M9.2 11.6 L11.6 9.2" stroke="#151515" stroke-width="1.3"/><path d="M0.9 2.8 L2.8 0.9 M0.9 5.8 L2.8 3.9 M0.9 8.8 L2.8 6.9 M0.9 11.8 L2.8 9.9 M3.9 2.8 L5.8 0.9 M3.9 5.8 L5.8 3.9 M3.9 8.8 L5.8 6.9 M3.9 11.8 L5.8 9.9 M6.9 2.8 L8.8 0.9 M6.9 5.8 L8.8 3.9 M6.9 8.8 L8.8 6.9 M6.9 11.8 L8.8 9.9 M9.9 2.8 L11.8 0.9 M9.9 5.8 L11.8 3.9 M9.9 8.8 L11.8 6.9 M9.9 11.8 L11.8 9.9" stroke="#e0e0e0" stroke-width="0.9"/></svg><div class="t" style="left:25px;top:3px;color:#efe68e;font-size:11.8px">File</div><div class="t" style="left:59px;top:3px;color:#b9b9b9;font-size:11.8px">Edit</div><div class="t" style="left:94px;top:3px;color:#b9b9b9;font-size:11.8px">View</div><div class="t" style="left:133px;top:3px;color:#efe68e;font-size:11.8px">Objects</div><div class="t" style="left:188px;top:3px;color:#efe68e;font-size:11.8px">Tags</div><div class="t" style="left:227px;top:3px;color:#b9b9b9;font-size:11.8px">Bookmarks</div><svg width="390" height="21"><circle cx="324" cy="8" r="4" fill="none" stroke="#151515" stroke-width="1.4"/><path d="M327 11 L331 16" stroke="#151515" stroke-width="1.8"/><path d="M339 10 L345 3 L351 10 L349 10 L349 16 L341 16 L341 10 Z" fill="none" stroke="#151515" stroke-width="1.5"/><ellipse cx="364" cy="11" rx="6" ry="2.5" fill="none" stroke="#333" stroke-width="1"/><rect x="376" y="3" width="12" height="14" fill="none" stroke="#151515" stroke-width="1"/><path d="M376 3.5 L388 3.5" stroke="#151515" stroke-width="2"/><path d="M382 7 L382 14 M378.5 10.5 L385.5 10.5" stroke="#151515" stroke-width="1.4"/></svg></div><div style="left:2145px;top:50px;width:374px;height:428px;overflow:hidden"><div style="left:0px;top:0px;width:374px;height:20px;background:#4e4e4e"></div><svg width="50" height="20" style="top:0px"><path d="M8.5 0 L8.5 20" stroke="#9a9a9a" stroke-width="1"/><path d="M8.5 10.5 L15 10.5" stroke="#9a9a9a" stroke-width="1"/></svg><div style="left:15px;top:3px;width:18px;height:16px;"><svg width="18" height="14"><circle cx="5" cy="4" r="2.6" fill="#ddd" stroke="#111" stroke-width="1.2"/><circle cx="10.5" cy="4" r="2.6" fill="#ddd" stroke="#111" stroke-width="1.2"/><rect x="2" y="7" width="11" height="6" fill="#111"/><path d="M13 8.5 L17 7 L17 13 L13 11.5 Z" fill="#111"/><rect x="3.5" y="8.5" width="2.5" height="2" fill="#ddd"/></svg></div><div class="t" style="left:35px;top:3px;color:#c9c9c9;font-size:11.8px">Camera.5</div><div style="left:156px;top:0px;width:40px;height:20px;"><svg width="40" height="20"><rect x="4" y="3.5" width="13" height="13" fill="#6e6e6e"/><path d="M5 15.5 L16 4.5" stroke="#4a4a4a" stroke-width="1.5"/><circle cx="23" cy="6.5" r="2" fill="#5c5c5c"/><circle cx="23" cy="13.5" r="2" fill="#5c5c5c"/><rect x="28" y="5.5" width="9" height="9" fill="none" stroke="#151515" stroke-width="1" stroke-dasharray="2 1.5"/><circle cx="32.5" cy="10" r="1.5" fill="#151515"/></svg></div><div style="left:0px;top:20px;width:374px;height:20px;background:#444444"></div><svg width="50" height="20" style="top:20px"><path d="M8.5 0 L8.5 20" stroke="#9a9a9a" stroke-width="1"/><path d="M8.5 10.5 L15 10.5" stroke="#9a9a9a" stroke-width="1"/></svg><div style="left:15px;top:23px;width:18px;height:16px;"><svg width="18" height="14"><circle cx="5" cy="4" r="2.6" fill="#ddd" stroke="#111" stroke-width="1.2"/><circle cx="10.5" cy="4" r="2.6" fill="#ddd" stroke="#111" stroke-width="1.2"/><rect x="2" y="7" width="11" height="6" fill="#111"/><path d="M13 8.5 L17 7 L17 13 L13 11.5 Z" fill="#111"/><rect x="3.5" y="8.5" width="2.5" height="2" fill="#ddd"/></svg></div><div class="t" style="left:35px;top:23px;color:#c9c9c9;font-size:11.8px">Camera.4</div><div style="left:156px;top:20px;width:40px;height:20px;"><svg width="40" height="20"><rect x="4" y="3.5" width="13" height="13" fill="#6e6e6e"/><path d="M5 15.5 L16 4.5" stroke="#4a4a4a" stroke-width="1.5"/><circle cx="23" cy="6.5" r="2" fill="#e84848"/><circle cx="23" cy="13.5" r="2" fill="#5c5c5c"/><rect x="28" y="5.5" width="9" height="9" fill="none" stroke="#151515" stroke-width="1" stroke-dasharray="2 1.5"/><circle cx="32.5" cy="10" r="1.5" fill="#151515"/></svg></div><div style="left:0px;top:40px;width:374px;height:20px;background:#4e4e4e"></div><svg width="50" height="20" style="top:40px"><path d="M8.5 0 L8.5 20" stroke="#9a9a9a" stroke-width="1"/><rect x="3.5" y="5.5" width="9" height="9" fill="#4a4a4a" stroke="#a8a8a8" stroke-width="1"/><path d="M5.5 10 L10.5 10" stroke="#cfcfcf" stroke-width="1"/><path d="M13 10 L18 10" stroke="#9a9a9a" stroke-width="1"/></svg><div style="left:18px;top:43px;width:18px;height:16px;"><svg width="18" height="16"><path d="M3 2 L3 14 L14 14" fill="none" stroke="#ddd" stroke-width="1.3"/><path d="M12 12 L15 14 L12 16" fill="none" stroke="#ddd" stroke-width="1"/><text x="8" y="9" font-family="Liberation Sans" font-weight="bold" font-size="9" fill="#cfe0ff">0</text></svg></div><div class="t" style="left:35px;top:43px;color:#c9c9c9;font-size:11.8px">PITCH.2</div><div style="left:156px;top:40px;width:40px;height:20px;"><svg width="40" height="20"><rect x="4" y="3.5" width="13" height="13" fill="#6e6e6e"/><path d="M5 15.5 L16 4.5" stroke="#4a4a4a" stroke-width="1.5"/><circle cx="23" cy="6.5" r="2" fill="#5c5c5c"/><circle cx="23" cy="13.5" r="2" fill="#5c5c5c"/></svg></div><div style="left:200px;top:42px;width:14px;height:16px;"><svg width="14" height="16"><rect x="1" y="7" width="11" height="7" fill="#f08a1c"/><path d="M1 3 L12 3 L12 6 L1 6 Z" fill="#222"/><path d="M1 4.5 L12 4.5" stroke="#ddd" stroke-width="1.2" stroke-dasharray="2 1"/><path d="M5 9 L9 10.5 L5 12 Z" fill="#222"/></svg></div><div style="left:0px;top:60px;width:374px;height:20px;background:#444444"></div><svg width="50" height="20" style="top:60px"><path d="M8.5 0 L8.5 20" stroke="#9a9a9a" stroke-width="1"/><path d="M19.5 0 L19.5 20" stroke="#9a9a9a" stroke-width="1"/><rect x="14.5" y="5.5" width="9" height="9" fill="#4a4a4a" stroke="#a8a8a8" stroke-width="1"/><path d="M16.5 10 L21.5 10" stroke="#cfcfcf" stroke-width="1"/><path d="M19 7.5 L19 12.5" stroke="#cfcfcf" stroke-width="1"/><path d="M24 10 L29 10" stroke="#9a9a9a" stroke-width="1"/></svg><div style="left:29px;top:63px;width:18px;height:16px;"><svg width="18" height="16"><path d="M3 2 L3 14 L14 14" fill="none" stroke="#ddd" stroke-width="1.3"/><path d="M12 12 L15 14 L12 16" fill="none" stroke="#ddd" stroke-width="1"/><text x="8" y="9" font-family="Liberation Sans" font-weight="bold" font-size="9" fill="#cfe0ff">0</text></svg></div><div class="t" style="left:46px;top:63px;color:#c9c9c9;font-size:11.8px">Lines</div><div style="left:156px;top:60px;width:40px;height:20px;"><svg width="40" height="20"><rect x="4" y="3.5" width="13" height="13" fill="#6e6e6e"/><path d="M5 15.5 L16 4.5" stroke="#4a4a4a" stroke-width="1.5"/><circle cx="23" cy="6.5" r="2" fill="#5c5c5c"/><circle cx="23" cy="13.5" r="2" fill="#5c5c5c"/></svg></div><div style="left:198px;top:61px;width:18px;height:18px;background:#5a6070;"><svg width="18" height="18"><circle cx="9" cy="9" r="8" fill="#1c1c1c"/></svg></div><div style="left:0px;top:80px;width:374px;height:20px;background:#4e4e4e"></div><svg width="50" height="20" style="top:80px"><path d="M8.5 0 L8.5 20" stroke="#9a9a9a" stroke-width="1"/><path d="M19.5 0 L19.5 20" stroke="#9a9a9a" stroke-width="1"/><rect x="14.5" y="5.5" width="9" height="9" fill="#4a4a4a" stroke="#a8a8a8" stroke-width="1"/><path d="M16.5 10 L21.5 10" stroke="#cfcfcf" stroke-width="1"/><path d="M19 7.5 L19 12.5" stroke="#cfcfcf" stroke-width="1"/><path d="M24 10 L29 10" stroke="#9a9a9a" stroke-width="1"/></svg><div style="left:29px;top:83px;width:18px;height:16px;"><svg width="18" height="16"><path d="M3 2 L3 14 L14 14" fill="none" stroke="#ddd" stroke-width="1.3"/><path d="M12 12 L15 14 L12 16" fill="none" stroke="#ddd" stroke-width="1"/><text x="8" y="9" font-family="Liberation Sans" font-weight="bold" font-size="9" fill="#cfe0ff">0</text></svg></div><div class="t" style="left:46px;top:83px;color:#c9c9c9;font-size:11.8px">Grid</div><div style="left:156px;top:80px;width:40px;height:20px;"><svg width="40" height="20"><rect x="4" y="3.5" width="13" height="13" fill="#6e6e6e"/><path d="M5 15.5 L16 4.5" stroke="#4a4a4a" stroke-width="1.5"/><circle cx="23" cy="6.5" r="2" fill="#e84848"/><circle cx="23" cy="13.5" r="2" fill="#5c5c5c"/></svg></div><div style="left:198px;top:81px;width:18px;height:18px;background:#5a6070;"><svg width="18" height="18"><circle cx="9" cy="9" r="8" fill="#cfcfcf"/></svg></div><div style="left:0px;top:100px;width:374px;height:20px;background:#444444"></div><svg width="50" height="20" style="top:100px"><path d="M8.5 0 L8.5 20" stroke="#9a9a9a" stroke-width="1"/><rect x="3.5" y="5.5" width="9" height="9" fill="#4a4a4a" stroke="#a8a8a8" stroke-width="1"/><path d="M5.5 10 L10.5 10" stroke="#cfcfcf" stroke-width="1"/><path d="M13 10 L18 10" stroke="#9a9a9a" stroke-width="1"/></svg><div style="left:18px;top:103px;width:18px;height:16px;"><svg width="18" height="16"><path d="M3 2 L3 14 L14 14" fill="none" stroke="#ddd" stroke-width="1.3"/><path d="M12 12 L15 14 L12 16" fill="none" stroke="#ddd" stroke-width="1"/><text x="8" y="9" font-family="Liberation Sans" font-weight="bold" font-size="9" fill="#cfe0ff">0</text></svg></div><div class="t" style="left:35px;top:103px;color:#c9c9c9;font-size:11.8px">PITCH</div><div style="left:156px;top:100px;width:40px;height:20px;"><svg width="40" height="20"><rect x="4" y="3.5" width="13" height="13" fill="#6e6e6e"/><path d="M5 15.5 L16 4.5" stroke="#4a4a4a" stroke-width="1.5"/><circle cx="23" cy="6.5" r="2" fill="#5c5c5c"/><circle cx="23" cy="13.5" r="2" fill="#5c5c5c"/></svg></div><div style="left:200px;top:102px;width:14px;height:16px;"><svg width="14" height="16"><rect x="1" y="7" width="11" height="7" fill="#f08a1c"/><path d="M1 3 L12 3 L12 6 L1 6 Z" fill="#222"/><path d="M1 4.5 L12 4.5" stroke="#ddd" stroke-width="1.2" stroke-dasharray="2 1"/><path d="M5 9 L9 10.5 L5 12 Z" fill="#222"/></svg></div><div style="left:0px;top:120px;width:374px;height:20px;background:#4e4e4e"></div><svg width="50" height="20" style="top:120px"><path d="M8.5 0 L8.5 20" stroke="#9a9a9a" stroke-width="1"/><path d="M19.5 0 L19.5 20" stroke="#9a9a9a" stroke-width="1"/><rect x="14.5" y="5.5" width="9" height="9" fill="#4a4a4a" stroke="#a8a8a8" stroke-width="1"/><path d="M16.5 10 L21.5 10" stroke="#cfcfcf" stroke-width="1"/><path d="M19 7.5 L19 12.5" stroke="#cfcfcf" stroke-width="1"/><path d="M24 10 L29 10" stroke="#9a9a9a" stroke-width="1"/></svg><div style="left:29px;top:123px;width:18px;height:16px;"><svg width="18" height="16"><path d="M3 2 L3 14 L14 14" fill="none" stroke="#ddd" stroke-width="1.3"/><path d="M12 12 L15 14 L12 16" fill="none" stroke="#ddd" stroke-width="1"/><text x="8" y="9" font-family="Liberation Sans" font-weight="bold" font-size="9" fill="#cfe0ff">0</text></svg></div><div class="t" style="left:46px;top:123px;color:#c9c9c9;font-size:11.8px">Lines</div><div style="left:156px;top:120px;width:40px;height:20px;"><svg width="40" height="20"><rect x="4" y="3.5" width="13" height="13" fill="#6e6e6e"/><path d="M5 15.5 L16 4.5" stroke="#4a4a4a" stroke-width="1.5"/><circle cx="23" cy="6.5" r="2" fill="#5c5c5c"/><circle cx="23" cy="13.5" r="2" fill="#5c5c5c"/></svg></div><div style="left:198px;top:121px;width:18px;height:18px;background:#5a6070;"><svg width="18" height="18"><circle cx="9" cy="9" r="8" fill="#1c1c1c"/></svg></div><div style="left:0px;top:140px;width:374px;height:20px;background:#444444"></div><svg width="50" height="20" style="top:140px"><path d="M8.5 0 L8.5 20" stroke="#9a9a9a" stroke-width="1"/><path d="M19.5 0 L19.5 20" stroke="#9a9a9a" stroke-width="1"/><rect x="14.5" y="5.5" width="9" height="9" fill="#4a4a4a" stroke="#a8a8a8" stroke-width="1"/><path d="M16.5 10 L21.5 10" stroke="#cfcfcf" stroke-width="1"/><path d="M19 7.5 L19 12.5" stroke="#cfcfcf" stroke-width="1"/><path d="M24 10 L29 10" stroke="#9a9a9a" stroke-width="1"/></svg><div style="left:29px;top:143px;width:18px;height:16px;"><svg width="18" height="16"><path d="M3 2 L3 14 L14 14" fill="none" stroke="#ddd" stroke-width="1.3"/><path d="M12 12 L15 14 L12 16" fill="none" stroke="#ddd" stroke-width="1"/><text x="8" y="9" font-family="Liberation Sans" font-weight="bold" font-size="9" fill="#cfe0ff">0</text></svg></div><div class="t" style="left:46px;top:143px;color:#c9c9c9;font-size:11.8px">Grid</div><div style="left:156px;top:140px;width:40px;height:20px;"><svg width="40" height="20"><rect x="4" y="3.5" width="13" height="13" fill="#6e6e6e"/><path d="M5 15.5 L16 4.5" stroke="#4a4a4a" stroke-width="1.5"/><circle cx="23" cy="6.5" r="2" fill="#e84848"/><circle cx="23" cy="13.5" r="2" fill="#5c5c5c"/></svg></div><div style="left:198px;top:141px;width:18px;height:18px;background:#5a6070;"><svg width="18" height="18"><circle cx="9" cy="9" r="8" fill="#cfcfcf"/></svg></div><div style="left:0px;top:160px;width:374px;height:20px;background:#4e4e4e"></div><svg width="50" height="20" style="top:160px"><path d="M8.5 0 L8.5 20" stroke="#9a9a9a" stroke-width="1"/><path d="M8.5 10.5 L15 10.5" stroke="#9a9a9a" stroke-width="1"/></svg><div style="left:15px;top:163px;width:18px;height:16px;"><svg width="18" height="14"><circle cx="5" cy="4" r="2.6" fill="#ddd" stroke="#111" stroke-width="1.2"/><circle cx="10.5" cy="4" r="2.6" fill="#ddd" stroke="#111" stroke-width="1.2"/><rect x="2" y="7" width="11" height="6" fill="#111"/><path d="M13 8.5 L17 7 L17 13 L13 11.5 Z" fill="#111"/><rect x="3.5" y="8.5" width="2.5" height="2" fill="#ddd"/></svg></div><div class="t" style="left:35px;top:163px;color:#c9c9c9;font-size:11.8px">Camera.3</div><div style="left:156px;top:160px;width:40px;height:20px;"><svg width="40" height="20"><rect x="4" y="3.5" width="13" height="13" fill="#6e6e6e"/><path d="M5 15.5 L16 4.5" stroke="#4a4a4a" stroke-width="1.5"/><circle cx="23" cy="6.5" r="2" fill="#e84848"/><circle cx="23" cy="13.5" r="2" fill="#5c5c5c"/><rect x="28" y="5.5" width="9" height="9" fill="none" stroke="#151515" stroke-width="1" stroke-dasharray="2 1.5"/><circle cx="32.5" cy="10" r="1.5" fill="#151515"/></svg></div><div style="left:0px;top:180px;width:374px;height:20px;background:#444444"></div><svg width="50" height="20" style="top:180px"><path d="M8.5 0 L8.5 20" stroke="#9a9a9a" stroke-width="1"/><path d="M8.5 10.5 L15 10.5" stroke="#9a9a9a" stroke-width="1"/></svg><div style="left:15px;top:183px;width:18px;height:16px;"><svg width="18" height="14"><circle cx="5" cy="4" r="2.6" fill="#ddd" stroke="#111" stroke-width="1.2"/><circle cx="10.5" cy="4" r="2.6" fill="#ddd" stroke="#111" stroke-width="1.2"/><rect x="2" y="7" width="11" height="6" fill="#111"/><path d="M13 8.5 L17 7 L17 13 L13 11.5 Z" fill="#111"/><rect x="3.5" y="8.5" width="2.5" height="2" fill="#ddd"/></svg></div><div class="t" style="left:35px;top:183px;color:#c9c9c9;font-size:11.8px">Camera.2</div><div style="left:156px;top:180px;width:40px;height:20px;"><svg width="40" height="20"><rect x="4" y="3.5" width="13" height="13" fill="#6e6e6e"/><path d="M5 15.5 L16 4.5" stroke="#4a4a4a" stroke-width="1.5"/><circle cx="23" cy="6.5" r="2" fill="#e84848"/><circle cx="23" cy="13.5" r="2" fill="#5c5c5c"/><rect x="28" y="5.5" width="9" height="9" fill="none" stroke="#151515" stroke-width="1" stroke-dasharray="2 1.5"/><circle cx="32.5" cy="10" r="1.5" fill="#151515"/></svg></div><div style="left:0px;top:200px;width:374px;height:20px;background:#4e4e4e"></div><svg width="50" height="20" style="top:200px"><path d="M8.5 0 L8.5 20" stroke="#9a9a9a" stroke-width="1"/><path d="M8.5 10.5 L15 10.5" stroke="#9a9a9a" stroke-width="1"/></svg><div style="left:15px;top:203px;width:18px;height:16px;"><svg width="18" height="14"><circle cx="5" cy="4" r="2.6" fill="#ddd" stroke="#111" stroke-width="1.2"/><circle cx="10.5" cy="4" r="2.6" fill="#ddd" stroke="#111" stroke-width="1.2"/><rect x="2" y="7" width="11" height="6" fill="#111"/><path d="M13 8.5 L17 7 L17 13 L13 11.5 Z" fill="#111"/><rect x="3.5" y="8.5" width="2.5" height="2" fill="#ddd"/></svg></div><div class="t" style="left:35px;top:203px;color:#c9c9c9;font-size:11.8px">Camera.1</div><div style="left:156px;top:200px;width:40px;height:20px;"><svg width="40" height="20"><rect x="4" y="3.5" width="13" height="13" fill="#6e6e6e"/><path d="M5 15.5 L16 4.5" stroke="#4a4a4a" stroke-width="1.5"/><circle cx="23" cy="6.5" r="2" fill="#e84848"/><circle cx="23" cy="13.5" r="2" fill="#5c5c5c"/><rect x="28" y="5.5" width="9" height="9" fill="none" stroke="#151515" stroke-width="1" stroke-dasharray="2 1.5"/><circle cx="32.5" cy="10" r="1.5" fill="#151515"/></svg></div><div style="left:198px;top:202px;width:16px;height:16px;"><svg width="16" height="16"><circle cx="8" cy="8" r="7" fill="#1a1a1a"/><circle cx="8" cy="8" r="5.5" fill="none" stroke="#8fa6ee" stroke-width="1.3"/><circle cx="8" cy="8" r="2.5" fill="none" stroke="#8fa6ee" stroke-width="1.3"/></svg></div><div style="left:0px;top:220px;width:374px;height:20px;background:#444444"></div><svg width="50" height="20" style="top:220px"><path d="M8.5 0 L8.5 20" stroke="#9a9a9a" stroke-width="1"/><path d="M8.5 10.5 L15 10.5" stroke="#9a9a9a" stroke-width="1"/></svg><div style="left:18px;top:223px;width:18px;height:16px;"><svg width="18" height="16"><path d="M3 2 L3 14 L14 14" fill="none" stroke="#ddd" stroke-width="1.3"/><path d="M12 12 L15 14 L12 16" fill="none" stroke="#ddd" stroke-width="1"/><text x="8" y="9" font-family="Liberation Sans" font-weight="bold" font-size="9" fill="#cfe0ff">0</text></svg></div><div class="t" style="left:35px;top:223px;color:#c9c9c9;font-size:11.8px">Camera.Target.1</div><div style="left:156px;top:220px;width:40px;height:20px;"><svg width="40" height="20"><rect x="4" y="3.5" width="13" height="13" fill="#6e6e6e"/><path d="M5 15.5 L16 4.5" stroke="#4a4a4a" stroke-width="1.5"/><circle cx="23" cy="6.5" r="2" fill="#5c5c5c"/><circle cx="23" cy="13.5" r="2" fill="#5c5c5c"/></svg></div><div style="left:0px;top:240px;width:374px;height:20px;background:#4e4e4e"></div><svg width="50" height="20" style="top:240px"><path d="M8.5 0 L8.5 20" stroke="#9a9a9a" stroke-width="1"/><path d="M8.5 10.5 L15 10.5" stroke="#9a9a9a" stroke-width="1"/></svg><div style="left:18px;top:243px;width:18px;height:16px;"><svg width="18" height="16"><text x="2" y="14" font-family="Liberation Serif" font-weight="bold" font-size="17" fill="#3ed07a">T</text></svg></div><div class="t" style="left:35px;top:243px;color:#c9c9c9;font-size:11.8px">MoText.1</div><div style="left:156px;top:240px;width:40px;height:20px;"><svg width="40" height="20"><rect x="4" y="3.5" width="13" height="13" fill="#6e6e6e"/><path d="M5 15.5 L16 4.5" stroke="#4a4a4a" stroke-width="1.5"/><circle cx="23" cy="6.5" r="2" fill="#5c5c5c"/><circle cx="23" cy="13.5" r="2" fill="#5c5c5c"/><path d="M27 10 L30 13 L36 6" fill="none" stroke="#3ed07a" stroke-width="1.6"/></svg></div><div style="left:198px;top:242px;width:18px;height:16px;"><svg width="18" height="16"><circle cx="5" cy="5" r="3" fill="#d27a22"/><circle cx="11" cy="11" r="3" fill="#d27a22"/></svg></div><div style="left:217px;top:241px;width:18px;height:18px;background:#5a6070;"><svg width="18" height="18"><circle cx="9" cy="9" r="8" fill="#1c1c1c"/></svg></div><div style="left:0px;top:260px;width:374px;height:20px;background:#444444"></div><svg width="50" height="20" style="top:260px"><path d="M8.5 0 L8.5 20" stroke="#9a9a9a" stroke-width="1"/><path d="M8.5 10.5 L15 10.5" stroke="#9a9a9a" stroke-width="1"/></svg><div style="left:18px;top:263px;width:18px;height:16px;"><svg width="18" height="16"><text x="2" y="14" font-family="Liberation Serif" font-weight="bold" font-size="17" fill="#3ed07a">T</text></svg></div><div class="t" style="left:35px;top:263px;color:#c9c9c9;font-size:11.8px">MoText</div><div style="left:156px;top:260px;width:40px;height:20px;"><svg width="40" height="20"><rect x="4" y="3.5" width="13" height="13" fill="#6e6e6e"/><path d="M5 15.5 L16 4.5" stroke="#4a4a4a" stroke-width="1.5"/><circle cx="23" cy="6.5" r="2" fill="#5c5c5c"/><circle cx="23" cy="13.5" r="2" fill="#5c5c5c"/><path d="M27 10 L30 13 L36 6" fill="none" stroke="#3ed07a" stroke-width="1.6"/></svg></div><div style="left:198px;top:262px;width:18px;height:16px;"><svg width="18" height="16"><circle cx="5" cy="5" r="3" fill="#d27a22"/><circle cx="11" cy="11" r="3" fill="#d27a22"/></svg></div><div style="left:217px;top:261px;width:18px;height:18px;background:#5a6070;"><svg width="18" height="18"><circle cx="9" cy="9" r="8" fill="#1c1c1c"/></svg></div><div style="left:0px;top:280px;width:374px;height:20px;background:#4e4e4e"></div><svg width="50" height="20" style="top:280px"><path d="M8.5 0 L8.5 20" stroke="#9a9a9a" stroke-width="1"/><path d="M8.5 10.5 L15 10.5" stroke="#9a9a9a" stroke-width="1"/></svg><div style="left:18px;top:283px;width:18px;height:16px;"><svg width="18" height="16"><text x="2" y="14" font-family="Liberation Serif" font-weight="bold" font-size="17" fill="#3ed07a">T</text></svg></div><div class="t" style="left:35px;top:283px;color:#c9c9c9;font-size:11.8px">MoText.4</div><div style="left:156px;top:280px;width:40px;height:20px;"><svg width="40" height="20"><rect x="4" y="3.5" width="13" height="13" fill="#6e6e6e"/><path d="M5 15.5 L16 4.5" stroke="#4a4a4a" stroke-width="1.5"/><circle cx="23" cy="6.5" r="2" fill="#5c5c5c"/><circle cx="23" cy="13.5" r="2" fill="#5c5c5c"/><path d="M27 10 L30 13 L36 6" fill="none" stroke="#3ed07a" stroke-width="1.6"/></svg></div><div style="left:198px;top:282px;width:18px;height:16px;"><svg width="18" height="16"><circle cx="5" cy="5" r="3" fill="#d27a22"/><circle cx="11" cy="11" r="3" fill="#d27a22"/></svg></div><div style="left:217px;top:281px;width:18px;height:18px;background:#5a6070;"><svg width="18" height="18"><circle cx="9" cy="9" r="8" fill="#1c1c1c"/></svg></div><div style="left:0px;top:300px;width:374px;height:20px;background:#444444"></div><svg width="50" height="20" style="top:300px"><path d="M8.5 0 L8.5 20" stroke="#9a9a9a" stroke-width="1"/><path d="M8.5 10.5 L15 10.5" stroke="#9a9a9a" stroke-width="1"/></svg><div style="left:18px;top:303px;width:18px;height:16px;"><svg width="18" height="16"><text x="2" y="14" font-family="Liberation Serif" font-weight="bold" font-size="17" fill="#3ed07a">T</text></svg></div><div class="t" style="left:35px;top:303px;color:#c9c9c9;font-size:11.8px">MoText.3</div><div style="left:156px;top:300px;width:40px;height:20px;"><svg width="40" height="20"><rect x="4" y="3.5" width="13" height="13" fill="#6e6e6e"/><path d="M5 15.5 L16 4.5" stroke="#4a4a4a" stroke-width="1.5"/><circle cx="23" cy="6.5" r="2" fill="#5c5c5c"/><circle cx="23" cy="13.5" r="2" fill="#5c5c5c"/><path d="M27 10 L30 13 L36 6" fill="none" stroke="#3ed07a" stroke-width="1.6"/></svg></div><div style="left:198px;top:302px;width:18px;height:16px;"><svg width="18" height="16"><circle cx="5" cy="5" r="3" fill="#d27a22"/><circle cx="11" cy="11" r="3" fill="#d27a22"/></svg></div><div style="left:217px;top:301px;width:18px;height:18px;background:#5a6070;"><svg width="18" height="18"><circle cx="9" cy="9" r="8" fill="#1c1c1c"/></svg></div><div style="left:0px;top:320px;width:374px;height:20px;background:#4e4e4e"></div><svg width="50" height="20" style="top:320px"><path d="M8.5 0 L8.5 20" stroke="#9a9a9a" stroke-width="1"/><rect x="3.5" y="5.5" width="9" height="9" fill="#4a4a4a" stroke="#a8a8a8" stroke-width="1"/><path d="M5.5 10 L10.5 10" stroke="#cfcfcf" stroke-width="1"/><path d="M8 7.5 L8 12.5" stroke="#cfcfcf" stroke-width="1"/><path d="M13 10 L18 10" stroke="#9a9a9a" stroke-width="1"/></svg><div style="left:18px;top:323px;width:18px;height:16px;"><svg width="18" height="16"><path d="M3 2 L3 14 L14 14" fill="none" stroke="#ddd" stroke-width="1.3"/><path d="M12 12 L15 14 L12 16" fill="none" stroke="#ddd" stroke-width="1"/><text x="8" y="9" font-family="Liberation Sans" font-weight="bold" font-size="9" fill="#cfe0ff">0</text></svg></div><div class="t" style="left:35px;top:323px;color:#c9c9c9;font-size:11.8px">Names down upright</div><div style="left:156px;top:320px;width:40px;height:20px;"><svg width="40" height="20"><rect x="4" y="3.5" width="13" height="13" fill="#6e6e6e"/><path d="M5 15.5 L16 4.5" stroke="#4a4a4a" stroke-width="1.5"/><circle cx="23" cy="6.5" r="2" fill="#e84848"/><circle cx="23" cy="13.5" r="2" fill="#e84848"/></svg></div><div style="left:0px;top:340px;width:374px;height:20px;background:#444444"></div><svg width="50" height="20" style="top:340px"><path d="M8.5 0 L8.5 20" stroke="#9a9a9a" stroke-width="1"/><rect x="3.5" y="5.5" width="9" height="9" fill="#4a4a4a" stroke="#a8a8a8" stroke-width="1"/><path d="M5.5 10 L10.5 10" stroke="#cfcfcf" stroke-width="1"/><path d="M8 7.5 L8 12.5" stroke="#cfcfcf" stroke-width="1"/><path d="M13 10 L18 10" stroke="#9a9a9a" stroke-width="1"/></svg><div style="left:18px;top:343px;width:18px;height:16px;"><svg width="18" height="16"><path d="M3 2 L3 14 L14 14" fill="none" stroke="#ddd" stroke-width="1.3"/><path d="M12 12 L15 14 L12 16" fill="none" stroke="#ddd" stroke-width="1"/><text x="8" y="9" font-family="Liberation Sans" font-weight="bold" font-size="9" fill="#cfe0ff">0</text></svg></div><div class="t" style="left:35px;top:343px;color:#c9c9c9;font-size:11.8px">Names down 1</div><div style="left:156px;top:340px;width:40px;height:20px;"><svg width="40" height="20"><rect x="4" y="3.5" width="13" height="13" fill="#6e6e6e"/><path d="M5 15.5 L16 4.5" stroke="#4a4a4a" stroke-width="1.5"/><circle cx="23" cy="6.5" r="2" fill="#5c5c5c"/><circle cx="23" cy="13.5" r="2" fill="#5c5c5c"/></svg></div><div style="left:0px;top:360px;width:374px;height:20px;background:#4e4e4e"></div><svg width="50" height="20" style="top:360px"><path d="M8.5 0 L8.5 20" stroke="#9a9a9a" stroke-width="1"/><rect x="3.5" y="5.5" width="9" height="9" fill="#4a4a4a" stroke="#a8a8a8" stroke-width="1"/><path d="M5.5 10 L10.5 10" stroke="#cfcfcf" stroke-width="1"/><path d="M8 7.5 L8 12.5" stroke="#cfcfcf" stroke-width="1"/><path d="M13 10 L18 10" stroke="#9a9a9a" stroke-width="1"/></svg><div style="left:18px;top:363px;width:18px;height:16px;"><svg width="18" height="16"><path d="M3 2 L3 14 L14 14" fill="none" stroke="#ddd" stroke-width="1.3"/><path d="M12 12 L15 14 L12 16" fill="none" stroke="#ddd" stroke-width="1"/><text x="8" y="9" font-family="Liberation Sans" font-weight="bold" font-size="9" fill="#cfe0ff">0</text></svg></div><div class="t" style="left:35px;top:363px;color:#c9c9c9;font-size:11.8px">NAMES TOP</div><div style="left:156px;top:360px;width:40px;height:20px;"><svg width="40" height="20"><rect x="4" y="3.5" width="13" height="13" fill="#6e6e6e"/><path d="M5 15.5 L16 4.5" stroke="#4a4a4a" stroke-width="1.5"/><circle cx="23" cy="6.5" r="2" fill="#e84848"/><circle cx="23" cy="13.5" r="2" fill="#e84848"/></svg></div><div style="left:0px;top:380px;width:374px;height:20px;background:#444444"></div><svg width="50" height="20" style="top:380px"><path d="M8.5 0 L8.5 20" stroke="#9a9a9a" stroke-width="1"/><rect x="3.5" y="5.5" width="9" height="9" fill="#4a4a4a" stroke="#a8a8a8" stroke-width="1"/><path d="M5.5 10 L10.5 10" stroke="#cfcfcf" stroke-width="1"/><path d="M13 10 L18 10" stroke="#9a9a9a" stroke-width="1"/></svg><div style="left:18px;top:383px;width:18px;height:16px;"><svg width="18" height="16"><path d="M3 2 L3 14 L14 14" fill="none" stroke="#ddd" stroke-width="1.3"/><path d="M12 12 L15 14 L12 16" fill="none" stroke="#ddd" stroke-width="1"/><text x="8" y="9" font-family="Liberation Sans" font-weight="bold" font-size="9" fill="#cfe0ff">0</text></svg></div><div class="t" style="left:35px;top:383px;color:#c9c9c9;font-size:11.8px">Portugal</div><div style="left:156px;top:380px;width:40px;height:20px;"><svg width="40" height="20"><rect x="4" y="3.5" width="13" height="13" fill="#6e6e6e"/><path d="M5 15.5 L16 4.5" stroke="#4a4a4a" stroke-width="1.5"/><circle cx="23" cy="6.5" r="2" fill="#5c5c5c"/><circle cx="23" cy="13.5" r="2" fill="#5c5c5c"/></svg></div><div style="left:0px;top:400px;width:374px;height:20px;background:#4e4e4e"></div><svg width="50" height="20" style="top:400px"><path d="M8.5 0 L8.5 20" stroke="#9a9a9a" stroke-width="1"/><path d="M19.5 0 L19.5 20" stroke="#9a9a9a" stroke-width="1"/><rect x="14.5" y="5.5" width="9" height="9" fill="#4a4a4a" stroke="#a8a8a8" stroke-width="1"/><path d="M16.5 10 L21.5 10" stroke="#cfcfcf" stroke-width="1"/><path d="M19 7.5 L19 12.5" stroke="#cfcfcf" stroke-width="1"/><path d="M24 10 L29 10" stroke="#9a9a9a" stroke-width="1"/></svg><div style="left:29px;top:403px;width:18px;height:16px;"><svg width="18" height="16"><path d="M4 13 Q6 6 10 8 Q14 10 14 3" fill="none" stroke="#3ed07a" stroke-width="3.5"/><path d="M4 13 Q6 6 10 8 Q14 10 14 3" fill="none" stroke="#cfe" stroke-width="1" stroke-dasharray="2 2"/></svg></div><div class="t" style="left:46px;top:403px;color:#c9c9c9;font-size:11.8px">Sweep High</div><div style="left:156px;top:400px;width:40px;height:20px;"><svg width="40" height="20"><rect x="4" y="3.5" width="13" height="13" fill="#6e6e6e"/><path d="M5 15.5 L16 4.5" stroke="#4a4a4a" stroke-width="1.5"/><circle cx="23" cy="6.5" r="2" fill="#5c5c5c"/><circle cx="23" cy="13.5" r="2" fill="#5c5c5c"/><path d="M27 10 L30 13 L36 6" fill="none" stroke="#3ed07a" stroke-width="1.6"/></svg></div><div style="left:198px;top:401px;width:18px;height:18px;background:#5a6070;"><svg width="18" height="18"><circle cx="9" cy="9" r="8" fill="#10f080"/></svg></div><div style="left:0px;top:420px;width:374px;height:20px;background:#444444"></div><svg width="50" height="20" style="top:420px"><path d="M8.5 0 L8.5 20" stroke="#9a9a9a" stroke-width="1"/><path d="M19.5 0 L19.5 20" stroke="#9a9a9a" stroke-width="1"/><rect x="14.5" y="5.5" width="9" height="9" fill="#4a4a4a" stroke="#a8a8a8" stroke-width="1"/><path d="M16.5 10 L21.5 10" stroke="#cfcfcf" stroke-width="1"/><path d="M19 7.5 L19 12.5" stroke="#cfcfcf" stroke-width="1"/><path d="M24 10 L29 10" stroke="#9a9a9a" stroke-width="1"/></svg><div style="left:29px;top:423px;width:18px;height:16px;"><svg width="18" height="16"><path d="M4 13 Q6 6 10 8 Q14 10 14 3" fill="none" stroke="#3ed07a" stroke-width="3.5"/><path d="M4 13 Q6 6 10 8 Q14 10 14 3" fill="none" stroke="#cfe" stroke-width="1" stroke-dasharray="2 2"/></svg></div><div class="t" style="left:46px;top:423px;color:#c9c9c9;font-size:11.8px">Sweep Low</div><div style="left:156px;top:420px;width:40px;height:20px;"><svg width="40" height="20"><rect x="4" y="3.5" width="13" height="13" fill="#6e6e6e"/><path d="M5 15.5 L16 4.5" stroke="#4a4a4a" stroke-width="1.5"/><circle cx="23" cy="6.5" r="2" fill="#5c5c5c"/><circle cx="23" cy="13.5" r="2" fill="#5c5c5c"/><path d="M27 10 L30 13 L36 6" fill="none" stroke="#3ed07a" stroke-width="1.6"/></svg></div><div style="left:198px;top:421px;width:18px;height:18px;background:#5a6070;"><svg width="18" height="18"><circle cx="9" cy="9" r="8" fill="#00a8f5"/></svg></div><div style="left:156px;top:0px;width:1px;height:440px;background:#3a3a3a"></div><div style="left:195px;top:0px;width:1px;height:440px;background:#3a3a3a"></div></div><div style="left:2520px;top:50px;width:12px;height:428px;background:#2d2d2d;border-radius:6px"><div style="left:1px;top:12px;width:10px;height:228px;background:#5c5c5c;border-radius:5px"></div><svg width="12" height="428"><path d="M3 10 L6 3 L9 10 Z M3 418 L6 425 L9 418 Z" fill="#8a8a8a"/></svg></div><div style="left:2143px;top:482px;width:414px;height:456px;border:1px solid #5a5a5a;background:#444444"></div><div style="left:2144px;top:483px;width:412px;height:22px;background:#444444;border-bottom:1px solid #5a5a5a"><svg style="left:7px;top:5px" width="11" height="11"><path d="M0.2 2.6 L2.6 0.2 M0.2 5.6 L2.6 3.2 M0.2 8.6 L2.6 6.2 M0.2 11.6 L2.6 9.2 M3.2 2.6 L5.6 0.2 M3.2 5.6 L5.6 3.2 M3.2 8.6 L5.6 6.2 M3.2 11.6 L5.6 9.2 M6.2 2.6 L8.6 0.2 M6.2 5.6 L8.6 3.2 M6.2 8.6 L8.6 6.2 M6.2 11.6 L8.6 9.2 M9.2 2.6 L11.6 0.2 M9.2 5.6 L11.6 3.2 M9.2 8.6 L11.6 6.2 M9.2 11.6 L11.6 9.2" stroke="#151515" stroke-width="1.3"/><path d="M0.9 2.8 L2.8 0.9 M0.9 5.8 L2.8 3.9 M0.9 8.8 L2.8 6.9 M0.9 11.8 L2.8 9.9 M3.9 2.8 L5.8 0.9 M3.9 5.8 L5.8 3.9 M3.9 8.8 L5.8 6.9 M3.9 11.8 L5.8 9.9 M6.9 2.8 L8.8 0.9 M6.9 5.8 L8.8 3.9 M6.9 8.8 L8.8 6.9 M6.9 11.8 L8.8 9.9 M9.9 2.8 L11.8 0.9 M9.9 5.8 L11.8 3.9 M9.9 8.8 L11.8 6.9 M9.9 11.8 L11.8 9.9" stroke="#e0e0e0" stroke-width="0.9"/></svg><div class="t" style="left:27px;top:3px;color:#efe68e;font-size:11.8px">Create</div><div class="t" style="left:76px;top:3px;color:#efe68e;font-size:11.8px">Edit</div><div class="t" style="left:111px;top:3px;color:#b9b9b9;font-size:11.8px">Function</div><div class="t" style="left:171px;top:3px;color:#b9b9b9;font-size:11.8px">Texture</div></div><div style="left:2145px;top:508px;width:44px;height:58px;background-color:#5c5c5c;background-image:linear-gradient(45deg,#7a7a7a 25%,transparent 25%,transparent 75%,#7a7a7a 75%),linear-gradient(45deg,#7a7a7a 25%,transparent 25%,transparent 75%,#7a7a7a 75%);background-size:10px 10px;background-position:0 0,5px 5px;border:1px solid #3a3a3a;overflow:hidden"><div style="left:0px;top:30px;width:44px;height:12px;background:repeating-linear-gradient(90deg,#6d7886 0 5px,#56606c 5px 10px);opacity:0.9"></div><svg width="44" height="44"><circle cx="22" cy="21" r="19.5" fill="#ffffff"/></svg><div style="left:0px;top:42px;width:44px;height:16px;background:#666666"><div class="t" style="left:2px;top:1px;color:#d8d8d8;font-size:11.8px">Mat.1</div></div></div><div style="left:2194px;top:508px;width:44px;height:58px;background-color:#5c5c5c;background-image:linear-gradient(45deg,#7a7a7a 25%,transparent 25%,transparent 75%,#7a7a7a 75%),linear-gradient(45deg,#7a7a7a 25%,transparent 25%,transparent 75%,#7a7a7a 75%);background-size:10px 10px;background-position:0 0,5px 5px;border:1px solid #3a3a3a;overflow:hidden"><div style="left:0px;top:30px;width:44px;height:12px;background:repeating-linear-gradient(90deg,#6d7886 0 5px,#56606c 5px 10px);opacity:0.9"></div><svg width="44" height="44"><circle cx="22" cy="21" r="19.5" fill="#0a7ef7"/></svg><div style="left:0px;top:42px;width:44px;height:16px;background:#666666"><div class="t" style="left:2px;top:1px;color:#d8d8d8;font-size:11.8px">Mat.7</div></div></div><div style="left:2243px;top:508px;width:44px;height:58px;background-color:#5c5c5c;background-image:linear-gradient(45deg,#7a7a7a 25%,transparent 25%,transparent 75%,#7a7a7a 75%),linear-gradient(45deg,#7a7a7a 25%,transparent 25%,transparent 75%,#7a7a7a 75%);background-size:10px 10px;background-position:0 0,5px 5px;border:1px solid #3a3a3a;overflow:hidden"><div style="left:0px;top:30px;width:44px;height:12px;background:repeating-linear-gradient(90deg,#6d7886 0 5px,#56606c 5px 10px);opacity:0.9"></div><svg width="44" height="44"><circle cx="22" cy="21" r="19.5" fill="#f2f2f2"/></svg><div style="left:0px;top:42px;width:44px;height:16px;background:#666666"><div class="t" style="left:2px;top:1px;color:#d8d8d8;font-size:11.8px">Mat.5</div></div></div><div style="left:2292px;top:508px;width:44px;height:58px;background-color:#5c5c5c;background-image:linear-gradient(45deg,#7a7a7a 25%,transparent 25%,transparent 75%,#7a7a7a 75%),linear-gradient(45deg,#7a7a7a 25%,transparent 25%,transparent 75%,#7a7a7a 75%);background-size:10px 10px;background-position:0 0,5px 5px;border:1px solid #3a3a3a;overflow:hidden"><div style="left:0px;top:30px;width:44px;height:12px;background:repeating-linear-gradient(90deg,#6d7886 0 5px,#56606c 5px 10px);opacity:0.9"></div><svg width="44" height="44"><circle cx="22" cy="21" r="19.5" fill="#dedede"/></svg><div style="left:0px;top:42px;width:44px;height:16px;background:#666666"><div class="t" style="left:2px;top:1px;color:#d8d8d8;font-size:11.8px">Mat.5</div></div></div><div style="left:2341px;top:508px;width:44px;height:58px;background-color:#5c5c5c;background-image:linear-gradient(45deg,#7a7a7a 25%,transparent 25%,transparent 75%,#7a7a7a 75%),linear-gradient(45deg,#7a7a7a 25%,transparent 25%,transparent 75%,#7a7a7a 75%);background-size:10px 10px;background-position:0 0,5px 5px;border:1px solid #3a3a3a;overflow:hidden"><div style="left:0px;top:30px;width:44px;height:12px;background:repeating-linear-gradient(90deg,#6d7886 0 5px,#56606c 5px 10px);opacity:0.9"></div><div style="left:0px;top:42px;width:44px;height:16px;background:#666666"><div class="t" style="left:2px;top:1px;color:#d8d8d8;font-size:11.8px">Mat.3</div></div></div><div style="left:2390px;top:508px;width:44px;height:58px;background-color:#5c5c5c;background-image:linear-gradient(45deg,#7a7a7a 25%,transparent 25%,transparent 75%,#7a7a7a 75%),linear-gradient(45deg,#7a7a7a 25%,transparent 25%,transparent 75%,#7a7a7a 75%);background-size:10px 10px;background-position:0 0,5px 5px;border:1px solid #3a3a3a;overflow:hidden"><div style="left:0px;top:30px;width:44px;height:12px;background:repeating-linear-gradient(90deg,#6d7886 0 5px,#56606c 5px 10px);opacity:0.9"></div><svg width="44" height="44"><defs><radialGradient id="dk" cx="0.35" cy="0.35" r="0.7"><stop offset="0" stop-color="#777"/><stop offset="1" stop-color="#111"/></radialGradient></defs><circle cx="22" cy="21" r="19.5" fill="url(#dk)"/></svg><div style="left:0px;top:42px;width:44px;height:16px;background:#666666"><div class="t" style="left:2px;top:1px;color:#d8d8d8;font-size:11.8px">Mat.4</div></div></div><div style="left:2439px;top:508px;width:44px;height:58px;background-color:#5c5c5c;background-image:linear-gradient(45deg,#7a7a7a 25%,transparent 25%,transparent 75%,#7a7a7a 75%),linear-gradient(45deg,#7a7a7a 25%,transparent 25%,transparent 75%,#7a7a7a 75%);background-size:10px 10px;background-position:0 0,5px 5px;border:1px solid #3a3a3a;overflow:hidden"><div style="left:0px;top:30px;width:44px;height:12px;background:repeating-linear-gradient(90deg,#6d7886 0 5px,#56606c 5px 10px);opacity:0.9"></div><svg width="44" height="44"><circle cx="22" cy="21" r="19.5" fill="#1e1e1e"/></svg><div style="left:0px;top:42px;width:44px;height:16px;background:#666666"><div class="t" style="left:2px;top:1px;color:#d8d8d8;font-size:11.8px">Mat.4</div></div></div><div style="left:2488px;top:508px;width:44px;height:58px;background-color:#5c5c5c;background-image:linear-gradient(45deg,#7a7a7a 25%,transparent 25%,transparent 75%,#7a7a7a 75%),linear-gradient(45deg,#7a7a7a 25%,transparent 25%,transparent 75%,#7a7a7a 75%);background-size:10px 10px;background-position:0 0,5px 5px;border:1px solid #3a3a3a;overflow:hidden"><div style="left:0px;top:30px;width:44px;height:12px;background:repeating-linear-gradient(90deg,#6d7886 0 5px,#56606c 5px 10px);opacity:0.9"></div><svg width="44" height="44"><circle cx="22" cy="21" r="19.5" fill="#bdbdbd"/></svg><div style="left:0px;top:42px;width:44px;height:16px;background:#666666"><div class="t" style="left:2px;top:1px;color:#d8d8d8;font-size:11.8px">Mat.4</div></div></div><div style="left:2145px;top:572px;width:44px;height:58px;background-color:#5c5c5c;background-image:linear-gradient(45deg,#7a7a7a 25%,transparent 25%,transparent 75%,#7a7a7a 75%),linear-gradient(45deg,#7a7a7a 25%,transparent 25%,transparent 75%,#7a7a7a 75%);background-size:10px 10px;background-position:0 0,5px 5px;border:1px solid #3a3a3a;overflow:hidden"><div style="left:0px;top:30px;width:44px;height:12px;background:repeating-linear-gradient(90deg,#6d7886 0 5px,#56606c 5px 10px);opacity:0.9"></div><svg width="44" height="44"><circle cx="22" cy="21" r="19.5" fill="#08f27e"/></svg><div style="left:0px;top:42px;width:44px;height:16px;background:#666666"><div class="t" style="left:2px;top:1px;color:#d8d8d8;font-size:11.8px">Mat</div></div></div><div style="left:2194px;top:572px;width:44px;height:58px;background-color:#5c5c5c;background-image:linear-gradient(45deg,#7a7a7a 25%,transparent 25%,transparent 75%,#7a7a7a 75%),linear-gradient(45deg,#7a7a7a 25%,transparent 25%,transparent 75%,#7a7a7a 75%);background-size:10px 10px;background-position:0 0,5px 5px;border:1px solid #3a3a3a;overflow:hidden"><div style="left:0px;top:30px;width:44px;height:12px;background:repeating-linear-gradient(90deg,#6d7886 0 5px,#56606c 5px 10px);opacity:0.9"></div><svg width="44" height="44"><circle cx="22" cy="21" r="19.5" fill="#00a8f5"/></svg><div style="left:0px;top:42px;width:44px;height:16px;background:#666666"><div class="t" style="left:2px;top:1px;color:#d8d8d8;font-size:11.8px">Mat.2</div></div></div><div style="left:2243px;top:572px;width:44px;height:58px;background-color:#5c5c5c;background-image:linear-gradient(45deg,#7a7a7a 25%,transparent 25%,transparent 75%,#7a7a7a 75%),linear-gradient(45deg,#7a7a7a 25%,transparent 25%,transparent 75%,#7a7a7a 75%);background-size:10px 10px;background-position:0 0,5px 5px;border:1px solid #3a3a3a;overflow:hidden"><div style="left:0px;top:30px;width:44px;height:12px;background:repeating-linear-gradient(90deg,#6d7886 0 5px,#56606c 5px 10px);opacity:0.9"></div><svg width="44" height="44"><circle cx="22" cy="21" r="19.5" fill="#f000f5"/></svg><div style="left:0px;top:42px;width:44px;height:16px;background:#666666"><div class="t" style="left:2px;top:1px;color:#d8d8d8;font-size:11.8px">Mat.1</div></div></div><div style="left:2143px;top:941px;width:392px;height:454px;border:1px solid #5a5a5a;border-bottom:none;background:#444444"></div><div style="left:2144px;top:942px;width:390px;height:22px;background:#444444;border-bottom:1px solid #5a5a5a"><svg style="left:6px;top:5px" width="11" height="11"><path d="M0.2 2.6 L2.6 0.2 M0.2 5.6 L2.6 3.2 M0.2 8.6 L2.6 6.2 M0.2 11.6 L2.6 9.2 M3.2 2.6 L5.6 0.2 M3.2 5.6 L5.6 3.2 M3.2 8.6 L5.6 6.2 M3.2 11.6 L5.6 9.2 M6.2 2.6 L8.6 0.2 M6.2 5.6 L8.6 3.2 M6.2 8.6 L8.6 6.2 M6.2 11.6 L8.6 9.2 M9.2 2.6 L11.6 0.2 M9.2 5.6 L11.6 3.2 M9.2 8.6 L11.6 6.2 M9.2 11.6 L11.6 9.2" stroke="#151515" stroke-width="1.3"/><path d="M0.9 2.8 L2.8 0.9 M0.9 5.8 L2.8 3.9 M0.9 8.8 L2.8 6.9 M0.9 11.8 L2.8 9.9 M3.9 2.8 L5.8 0.9 M3.9 5.8 L5.8 3.9 M3.9 8.8 L5.8 6.9 M3.9 11.8 L5.8 9.9 M6.9 2.8 L8.8 0.9 M6.9 5.8 L8.8 3.9 M6.9 8.8 L8.8 6.9 M6.9 11.8 L8.8 9.9 M9.9 2.8 L11.8 0.9 M9.9 5.8 L11.8 3.9 M9.9 8.8 L11.8 6.9 M9.9 11.8 L11.8 9.9" stroke="#e0e0e0" stroke-width="0.9"/></svg><div class="t" style="left:26px;top:3px;color:#b9b9b9;font-size:11.8px">Mode</div><div class="t" style="left:69px;top:3px;color:#b9b9b9;font-size:11.8px">Edit</div><div class="t" style="left:105px;top:3px;color:#b9b9b9;font-size:11.8px">User Data</div><svg width="390" height="22"><path d="M240 10.5 L248 5 L246 10.5 L248 16 Z" fill="#151515"/><path d="M248 5 L256 10.5 L248 16 Z" fill="none" stroke="#666" stroke-width="0.8"/><path d="M290 4 L294 16 L290 13 L286 16 Z" fill="#151515"/><circle cx="320" cy="8" r="4" fill="none" stroke="#151515" stroke-width="1.3"/><path d="M323 11 L327 15" stroke="#151515" stroke-width="1.7"/><rect x="340" y="10" width="9" height="7" rx="1" fill="none" stroke="#151515" stroke-width="1.2"/><path d="M341.5 10 L341.5 7 A3 3 0 0 1 347.5 7" fill="none" stroke="#151515" stroke-width="1.2"/><circle cx="362" cy="11" r="6" fill="none" stroke="#151515" stroke-width="1.2"/><circle cx="362" cy="11" r="3" fill="none" stroke="#151515" stroke-width="1.2"/><rect x="376" y="4" width="11" height="14" fill="none" stroke="#151515" stroke-width="1"/><path d="M376 4.5 L387 4.5" stroke="#151515" stroke-width="2"/><path d="M381.5 8 L381.5 15 M378 11.5 L385 11.5" stroke="#151515" stroke-width="1.4"/></svg></div><div style="left:2535px;top:25px;width:22px;height:1370px;background:#444444"></div><div style="left:2536px;top:26px;width:20px;height:51px;background:#5e5e5e;border-radius:0 5px 5px 0;border-bottom:1px solid #2a2a2a"><svg width="20" height="51"><g transform="translate(6,6) rotate(90)"><text x="0" y="-1" font-family="Liberation Sans" font-size="12" fill="#f3a521">Objects</text></g></svg></div><div style="left:2536px;top:77px;width:20px;height:43px;background:#3a3a3a;border-radius:0 5px 5px 0;border-bottom:1px solid #2a2a2a"><svg width="20" height="43"><g transform="translate(6,6) rotate(90)"><text x="0" y="-1" font-family="Liberation Sans" font-size="12" fill="#8a8a8a">Takes</text></g></svg></div><div style="left:2536px;top:120px;width:20px;height:100px;background:#3a3a3a;border-radius:0 5px 5px 0;border-bottom:1px solid #2a2a2a"><svg width="20" height="100"><g transform="translate(6,6) rotate(90)"><text x="0" y="-1" font-family="Liberation Sans" font-size="12" fill="#8a8a8a">Content Browser</text></g></svg></div><div style="left:2536px;top:220px;width:20px;height:63px;background:#3a3a3a;border-radius:0 5px 5px 0;border-bottom:1px solid #2a2a2a"><svg width="20" height="63"><g transform="translate(6,6) rotate(90)"><text x="0" y="-1" font-family="Liberation Sans" font-size="12" fill="#8a8a8a">Structure</text></g></svg></div><div style="left:2536px;top:942px;width:20px;height:62px;background:#5e5e5e;border-radius:0 5px 5px 0;border-bottom:1px solid #2a2a2a"><svg width="20" height="62"><g transform="translate(6,6) rotate(90)"><text x="0" y="-1" font-family="Liberation Sans" font-size="12" fill="#f3a521">Attributes</text></g></svg></div><div style="left:2536px;top:1004px;width:20px;height:46px;background:#3a3a3a;border-radius:0 5px 5px 0;border-bottom:1px solid #2a2a2a"><svg width="20" height="46"><g transform="translate(6,6) rotate(90)"><text x="0" y="-1" font-family="Liberation Sans" font-size="12" fill="#8a8a8a">Layers</text></g></svg></div></body></html>
